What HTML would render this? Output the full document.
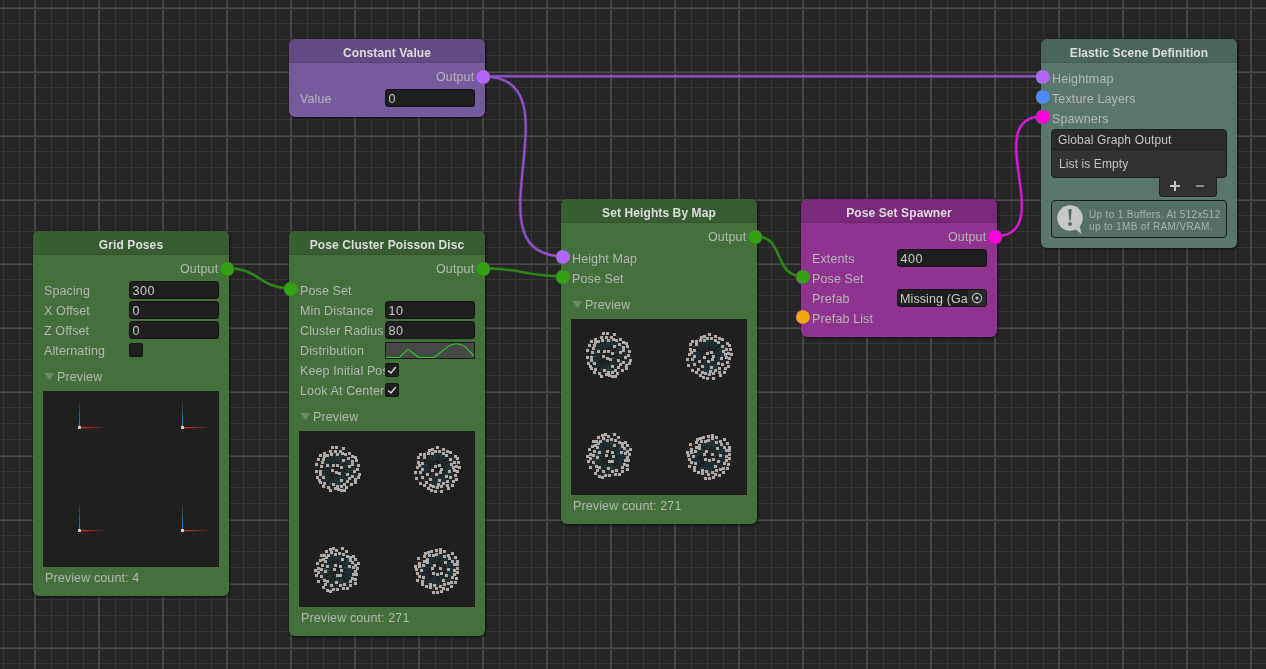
<!DOCTYPE html>
<html><head><meta charset="utf-8"><style>
html,body{margin:0;padding:0;width:1266px;height:669px;overflow:hidden}
body{position:relative;background-color:#262626;
background-image:
linear-gradient(to right,#444 2px,transparent 2px),
linear-gradient(to bottom,#3c3c3c 1px,#4a4a4a 1px,#4a4a4a 2px,transparent 2px),
linear-gradient(to right,#363636 1px,transparent 1px),
linear-gradient(to bottom,#363636 1px,transparent 1px);
background-size:64px 64px,64px 64px,16px 16px,16px 16px;
background-position:34px 0,0 7px,3px 0,0 7px;
font-family:"Liberation Sans",sans-serif}
.abs{position:absolute}
.node{position:absolute;border-radius:6px;box-shadow:1px 1px 3px rgba(0,0,0,.55),0 0 1px rgba(0,0,0,.5);overflow:hidden}
.hdr{height:24px;line-height:28px;text-align:center;color:#dcdcdc;font-weight:bold;font-size:12px;letter-spacing:0.1px;box-shadow:inset 0 -1px 0 rgba(0,0,0,.08)}
.lbl,.fld,.hdr{will-change:transform}
.lbl{position:absolute;height:20px;line-height:20px;font-size:12px;color:#b5b5b5;white-space:nowrap}
.fld{position:absolute;background:#1f1f1f;border-radius:3px;box-sizing:border-box;border:1px solid #151515;color:#cacaca;font-size:12.5px;letter-spacing:0.6px;line-height:18px;padding-left:2.4px;white-space:nowrap;overflow:hidden}
.cb{position:absolute;width:14px;height:14px;background:#1f1f1f;border-radius:2px;box-sizing:border-box;border:1px solid #151515}
.cb svg{position:absolute;left:-1px;top:-1px}
svg.layer{position:absolute;left:0;top:0}
</style></head><body>
<svg class="layer" width="1266" height="669"><path d="M483,76.2 C763.0,76.2 763.0,76.2 1043,76.2" stroke="#8e52ca" stroke-opacity="0.35" stroke-width="3.4" fill="none"/><path d="M483,76.2 C763.0,76.2 763.0,76.2 1043,76.2" stroke="#8e52ca" stroke-width="2.1" fill="none"/><path d="M483,76.2 C581.488578017961,76.2 464.51142198203894,256.2 563,256.2" stroke="#8e52ca" stroke-opacity="0.35" stroke-width="3.4" fill="none"/><path d="M483,76.2 C581.488578017961,76.2 464.51142198203894,256.2 563,256.2" stroke="#8e52ca" stroke-width="2.1" fill="none"/><path d="M227,268.2 C260.52610922848044,268.2 257.47389077151956,288.2 291,288.2" stroke="#2d8a17" stroke-opacity="0.35" stroke-width="3.4" fill="none"/><path d="M227,268.2 C260.52610922848044,268.2 257.47389077151956,288.2 291,288.2" stroke="#2d8a17" stroke-width="2.1" fill="none"/><path d="M483,268.2 C523.1995024844836,268.2 522.8004975155164,276.2 563,276.2" stroke="#2d8a17" stroke-opacity="0.35" stroke-width="3.4" fill="none"/><path d="M483,268.2 C523.1995024844836,268.2 522.8004975155164,276.2 563,276.2" stroke="#2d8a17" stroke-width="2.1" fill="none"/><path d="M755,236.2 C786.2409987036266,236.2 771.7590012963734,276.2 803,276.2" stroke="#2d8a17" stroke-opacity="0.35" stroke-width="3.4" fill="none"/><path d="M755,236.2 C786.2409987036266,236.2 771.7590012963734,276.2 803,276.2" stroke="#2d8a17" stroke-width="2.1" fill="none"/><path d="M995,236.2 C1059.621977685614,236.2 978.3780223143859,116.2 1043,116.2" stroke="#d81ad6" stroke-opacity="0.35" stroke-width="3.4" fill="none"/><path d="M995,236.2 C1059.621977685614,236.2 978.3780223143859,116.2 1043,116.2" stroke="#d81ad6" stroke-width="2.1" fill="none"/></svg>
<div class="node" style="left:289px;top:39px;width:196px;height:78px;background:#765a9e"><div class="hdr" style="background:#624a82">Constant Value</div></div><div class="lbl" style="right:792px;top:67px;font-size:12.5px;letter-spacing:0.12px;text-align:right">Output</div><div class="lbl" style="left:300px;top:89px;font-size:12.5px;letter-spacing:0.12px">Value</div><div class="fld" style="left:385px;top:89.0px;width:90px;height:18px"><span>0</span></div><div class="node" style="left:1041px;top:39px;width:196px;height:209px;background:#59786b"><div class="hdr" style="background:#4a665b">Elastic Scene Definition</div></div><div class="lbl" style="left:1052px;top:69px;font-size:12.5px;letter-spacing:0.12px">Heightmap</div><div class="lbl" style="left:1052px;top:89px;font-size:12.5px;letter-spacing:0.12px">Texture Layers</div><div class="lbl" style="left:1052px;top:109px;font-size:12.5px;letter-spacing:0.12px">Spawners</div><div class="node" style="left:33px;top:231px;width:196px;height:365px;background:#44713b"><div class="hdr" style="background:#395d32">Grid Poses</div></div><div class="lbl" style="right:1048px;top:259px;font-size:12.5px;letter-spacing:0.12px;text-align:right">Output</div><div class="lbl" style="left:44px;top:281px;font-size:12.5px;letter-spacing:0.12px">Spacing</div><div class="fld" style="left:129px;top:281.0px;width:90px;height:18px"><span>300</span></div><div class="lbl" style="left:44px;top:301px;font-size:12.5px;letter-spacing:0.12px">X Offset</div><div class="fld" style="left:129px;top:301.0px;width:90px;height:18px"><span>0</span></div><div class="lbl" style="left:44px;top:321px;font-size:12.5px;letter-spacing:0.12px">Z Offset</div><div class="fld" style="left:129px;top:321.0px;width:90px;height:18px"><span>0</span></div><div class="lbl" style="left:44px;top:341px;font-size:12.5px;letter-spacing:0.12px">Alternating</div><div class="cb" style="left:129px;top:343px"></div><svg class="abs" style="left:45px;top:373px" width="10" height="9"><polygon points="0,0 9,0 4.5,7.6" fill="#6b8c64"/></svg><div class="lbl" style="left:57px;top:367px;font-size:12.5px;letter-spacing:0.12px">Preview</div><div class="lbl" style="left:45px;top:568px;font-size:12.5px;letter-spacing:0.12px">Preview count: 4</div><div class="node" style="left:289px;top:231px;width:196px;height:405px;background:#44713b"><div class="hdr" style="background:#395d32">Pose Cluster Poisson Disc</div></div><div class="lbl" style="right:792px;top:259px;font-size:12.5px;letter-spacing:0.12px;text-align:right">Output</div><div class="lbl" style="left:300px;top:281px;font-size:12.5px;letter-spacing:0.12px">Pose Set</div><div class="lbl" style="left:300px;top:301px;font-size:12.5px;letter-spacing:0.12px">Min Distance</div><div class="fld" style="left:385px;top:301.0px;width:90px;height:18px"><span>10</span></div><div class="lbl" style="left:300px;top:321px;font-size:12.5px;letter-spacing:0.12px">Cluster Radius</div><div class="fld" style="left:385px;top:321.0px;width:90px;height:18px"><span>80</span></div><div class="lbl" style="left:300px;top:341px;font-size:12.5px;letter-spacing:0.12px">Distribution</div><div class="lbl" style="left:300px;top:361px;width:85px;overflow:hidden;font-size:12.5px;letter-spacing:0.12px">Keep Initial Pos</div><div class="cb" style="left:385px;top:363px"><svg width="14" height="14" viewBox="0 0 14 14"><polyline points="3.2,7.6 6,10 10.8,4" fill="none" stroke="#d4d4d4" stroke-width="1.5"/></svg></div><div class="lbl" style="left:300px;top:381px;width:85px;overflow:hidden;font-size:12.5px;letter-spacing:0.12px">Look At Center</div><div class="cb" style="left:385px;top:383px"><svg width="14" height="14" viewBox="0 0 14 14"><polyline points="3.2,7.6 6,10 10.8,4" fill="none" stroke="#d4d4d4" stroke-width="1.5"/></svg></div><svg class="abs" style="left:301px;top:413px" width="10" height="9"><polygon points="0,0 9,0 4.5,7.6" fill="#6b8c64"/></svg><div class="lbl" style="left:313px;top:407px;font-size:12.5px;letter-spacing:0.12px">Preview</div><div class="lbl" style="left:301px;top:608px;font-size:12.5px;letter-spacing:0.12px">Preview count: 271</div><div class="node" style="left:561px;top:199px;width:196px;height:325px;background:#44713b"><div class="hdr" style="background:#395d32">Set Heights By Map</div></div><div class="lbl" style="right:520px;top:227px;font-size:12.5px;letter-spacing:0.12px;text-align:right">Output</div><div class="lbl" style="left:572px;top:249px;font-size:12.5px;letter-spacing:0.12px">Height Map</div><div class="lbl" style="left:572px;top:269px;font-size:12.5px;letter-spacing:0.12px">Pose Set</div><svg class="abs" style="left:573px;top:301px" width="10" height="9"><polygon points="0,0 9,0 4.5,7.6" fill="#6b8c64"/></svg><div class="lbl" style="left:585px;top:295px;font-size:12.5px;letter-spacing:0.12px">Preview</div><div class="lbl" style="left:573px;top:496px;font-size:12.5px;letter-spacing:0.12px">Preview count: 271</div><div class="node" style="left:801px;top:199px;width:196px;height:138px;background:#8f3290"><div class="hdr" style="background:#7b2a7b">Pose Set Spawner</div></div><div class="lbl" style="right:280px;top:227px;font-size:12.5px;letter-spacing:0.12px;text-align:right">Output</div><div class="lbl" style="left:812px;top:249px;font-size:12.5px;letter-spacing:0.12px">Extents</div><div class="fld" style="left:897px;top:249.0px;width:90px;height:18px"><span>400</span></div><div class="lbl" style="left:812px;top:269px;font-size:12.5px;letter-spacing:0.12px">Pose Set</div><div class="lbl" style="left:812px;top:289px;font-size:12.5px;letter-spacing:0.12px">Prefab</div><div class="lbl" style="left:812px;top:309px;font-size:12.5px;letter-spacing:0.12px">Prefab List</div><svg class="abs" style="left:43px;top:391px" width="176" height="176"><defs><linearGradient id="gb" x1="0" y1="1" x2="0" y2="0"><stop offset="0" stop-color="#1e9ae0" stop-opacity="0.9"/><stop offset="1" stop-color="#22a8f0" stop-opacity="0"/></linearGradient><linearGradient id="gr" x1="0" y1="0" x2="1" y2="0"><stop offset="0" stop-color="#e03010"/><stop offset="1" stop-color="#e03010" stop-opacity="0"/></linearGradient></defs><rect width="176" height="176" fill="#1f1f1f"/><rect x="36" y="7" width="1" height="29" fill="url(#gb)"/><rect x="38" y="36" width="27" height="1.2" fill="url(#gr)"/><rect x="35" y="35" width="3" height="3" fill="#c8c8c8"/><rect x="139" y="7" width="1" height="29" fill="url(#gb)"/><rect x="141" y="36" width="27" height="1.2" fill="url(#gr)"/><rect x="138" y="35" width="3" height="3" fill="#c8c8c8"/><rect x="36" y="110" width="1" height="29" fill="url(#gb)"/><rect x="38" y="139" width="27" height="1.2" fill="url(#gr)"/><rect x="35" y="138" width="3" height="3" fill="#c8c8c8"/><rect x="139" y="110" width="1" height="29" fill="url(#gb)"/><rect x="141" y="139" width="27" height="1.2" fill="url(#gr)"/><rect x="138" y="138" width="3" height="3" fill="#c8c8c8"/></svg><svg class="abs" style="left:299px;top:431px" width="176" height="176"><rect width="176" height="176" fill="#1f1f1f"/><line x1="33.4" y1="39.4" x2="35.9" y2="38.6" stroke="#1588a0" stroke-opacity="0.4" stroke-width="0.7"/><line x1="32.7" y1="37.0" x2="34.6" y2="43.2" stroke="#b0401a" stroke-opacity="0.5" stroke-width="0.9"/><line x1="42.0" y1="35.9" x2="39.8" y2="37.1" stroke="#1588a0" stroke-opacity="0.4" stroke-width="0.7"/><line x1="43.1" y1="38.2" x2="40.2" y2="32.4" stroke="#b0401a" stroke-opacity="0.5" stroke-width="0.9"/><line x1="39.8" y1="42.2" x2="38.8" y2="39.9" stroke="#1588a0" stroke-opacity="0.4" stroke-width="0.7"/><line x1="37.6" y1="43.2" x2="43.5" y2="40.7" stroke="#b0401a" stroke-opacity="0.5" stroke-width="0.9"/><line x1="34.3" y1="34.0" x2="36.3" y2="36.2" stroke="#1588a0" stroke-opacity="0.4" stroke-width="0.7"/><line x1="36.1" y1="32.3" x2="31.3" y2="36.8" stroke="#b0401a" stroke-opacity="0.5" stroke-width="0.9"/><line x1="36.6" y1="41.3" x2="37.4" y2="39.5" stroke="#1588a0" stroke-opacity="0.4" stroke-width="0.7"/><line x1="34.3" y1="40.3" x2="40.2" y2="42.9" stroke="#b0401a" stroke-opacity="0.5" stroke-width="0.9"/><line x1="38.4" y1="33.8" x2="38.2" y2="36.1" stroke="#1588a0" stroke-opacity="0.4" stroke-width="0.7"/><line x1="40.9" y1="34.0" x2="34.5" y2="33.4" stroke="#b0401a" stroke-opacity="0.5" stroke-width="0.9"/><line x1="44.1" y1="29.2" x2="40.8" y2="34.0" stroke="#1588a0" stroke-opacity="0.4" stroke-width="0.7"/><line x1="46.2" y1="30.6" x2="40.8" y2="26.9" stroke="#b0401a" stroke-opacity="0.5" stroke-width="0.9"/><line x1="50.0" y1="34.7" x2="43.4" y2="36.5" stroke="#1588a0" stroke-opacity="0.4" stroke-width="0.7"/><line x1="50.7" y1="37.2" x2="49.0" y2="30.9" stroke="#b0401a" stroke-opacity="0.5" stroke-width="0.9"/><line x1="48.5" y1="43.2" x2="42.7" y2="40.3" stroke="#1588a0" stroke-opacity="0.4" stroke-width="0.7"/><line x1="47.4" y1="45.4" x2="50.2" y2="39.6" stroke="#b0401a" stroke-opacity="0.5" stroke-width="0.9"/><line x1="27.8" y1="34.0" x2="33.4" y2="36.2" stroke="#1588a0" stroke-opacity="0.4" stroke-width="0.7"/><line x1="28.7" y1="31.7" x2="26.3" y2="37.7" stroke="#b0401a" stroke-opacity="0.5" stroke-width="0.9"/><line x1="42.4" y1="49.2" x2="40.0" y2="43.1" stroke="#1588a0" stroke-opacity="0.4" stroke-width="0.7"/><line x1="40.1" y1="50.1" x2="46.1" y2="47.8" stroke="#b0401a" stroke-opacity="0.5" stroke-width="0.9"/><line x1="51.7" y1="52.8" x2="45.6" y2="46.2" stroke="#1588a0" stroke-opacity="0.4" stroke-width="0.7"/><line x1="49.9" y1="54.5" x2="54.6" y2="50.1" stroke="#b0401a" stroke-opacity="0.5" stroke-width="0.9"/><line x1="42.0" y1="54.9" x2="39.9" y2="46.1" stroke="#1588a0" stroke-opacity="0.4" stroke-width="0.7"/><line x1="39.6" y1="55.5" x2="45.9" y2="54.0" stroke="#b0401a" stroke-opacity="0.5" stroke-width="0.9"/><line x1="58.9" y1="34.1" x2="50.0" y2="35.8" stroke="#1588a0" stroke-opacity="0.4" stroke-width="0.7"/><line x1="59.3" y1="36.6" x2="58.2" y2="30.2" stroke="#b0401a" stroke-opacity="0.5" stroke-width="0.9"/><line x1="30.7" y1="58.5" x2="33.7" y2="50.0" stroke="#1588a0" stroke-opacity="0.4" stroke-width="0.7"/><line x1="28.4" y1="57.7" x2="34.5" y2="59.9" stroke="#b0401a" stroke-opacity="0.5" stroke-width="0.9"/><line x1="50.3" y1="22.0" x2="44.8" y2="29.2" stroke="#1588a0" stroke-opacity="0.4" stroke-width="0.7"/><line x1="52.3" y1="23.6" x2="47.1" y2="19.6" stroke="#b0401a" stroke-opacity="0.5" stroke-width="0.9"/><line x1="56.1" y1="51.2" x2="48.9" y2="45.9" stroke="#1588a0" stroke-opacity="0.4" stroke-width="0.7"/><line x1="54.6" y1="53.2" x2="58.5" y2="48.0" stroke="#b0401a" stroke-opacity="0.5" stroke-width="0.9"/><line x1="40.5" y1="20.4" x2="39.3" y2="29.3" stroke="#1588a0" stroke-opacity="0.4" stroke-width="0.7"/><line x1="43.0" y1="20.7" x2="36.6" y2="19.8" stroke="#b0401a" stroke-opacity="0.5" stroke-width="0.9"/><line x1="33.5" y1="53.0" x2="36.0" y2="44.8" stroke="#1588a0" stroke-opacity="0.4" stroke-width="0.7"/><line x1="31.1" y1="52.3" x2="37.3" y2="54.2" stroke="#b0401a" stroke-opacity="0.5" stroke-width="0.9"/><line x1="38.9" y1="57.8" x2="38.5" y2="48.8" stroke="#1588a0" stroke-opacity="0.4" stroke-width="0.7"/><line x1="36.4" y1="57.9" x2="42.9" y2="57.7" stroke="#b0401a" stroke-opacity="0.5" stroke-width="0.9"/><line x1="25.0" y1="51.5" x2="31.2" y2="45.1" stroke="#1588a0" stroke-opacity="0.4" stroke-width="0.7"/><line x1="23.2" y1="49.8" x2="27.9" y2="54.3" stroke="#b0401a" stroke-opacity="0.5" stroke-width="0.9"/><line x1="18.7" y1="28.2" x2="26.7" y2="32.3" stroke="#1588a0" stroke-opacity="0.4" stroke-width="0.7"/><line x1="19.8" y1="26.0" x2="16.9" y2="31.8" stroke="#b0401a" stroke-opacity="0.5" stroke-width="0.9"/><line x1="44.7" y1="52.9" x2="41.0" y2="44.7" stroke="#1588a0" stroke-opacity="0.4" stroke-width="0.7"/><line x1="42.4" y1="54.0" x2="48.4" y2="51.3" stroke="#b0401a" stroke-opacity="0.5" stroke-width="0.9"/><line x1="55.9" y1="26.4" x2="48.3" y2="31.3" stroke="#1588a0" stroke-opacity="0.4" stroke-width="0.7"/><line x1="57.3" y1="28.5" x2="53.7" y2="23.0" stroke="#b0401a" stroke-opacity="0.5" stroke-width="0.9"/><line x1="38.1" y1="54.7" x2="38.0" y2="45.7" stroke="#1588a0" stroke-opacity="0.4" stroke-width="0.7"/><line x1="35.6" y1="54.7" x2="42.1" y2="54.7" stroke="#b0401a" stroke-opacity="0.5" stroke-width="0.9"/><line x1="36.5" y1="15.9" x2="37.1" y2="24.9" stroke="#1588a0" stroke-opacity="0.4" stroke-width="0.7"/><line x1="39.0" y1="15.8" x2="32.5" y2="16.2" stroke="#b0401a" stroke-opacity="0.5" stroke-width="0.9"/><line x1="45.3" y1="58.9" x2="42.3" y2="50.5" stroke="#1588a0" stroke-opacity="0.4" stroke-width="0.7"/><line x1="42.9" y1="59.8" x2="49.1" y2="57.6" stroke="#b0401a" stroke-opacity="0.5" stroke-width="0.9"/><line x1="52.7" y1="24.6" x2="46.0" y2="30.7" stroke="#1588a0" stroke-opacity="0.4" stroke-width="0.7"/><line x1="54.4" y1="26.4" x2="50.0" y2="21.6" stroke="#b0401a" stroke-opacity="0.5" stroke-width="0.9"/><line x1="24.0" y1="45.6" x2="31.7" y2="41.4" stroke="#1588a0" stroke-opacity="0.4" stroke-width="0.7"/><line x1="22.8" y1="43.4" x2="25.9" y2="49.1" stroke="#b0401a" stroke-opacity="0.5" stroke-width="0.9"/><line x1="59.6" y1="43.4" x2="50.9" y2="41.2" stroke="#1588a0" stroke-opacity="0.4" stroke-width="0.7"/><line x1="59.0" y1="45.8" x2="60.6" y2="39.5" stroke="#b0401a" stroke-opacity="0.5" stroke-width="0.9"/><line x1="23.6" y1="28.0" x2="31.0" y2="33.1" stroke="#1588a0" stroke-opacity="0.4" stroke-width="0.7"/><line x1="25.0" y1="26.0" x2="21.3" y2="31.3" stroke="#b0401a" stroke-opacity="0.5" stroke-width="0.9"/><line x1="47.3" y1="56.5" x2="43.3" y2="48.4" stroke="#1588a0" stroke-opacity="0.4" stroke-width="0.7"/><line x1="45.1" y1="57.6" x2="50.9" y2="54.6" stroke="#b0401a" stroke-opacity="0.5" stroke-width="0.9"/><line x1="53.4" y1="45.1" x2="45.3" y2="41.4" stroke="#1588a0" stroke-opacity="0.4" stroke-width="0.7"/><line x1="52.4" y1="47.4" x2="55.1" y2="41.5" stroke="#b0401a" stroke-opacity="0.5" stroke-width="0.9"/><line x1="52.6" y1="29.7" x2="44.8" y2="34.1" stroke="#1588a0" stroke-opacity="0.4" stroke-width="0.7"/><line x1="53.8" y1="31.8" x2="50.6" y2="26.2" stroke="#b0401a" stroke-opacity="0.5" stroke-width="0.9"/><line x1="55.2" y1="39.8" x2="46.3" y2="38.9" stroke="#1588a0" stroke-opacity="0.4" stroke-width="0.7"/><line x1="55.0" y1="42.3" x2="55.7" y2="35.8" stroke="#b0401a" stroke-opacity="0.5" stroke-width="0.9"/><line x1="23.9" y1="54.6" x2="29.7" y2="47.8" stroke="#1588a0" stroke-opacity="0.4" stroke-width="0.7"/><line x1="22.0" y1="53.0" x2="26.9" y2="57.2" stroke="#b0401a" stroke-opacity="0.5" stroke-width="0.9"/><line x1="30.9" y1="19.6" x2="34.1" y2="28.0" stroke="#1588a0" stroke-opacity="0.4" stroke-width="0.7"/><line x1="33.2" y1="18.7" x2="27.1" y2="21.0" stroke="#b0401a" stroke-opacity="0.5" stroke-width="0.9"/><line x1="47.7" y1="49.8" x2="42.4" y2="43.3" stroke="#1588a0" stroke-opacity="0.4" stroke-width="0.7"/><line x1="45.8" y1="51.4" x2="50.8" y2="47.3" stroke="#b0401a" stroke-opacity="0.5" stroke-width="0.9"/><line x1="17.4" y1="40.3" x2="26.3" y2="39.3" stroke="#1588a0" stroke-opacity="0.4" stroke-width="0.7"/><line x1="17.1" y1="37.8" x2="17.8" y2="44.3" stroke="#b0401a" stroke-opacity="0.5" stroke-width="0.9"/><line x1="43.9" y1="16.8" x2="41.5" y2="25.5" stroke="#1588a0" stroke-opacity="0.4" stroke-width="0.7"/><line x1="46.3" y1="17.5" x2="40.0" y2="15.8" stroke="#b0401a" stroke-opacity="0.5" stroke-width="0.9"/><line x1="19.7" y1="48.5" x2="27.5" y2="44.0" stroke="#1588a0" stroke-opacity="0.4" stroke-width="0.7"/><line x1="18.4" y1="46.4" x2="21.6" y2="52.0" stroke="#b0401a" stroke-opacity="0.5" stroke-width="0.9"/><line x1="25.1" y1="25.1" x2="31.5" y2="31.5" stroke="#1588a0" stroke-opacity="0.4" stroke-width="0.7"/><line x1="26.9" y1="23.3" x2="22.3" y2="27.9" stroke="#b0401a" stroke-opacity="0.5" stroke-width="0.9"/><line x1="55.6" y1="47.7" x2="47.7" y2="43.4" stroke="#1588a0" stroke-opacity="0.4" stroke-width="0.7"/><line x1="54.4" y1="49.9" x2="57.6" y2="44.2" stroke="#b0401a" stroke-opacity="0.5" stroke-width="0.9"/><line x1="35.5" y1="19.9" x2="36.7" y2="28.8" stroke="#1588a0" stroke-opacity="0.4" stroke-width="0.7"/><line x1="38.0" y1="19.5" x2="31.5" y2="20.4" stroke="#b0401a" stroke-opacity="0.5" stroke-width="0.9"/><line x1="18.0" y1="45.8" x2="26.4" y2="42.6" stroke="#1588a0" stroke-opacity="0.4" stroke-width="0.7"/><line x1="17.1" y1="43.5" x2="19.5" y2="49.6" stroke="#b0401a" stroke-opacity="0.5" stroke-width="0.9"/><line x1="21.1" y1="40.0" x2="30.0" y2="39.0" stroke="#1588a0" stroke-opacity="0.4" stroke-width="0.7"/><line x1="20.8" y1="37.5" x2="21.6" y2="44.0" stroke="#b0401a" stroke-opacity="0.5" stroke-width="0.9"/><line x1="21.5" y1="23.5" x2="28.2" y2="29.4" stroke="#1588a0" stroke-opacity="0.4" stroke-width="0.7"/><line x1="23.1" y1="21.6" x2="18.8" y2="26.5" stroke="#b0401a" stroke-opacity="0.5" stroke-width="0.9"/><line x1="28.6" y1="56.0" x2="32.7" y2="48.0" stroke="#1588a0" stroke-opacity="0.4" stroke-width="0.7"/><line x1="26.3" y1="54.8" x2="32.1" y2="57.8" stroke="#b0401a" stroke-opacity="0.5" stroke-width="0.9"/><line x1="32.6" y1="16.5" x2="34.8" y2="25.2" stroke="#1588a0" stroke-opacity="0.4" stroke-width="0.7"/><line x1="35.1" y1="15.9" x2="28.8" y2="17.4" stroke="#b0401a" stroke-opacity="0.5" stroke-width="0.9"/><line x1="21.4" y1="43.3" x2="30.0" y2="40.6" stroke="#1588a0" stroke-opacity="0.4" stroke-width="0.7"/><line x1="20.7" y1="40.9" x2="22.7" y2="47.1" stroke="#b0401a" stroke-opacity="0.5" stroke-width="0.9"/><line x1="48.7" y1="27.0" x2="42.8" y2="33.0" stroke="#1588a0" stroke-opacity="0.4" stroke-width="0.7"/><line x1="50.5" y1="28.7" x2="45.9" y2="24.2" stroke="#b0401a" stroke-opacity="0.5" stroke-width="0.9"/><line x1="46.2" y1="23.0" x2="41.9" y2="30.9" stroke="#1588a0" stroke-opacity="0.4" stroke-width="0.7"/><line x1="48.4" y1="24.2" x2="42.7" y2="21.1" stroke="#b0401a" stroke-opacity="0.5" stroke-width="0.9"/><line x1="21.4" y1="51.1" x2="28.5" y2="45.5" stroke="#1588a0" stroke-opacity="0.4" stroke-width="0.7"/><line x1="19.9" y1="49.2" x2="23.9" y2="54.3" stroke="#b0401a" stroke-opacity="0.5" stroke-width="0.9"/><line x1="56.9" y1="29.5" x2="48.7" y2="33.2" stroke="#1588a0" stroke-opacity="0.4" stroke-width="0.7"/><line x1="57.9" y1="31.8" x2="55.2" y2="25.9" stroke="#b0401a" stroke-opacity="0.5" stroke-width="0.9"/><line x1="28.2" y1="24.3" x2="33.5" y2="31.6" stroke="#1588a0" stroke-opacity="0.4" stroke-width="0.7"/><line x1="30.3" y1="22.9" x2="25.0" y2="26.6" stroke="#b0401a" stroke-opacity="0.5" stroke-width="0.9"/><line x1="25.0" y1="21.9" x2="30.7" y2="28.9" stroke="#1588a0" stroke-opacity="0.4" stroke-width="0.7"/><line x1="26.9" y1="20.4" x2="21.9" y2="24.5" stroke="#b0401a" stroke-opacity="0.5" stroke-width="0.9"/><line x1="17.4" y1="33.1" x2="26.2" y2="35.2" stroke="#1588a0" stroke-opacity="0.4" stroke-width="0.7"/><line x1="18.0" y1="30.7" x2="16.5" y2="37.0" stroke="#b0401a" stroke-opacity="0.5" stroke-width="0.9"/><line x1="43.1" y1="22.3" x2="40.3" y2="30.8" stroke="#1588a0" stroke-opacity="0.4" stroke-width="0.7"/><line x1="45.5" y1="23.0" x2="39.3" y2="21.0" stroke="#b0401a" stroke-opacity="0.5" stroke-width="0.9"/><line x1="53.0" y1="33.0" x2="44.7" y2="35.8" stroke="#1588a0" stroke-opacity="0.4" stroke-width="0.7"/><line x1="53.8" y1="35.4" x2="51.7" y2="29.2" stroke="#b0401a" stroke-opacity="0.5" stroke-width="0.9"/><line x1="32.3" y1="23.5" x2="35.5" y2="31.5" stroke="#1588a0" stroke-opacity="0.4" stroke-width="0.7"/><line x1="34.7" y1="22.5" x2="28.6" y2="24.9" stroke="#b0401a" stroke-opacity="0.5" stroke-width="0.9"/><line x1="35.7" y1="56.8" x2="36.8" y2="47.9" stroke="#1588a0" stroke-opacity="0.4" stroke-width="0.7"/><line x1="33.2" y1="56.5" x2="39.7" y2="57.3" stroke="#b0401a" stroke-opacity="0.5" stroke-width="0.9"/><line x1="21.8" y1="35.0" x2="30.7" y2="36.6" stroke="#1588a0" stroke-opacity="0.4" stroke-width="0.7"/><line x1="22.3" y1="32.5" x2="21.1" y2="38.9" stroke="#b0401a" stroke-opacity="0.5" stroke-width="0.9"/><line x1="50.1" y1="47.5" x2="43.4" y2="42.3" stroke="#1588a0" stroke-opacity="0.4" stroke-width="0.7"/><line x1="48.5" y1="49.5" x2="52.5" y2="44.4" stroke="#b0401a" stroke-opacity="0.5" stroke-width="0.9"/><line x1="23.2" y1="31.2" x2="31.3" y2="34.9" stroke="#1588a0" stroke-opacity="0.4" stroke-width="0.7"/><line x1="24.2" y1="28.9" x2="21.5" y2="34.8" stroke="#b0401a" stroke-opacity="0.5" stroke-width="0.9"/><line x1="58.5" y1="46.4" x2="50.2" y2="43.0" stroke="#1588a0" stroke-opacity="0.4" stroke-width="0.7"/><line x1="57.6" y1="48.7" x2="60.1" y2="42.7" stroke="#b0401a" stroke-opacity="0.5" stroke-width="0.9"/><line x1="58.1" y1="38.0" x2="49.1" y2="38.0" stroke="#1588a0" stroke-opacity="0.4" stroke-width="0.7"/><line x1="58.1" y1="40.5" x2="58.1" y2="34.0" stroke="#b0401a" stroke-opacity="0.5" stroke-width="0.9"/><line x1="37.8" y1="22.5" x2="37.9" y2="31.0" stroke="#1588a0" stroke-opacity="0.4" stroke-width="0.7"/><line x1="40.3" y1="22.5" x2="33.8" y2="22.6" stroke="#b0401a" stroke-opacity="0.5" stroke-width="0.9"/><line x1="41.9" y1="58.6" x2="40.2" y2="49.8" stroke="#1588a0" stroke-opacity="0.4" stroke-width="0.7"/><line x1="39.4" y1="59.1" x2="45.8" y2="57.9" stroke="#b0401a" stroke-opacity="0.5" stroke-width="0.9"/><line x1="133.0" y1="38.8" x2="135.7" y2="38.4" stroke="#1588a0" stroke-opacity="0.4" stroke-width="0.7"/><line x1="132.6" y1="36.3" x2="133.6" y2="42.8" stroke="#b0401a" stroke-opacity="0.5" stroke-width="0.9"/><line x1="136.4" y1="35.2" x2="137.3" y2="36.7" stroke="#1588a0" stroke-opacity="0.4" stroke-width="0.7"/><line x1="138.5" y1="33.9" x2="132.9" y2="37.2" stroke="#b0401a" stroke-opacity="0.5" stroke-width="0.9"/><line x1="142.2" y1="38.3" x2="139.9" y2="38.1" stroke="#1588a0" stroke-opacity="0.4" stroke-width="0.7"/><line x1="142.0" y1="40.8" x2="142.4" y2="34.3" stroke="#b0401a" stroke-opacity="0.5" stroke-width="0.9"/><line x1="137.2" y1="43.4" x2="137.6" y2="40.5" stroke="#1588a0" stroke-opacity="0.4" stroke-width="0.7"/><line x1="134.7" y1="43.1" x2="141.1" y2="44.0" stroke="#b0401a" stroke-opacity="0.5" stroke-width="0.9"/><line x1="140.7" y1="41.5" x2="139.2" y2="39.6" stroke="#1588a0" stroke-opacity="0.4" stroke-width="0.7"/><line x1="138.7" y1="43.0" x2="143.9" y2="39.0" stroke="#b0401a" stroke-opacity="0.5" stroke-width="0.9"/><line x1="139.7" y1="33.7" x2="138.8" y2="36.1" stroke="#1588a0" stroke-opacity="0.4" stroke-width="0.7"/><line x1="142.0" y1="34.6" x2="136.0" y2="32.3" stroke="#b0401a" stroke-opacity="0.5" stroke-width="0.9"/><line x1="150.2" y1="40.2" x2="143.5" y2="39.0" stroke="#1588a0" stroke-opacity="0.4" stroke-width="0.7"/><line x1="149.8" y1="42.6" x2="150.9" y2="36.2" stroke="#b0401a" stroke-opacity="0.5" stroke-width="0.9"/><line x1="127.8" y1="42.8" x2="133.4" y2="40.2" stroke="#1588a0" stroke-opacity="0.4" stroke-width="0.7"/><line x1="126.7" y1="40.5" x2="129.5" y2="46.4" stroke="#b0401a" stroke-opacity="0.5" stroke-width="0.9"/><line x1="139.9" y1="48.7" x2="138.9" y2="42.8" stroke="#1588a0" stroke-opacity="0.4" stroke-width="0.7"/><line x1="137.4" y1="49.2" x2="143.8" y2="48.0" stroke="#b0401a" stroke-opacity="0.5" stroke-width="0.9"/><line x1="147.1" y1="44.8" x2="142.1" y2="41.1" stroke="#1588a0" stroke-opacity="0.4" stroke-width="0.7"/><line x1="145.6" y1="46.8" x2="149.5" y2="41.6" stroke="#b0401a" stroke-opacity="0.5" stroke-width="0.9"/><line x1="131.5" y1="47.7" x2="135.1" y2="42.4" stroke="#1588a0" stroke-opacity="0.4" stroke-width="0.7"/><line x1="129.4" y1="46.3" x2="134.8" y2="49.9" stroke="#b0401a" stroke-opacity="0.5" stroke-width="0.9"/><line x1="155.8" y1="44.0" x2="147.3" y2="41.2" stroke="#1588a0" stroke-opacity="0.4" stroke-width="0.7"/><line x1="155.0" y1="46.4" x2="157.1" y2="40.3" stroke="#b0401a" stroke-opacity="0.5" stroke-width="0.9"/><line x1="142.5" y1="54.9" x2="140.2" y2="46.2" stroke="#1588a0" stroke-opacity="0.4" stroke-width="0.7"/><line x1="140.0" y1="55.5" x2="146.3" y2="53.8" stroke="#b0401a" stroke-opacity="0.5" stroke-width="0.9"/><line x1="116.0" y1="41.3" x2="124.9" y2="40.0" stroke="#1588a0" stroke-opacity="0.4" stroke-width="0.7"/><line x1="115.6" y1="38.8" x2="116.6" y2="45.3" stroke="#b0401a" stroke-opacity="0.5" stroke-width="0.9"/><line x1="148.9" y1="57.1" x2="144.4" y2="49.3" stroke="#1588a0" stroke-opacity="0.4" stroke-width="0.7"/><line x1="146.7" y1="58.4" x2="152.4" y2="55.2" stroke="#b0401a" stroke-opacity="0.5" stroke-width="0.9"/><line x1="127.0" y1="50.6" x2="133.0" y2="43.8" stroke="#1588a0" stroke-opacity="0.4" stroke-width="0.7"/><line x1="125.1" y1="48.9" x2="130.0" y2="53.2" stroke="#b0401a" stroke-opacity="0.5" stroke-width="0.9"/><line x1="137.8" y1="16.1" x2="137.9" y2="25.1" stroke="#1588a0" stroke-opacity="0.4" stroke-width="0.7"/><line x1="140.3" y1="16.0" x2="133.8" y2="16.1" stroke="#b0401a" stroke-opacity="0.5" stroke-width="0.9"/><line x1="155.3" y1="38.7" x2="146.3" y2="38.3" stroke="#1588a0" stroke-opacity="0.4" stroke-width="0.7"/><line x1="155.2" y1="41.2" x2="155.5" y2="34.7" stroke="#b0401a" stroke-opacity="0.5" stroke-width="0.9"/><line x1="140.3" y1="20.2" x2="139.2" y2="29.2" stroke="#1588a0" stroke-opacity="0.4" stroke-width="0.7"/><line x1="142.8" y1="20.6" x2="136.4" y2="19.7" stroke="#b0401a" stroke-opacity="0.5" stroke-width="0.9"/><line x1="138.8" y1="53.1" x2="138.4" y2="44.8" stroke="#1588a0" stroke-opacity="0.4" stroke-width="0.7"/><line x1="136.3" y1="53.2" x2="142.8" y2="52.8" stroke="#b0401a" stroke-opacity="0.5" stroke-width="0.9"/><line x1="160.4" y1="35.7" x2="151.4" y2="36.6" stroke="#1588a0" stroke-opacity="0.4" stroke-width="0.7"/><line x1="160.6" y1="38.2" x2="160.0" y2="31.7" stroke="#b0401a" stroke-opacity="0.5" stroke-width="0.9"/><line x1="122.8" y1="37.7" x2="131.2" y2="37.8" stroke="#1588a0" stroke-opacity="0.4" stroke-width="0.7"/><line x1="122.8" y1="35.2" x2="122.7" y2="41.7" stroke="#b0401a" stroke-opacity="0.5" stroke-width="0.9"/><line x1="128.7" y1="57.0" x2="132.7" y2="48.9" stroke="#1588a0" stroke-opacity="0.4" stroke-width="0.7"/><line x1="126.5" y1="55.9" x2="132.3" y2="58.7" stroke="#b0401a" stroke-opacity="0.5" stroke-width="0.9"/><line x1="147.9" y1="20.5" x2="143.5" y2="28.3" stroke="#1588a0" stroke-opacity="0.4" stroke-width="0.7"/><line x1="150.1" y1="21.7" x2="144.4" y2="18.5" stroke="#b0401a" stroke-opacity="0.5" stroke-width="0.9"/><line x1="136.2" y1="60.1" x2="137.0" y2="51.1" stroke="#1588a0" stroke-opacity="0.4" stroke-width="0.7"/><line x1="133.7" y1="59.9" x2="140.2" y2="60.4" stroke="#b0401a" stroke-opacity="0.5" stroke-width="0.9"/><line x1="151.0" y1="27.9" x2="143.9" y2="33.4" stroke="#1588a0" stroke-opacity="0.4" stroke-width="0.7"/><line x1="152.5" y1="29.8" x2="148.5" y2="24.7" stroke="#b0401a" stroke-opacity="0.5" stroke-width="0.9"/><line x1="132.4" y1="59.0" x2="134.7" y2="50.3" stroke="#1588a0" stroke-opacity="0.4" stroke-width="0.7"/><line x1="130.0" y1="58.3" x2="136.3" y2="60.0" stroke="#b0401a" stroke-opacity="0.5" stroke-width="0.9"/><line x1="117.6" y1="36.0" x2="126.5" y2="36.9" stroke="#1588a0" stroke-opacity="0.4" stroke-width="0.7"/><line x1="117.8" y1="33.6" x2="117.2" y2="40.0" stroke="#b0401a" stroke-opacity="0.5" stroke-width="0.9"/><line x1="133.3" y1="21.8" x2="135.8" y2="30.4" stroke="#1588a0" stroke-opacity="0.4" stroke-width="0.7"/><line x1="135.7" y1="21.1" x2="129.4" y2="22.9" stroke="#b0401a" stroke-opacity="0.5" stroke-width="0.9"/><line x1="134.2" y1="54.8" x2="136.2" y2="46.0" stroke="#1588a0" stroke-opacity="0.4" stroke-width="0.7"/><line x1="131.8" y1="54.3" x2="138.1" y2="55.7" stroke="#b0401a" stroke-opacity="0.5" stroke-width="0.9"/><line x1="129.7" y1="19.3" x2="133.3" y2="27.5" stroke="#1588a0" stroke-opacity="0.4" stroke-width="0.7"/><line x1="131.9" y1="18.3" x2="126.0" y2="20.9" stroke="#b0401a" stroke-opacity="0.5" stroke-width="0.9"/><line x1="152.7" y1="54.0" x2="146.6" y2="47.4" stroke="#1588a0" stroke-opacity="0.4" stroke-width="0.7"/><line x1="150.9" y1="55.7" x2="155.7" y2="51.3" stroke="#b0401a" stroke-opacity="0.5" stroke-width="0.9"/><line x1="123.0" y1="46.2" x2="130.9" y2="41.9" stroke="#1588a0" stroke-opacity="0.4" stroke-width="0.7"/><line x1="121.8" y1="44.0" x2="124.9" y2="49.7" stroke="#b0401a" stroke-opacity="0.5" stroke-width="0.9"/><line x1="117.5" y1="46.8" x2="125.7" y2="43.3" stroke="#1588a0" stroke-opacity="0.4" stroke-width="0.7"/><line x1="116.5" y1="44.6" x2="119.0" y2="50.5" stroke="#b0401a" stroke-opacity="0.5" stroke-width="0.9"/><line x1="119.4" y1="30.6" x2="127.8" y2="33.9" stroke="#1588a0" stroke-opacity="0.4" stroke-width="0.7"/><line x1="120.3" y1="28.3" x2="117.9" y2="34.4" stroke="#b0401a" stroke-opacity="0.5" stroke-width="0.9"/><line x1="157.5" y1="27.3" x2="149.6" y2="31.6" stroke="#1588a0" stroke-opacity="0.4" stroke-width="0.7"/><line x1="158.7" y1="29.5" x2="155.6" y2="23.8" stroke="#b0401a" stroke-opacity="0.5" stroke-width="0.9"/><line x1="119.4" y1="26.5" x2="127.1" y2="31.2" stroke="#1588a0" stroke-opacity="0.4" stroke-width="0.7"/><line x1="120.7" y1="24.3" x2="117.3" y2="29.9" stroke="#b0401a" stroke-opacity="0.5" stroke-width="0.9"/><line x1="158.5" y1="40.2" x2="149.5" y2="39.2" stroke="#1588a0" stroke-opacity="0.4" stroke-width="0.7"/><line x1="158.2" y1="42.7" x2="158.9" y2="36.2" stroke="#b0401a" stroke-opacity="0.5" stroke-width="0.9"/><line x1="155.5" y1="24.8" x2="148.3" y2="30.2" stroke="#1588a0" stroke-opacity="0.4" stroke-width="0.7"/><line x1="157.0" y1="26.8" x2="153.1" y2="21.6" stroke="#b0401a" stroke-opacity="0.5" stroke-width="0.9"/><line x1="138.5" y1="56.4" x2="138.3" y2="47.4" stroke="#1588a0" stroke-opacity="0.4" stroke-width="0.7"/><line x1="136.0" y1="56.5" x2="142.5" y2="56.3" stroke="#b0401a" stroke-opacity="0.5" stroke-width="0.9"/><line x1="147.9" y1="50.3" x2="142.5" y2="43.5" stroke="#1588a0" stroke-opacity="0.4" stroke-width="0.7"/><line x1="146.0" y1="51.9" x2="151.1" y2="47.8" stroke="#b0401a" stroke-opacity="0.5" stroke-width="0.9"/><line x1="154.6" y1="30.8" x2="146.4" y2="34.4" stroke="#1588a0" stroke-opacity="0.4" stroke-width="0.7"/><line x1="155.6" y1="33.1" x2="153.0" y2="27.1" stroke="#b0401a" stroke-opacity="0.5" stroke-width="0.9"/><line x1="129.1" y1="22.4" x2="133.6" y2="30.3" stroke="#1588a0" stroke-opacity="0.4" stroke-width="0.7"/><line x1="131.3" y1="21.2" x2="125.6" y2="24.4" stroke="#b0401a" stroke-opacity="0.5" stroke-width="0.9"/><line x1="152.1" y1="32.8" x2="144.4" y2="35.7" stroke="#1588a0" stroke-opacity="0.4" stroke-width="0.7"/><line x1="153.0" y1="35.1" x2="150.8" y2="29.0" stroke="#b0401a" stroke-opacity="0.5" stroke-width="0.9"/><line x1="142.1" y1="59.6" x2="140.4" y2="50.8" stroke="#1588a0" stroke-opacity="0.4" stroke-width="0.7"/><line x1="139.6" y1="60.1" x2="146.0" y2="58.9" stroke="#b0401a" stroke-opacity="0.5" stroke-width="0.9"/><line x1="147.9" y1="54.1" x2="143.2" y2="46.4" stroke="#1588a0" stroke-opacity="0.4" stroke-width="0.7"/><line x1="145.7" y1="55.4" x2="151.3" y2="52.0" stroke="#b0401a" stroke-opacity="0.5" stroke-width="0.9"/><line x1="151.1" y1="21.1" x2="145.6" y2="28.2" stroke="#1588a0" stroke-opacity="0.4" stroke-width="0.7"/><line x1="153.1" y1="22.6" x2="147.9" y2="18.6" stroke="#b0401a" stroke-opacity="0.5" stroke-width="0.9"/><line x1="157.2" y1="34.6" x2="148.4" y2="36.2" stroke="#1588a0" stroke-opacity="0.4" stroke-width="0.7"/><line x1="157.7" y1="37.1" x2="156.5" y2="30.7" stroke="#b0401a" stroke-opacity="0.5" stroke-width="0.9"/><line x1="136.0" y1="20.3" x2="137.0" y2="29.3" stroke="#1588a0" stroke-opacity="0.4" stroke-width="0.7"/><line x1="138.5" y1="20.1" x2="132.0" y2="20.8" stroke="#b0401a" stroke-opacity="0.5" stroke-width="0.9"/><line x1="143.8" y1="21.5" x2="140.8" y2="30.0" stroke="#1588a0" stroke-opacity="0.4" stroke-width="0.7"/><line x1="146.1" y1="22.3" x2="140.0" y2="20.2" stroke="#b0401a" stroke-opacity="0.5" stroke-width="0.9"/><line x1="121.4" y1="51.9" x2="128.3" y2="46.1" stroke="#1588a0" stroke-opacity="0.4" stroke-width="0.7"/><line x1="119.8" y1="50.0" x2="123.9" y2="55.0" stroke="#b0401a" stroke-opacity="0.5" stroke-width="0.9"/><line x1="125.2" y1="26.3" x2="131.9" y2="32.4" stroke="#1588a0" stroke-opacity="0.4" stroke-width="0.7"/><line x1="126.9" y1="24.5" x2="122.5" y2="29.3" stroke="#b0401a" stroke-opacity="0.5" stroke-width="0.9"/><line x1="124.9" y1="54.1" x2="130.6" y2="47.1" stroke="#1588a0" stroke-opacity="0.4" stroke-width="0.7"/><line x1="122.9" y1="52.5" x2="128.0" y2="56.6" stroke="#b0401a" stroke-opacity="0.5" stroke-width="0.9"/><line x1="154.4" y1="50.3" x2="147.2" y2="44.9" stroke="#1588a0" stroke-opacity="0.4" stroke-width="0.7"/><line x1="152.9" y1="52.3" x2="156.8" y2="47.1" stroke="#b0401a" stroke-opacity="0.5" stroke-width="0.9"/><line x1="119.7" y1="33.8" x2="128.5" y2="35.8" stroke="#1588a0" stroke-opacity="0.4" stroke-width="0.7"/><line x1="120.3" y1="31.3" x2="118.8" y2="37.7" stroke="#b0401a" stroke-opacity="0.5" stroke-width="0.9"/><line x1="146.6" y1="24.3" x2="141.9" y2="31.8" stroke="#1588a0" stroke-opacity="0.4" stroke-width="0.7"/><line x1="148.7" y1="25.6" x2="143.2" y2="22.2" stroke="#b0401a" stroke-opacity="0.5" stroke-width="0.9"/><line x1="151.4" y1="45.8" x2="144.0" y2="41.5" stroke="#1588a0" stroke-opacity="0.4" stroke-width="0.7"/><line x1="150.1" y1="48.0" x2="153.4" y2="42.4" stroke="#b0401a" stroke-opacity="0.5" stroke-width="0.9"/><line x1="121.4" y1="23.2" x2="128.1" y2="29.2" stroke="#1588a0" stroke-opacity="0.4" stroke-width="0.7"/><line x1="123.0" y1="21.3" x2="118.7" y2="26.2" stroke="#b0401a" stroke-opacity="0.5" stroke-width="0.9"/><line x1="121.4" y1="40.6" x2="130.3" y2="39.2" stroke="#1588a0" stroke-opacity="0.4" stroke-width="0.7"/><line x1="121.0" y1="38.1" x2="122.0" y2="44.5" stroke="#b0401a" stroke-opacity="0.5" stroke-width="0.9"/><line x1="125.0" y1="22.7" x2="130.8" y2="29.5" stroke="#1588a0" stroke-opacity="0.4" stroke-width="0.7"/><line x1="126.9" y1="21.0" x2="121.9" y2="25.3" stroke="#b0401a" stroke-opacity="0.5" stroke-width="0.9"/><line x1="133.5" y1="17.6" x2="135.4" y2="26.4" stroke="#1588a0" stroke-opacity="0.4" stroke-width="0.7"/><line x1="135.9" y1="17.1" x2="129.6" y2="18.5" stroke="#b0401a" stroke-opacity="0.5" stroke-width="0.9"/><line x1="131.2" y1="53.9" x2="134.8" y2="45.6" stroke="#1588a0" stroke-opacity="0.4" stroke-width="0.7"/><line x1="128.9" y1="52.9" x2="134.9" y2="55.4" stroke="#b0401a" stroke-opacity="0.5" stroke-width="0.9"/><line x1="157.4" y1="48.3" x2="149.5" y2="44.1" stroke="#1588a0" stroke-opacity="0.4" stroke-width="0.7"/><line x1="156.3" y1="50.5" x2="159.3" y2="44.8" stroke="#b0401a" stroke-opacity="0.5" stroke-width="0.9"/><line x1="144.4" y1="18.1" x2="141.6" y2="26.7" stroke="#1588a0" stroke-opacity="0.4" stroke-width="0.7"/><line x1="146.8" y1="18.9" x2="140.6" y2="16.9" stroke="#b0401a" stroke-opacity="0.5" stroke-width="0.9"/><line x1="154.1" y1="35.5" x2="145.2" y2="36.9" stroke="#1588a0" stroke-opacity="0.4" stroke-width="0.7"/><line x1="154.5" y1="38.0" x2="153.5" y2="31.6" stroke="#b0401a" stroke-opacity="0.5" stroke-width="0.9"/><line x1="122.7" y1="32.3" x2="131.1" y2="35.5" stroke="#1588a0" stroke-opacity="0.4" stroke-width="0.7"/><line x1="123.5" y1="30.0" x2="121.3" y2="36.1" stroke="#b0401a" stroke-opacity="0.5" stroke-width="0.9"/><line x1="158.6" y1="31.0" x2="150.0" y2="33.9" stroke="#1588a0" stroke-opacity="0.4" stroke-width="0.7"/><line x1="159.4" y1="33.4" x2="157.3" y2="27.2" stroke="#b0401a" stroke-opacity="0.5" stroke-width="0.9"/><line x1="144.4" y1="52.2" x2="140.9" y2="44.4" stroke="#1588a0" stroke-opacity="0.4" stroke-width="0.7"/><line x1="142.1" y1="53.2" x2="148.0" y2="50.6" stroke="#b0401a" stroke-opacity="0.5" stroke-width="0.9"/><line x1="37.7" y1="144.2" x2="37.9" y2="141.3" stroke="#1588a0" stroke-opacity="0.4" stroke-width="0.7"/><line x1="35.2" y1="144.0" x2="41.7" y2="144.4" stroke="#b0401a" stroke-opacity="0.5" stroke-width="0.9"/><line x1="35.7" y1="133.9" x2="37.0" y2="136.7" stroke="#1588a0" stroke-opacity="0.4" stroke-width="0.7"/><line x1="38.0" y1="132.9" x2="32.1" y2="135.5" stroke="#b0401a" stroke-opacity="0.5" stroke-width="0.9"/><line x1="34.5" y1="138.3" x2="36.4" y2="138.7" stroke="#1588a0" stroke-opacity="0.4" stroke-width="0.7"/><line x1="35.0" y1="135.9" x2="33.7" y2="142.2" stroke="#b0401a" stroke-opacity="0.5" stroke-width="0.9"/><line x1="40.6" y1="134.8" x2="39.2" y2="137.1" stroke="#1588a0" stroke-opacity="0.4" stroke-width="0.7"/><line x1="42.7" y1="136.1" x2="37.2" y2="132.7" stroke="#b0401a" stroke-opacity="0.5" stroke-width="0.9"/><line x1="41.8" y1="139.3" x2="39.7" y2="139.2" stroke="#1588a0" stroke-opacity="0.4" stroke-width="0.7"/><line x1="41.6" y1="141.8" x2="42.1" y2="135.4" stroke="#b0401a" stroke-opacity="0.5" stroke-width="0.9"/><line x1="41.4" y1="143.5" x2="39.5" y2="141.0" stroke="#1588a0" stroke-opacity="0.4" stroke-width="0.7"/><line x1="39.4" y1="145.0" x2="44.6" y2="141.1" stroke="#b0401a" stroke-opacity="0.5" stroke-width="0.9"/><line x1="42.5" y1="127.5" x2="40.0" y2="133.8" stroke="#1588a0" stroke-opacity="0.4" stroke-width="0.7"/><line x1="44.8" y1="128.4" x2="38.8" y2="126.1" stroke="#b0401a" stroke-opacity="0.5" stroke-width="0.9"/><line x1="49.7" y1="135.2" x2="43.2" y2="137.3" stroke="#1588a0" stroke-opacity="0.4" stroke-width="0.7"/><line x1="50.4" y1="137.5" x2="48.4" y2="131.4" stroke="#b0401a" stroke-opacity="0.5" stroke-width="0.9"/><line x1="37.5" y1="151.5" x2="37.8" y2="144.6" stroke="#1588a0" stroke-opacity="0.4" stroke-width="0.7"/><line x1="35.0" y1="151.4" x2="41.5" y2="151.6" stroke="#b0401a" stroke-opacity="0.5" stroke-width="0.9"/><line x1="25.9" y1="140.0" x2="32.6" y2="139.5" stroke="#1588a0" stroke-opacity="0.4" stroke-width="0.7"/><line x1="25.7" y1="137.5" x2="26.2" y2="144.0" stroke="#b0401a" stroke-opacity="0.5" stroke-width="0.9"/><line x1="28.0" y1="134.7" x2="33.5" y2="137.1" stroke="#1588a0" stroke-opacity="0.4" stroke-width="0.7"/><line x1="29.0" y1="132.4" x2="26.4" y2="138.4" stroke="#b0401a" stroke-opacity="0.5" stroke-width="0.9"/><line x1="25.8" y1="153.0" x2="31.7" y2="146.2" stroke="#1588a0" stroke-opacity="0.4" stroke-width="0.7"/><line x1="23.9" y1="151.4" x2="28.8" y2="155.6" stroke="#b0401a" stroke-opacity="0.5" stroke-width="0.9"/><line x1="31.7" y1="153.8" x2="35.2" y2="145.7" stroke="#1588a0" stroke-opacity="0.4" stroke-width="0.7"/><line x1="29.4" y1="152.8" x2="35.4" y2="155.4" stroke="#b0401a" stroke-opacity="0.5" stroke-width="0.9"/><line x1="47.0" y1="119.8" x2="43.2" y2="127.9" stroke="#1588a0" stroke-opacity="0.4" stroke-width="0.7"/><line x1="49.2" y1="120.9" x2="43.4" y2="118.1" stroke="#b0401a" stroke-opacity="0.5" stroke-width="0.9"/><line x1="58.4" y1="137.2" x2="49.4" y2="138.0" stroke="#1588a0" stroke-opacity="0.4" stroke-width="0.7"/><line x1="58.6" y1="139.7" x2="58.0" y2="133.2" stroke="#b0401a" stroke-opacity="0.5" stroke-width="0.9"/><line x1="18.3" y1="132.0" x2="26.8" y2="135.0" stroke="#1588a0" stroke-opacity="0.4" stroke-width="0.7"/><line x1="19.2" y1="129.7" x2="17.0" y2="135.8" stroke="#b0401a" stroke-opacity="0.5" stroke-width="0.9"/><line x1="51.5" y1="154.3" x2="45.5" y2="147.5" stroke="#1588a0" stroke-opacity="0.4" stroke-width="0.7"/><line x1="49.6" y1="155.9" x2="54.5" y2="151.6" stroke="#b0401a" stroke-opacity="0.5" stroke-width="0.9"/><line x1="22.5" y1="144.8" x2="30.9" y2="141.6" stroke="#1588a0" stroke-opacity="0.4" stroke-width="0.7"/><line x1="21.6" y1="142.4" x2="23.9" y2="148.5" stroke="#b0401a" stroke-opacity="0.5" stroke-width="0.9"/><line x1="43.7" y1="157.4" x2="41.0" y2="148.8" stroke="#1588a0" stroke-opacity="0.4" stroke-width="0.7"/><line x1="41.3" y1="158.2" x2="47.5" y2="156.3" stroke="#b0401a" stroke-opacity="0.5" stroke-width="0.9"/><line x1="37.6" y1="157.8" x2="37.8" y2="148.8" stroke="#1588a0" stroke-opacity="0.4" stroke-width="0.7"/><line x1="35.1" y1="157.8" x2="41.6" y2="157.9" stroke="#b0401a" stroke-opacity="0.5" stroke-width="0.9"/><line x1="23.5" y1="127.7" x2="30.6" y2="133.3" stroke="#1588a0" stroke-opacity="0.4" stroke-width="0.7"/><line x1="25.1" y1="125.7" x2="21.1" y2="130.9" stroke="#b0401a" stroke-opacity="0.5" stroke-width="0.9"/><line x1="56.1" y1="148.0" x2="48.0" y2="144.0" stroke="#1588a0" stroke-opacity="0.4" stroke-width="0.7"/><line x1="55.0" y1="150.2" x2="57.9" y2="144.4" stroke="#b0401a" stroke-opacity="0.5" stroke-width="0.9"/><line x1="55.5" y1="133.7" x2="46.9" y2="136.3" stroke="#1588a0" stroke-opacity="0.4" stroke-width="0.7"/><line x1="56.2" y1="136.1" x2="54.4" y2="129.9" stroke="#b0401a" stroke-opacity="0.5" stroke-width="0.9"/><line x1="33.7" y1="117.3" x2="35.5" y2="126.2" stroke="#1588a0" stroke-opacity="0.4" stroke-width="0.7"/><line x1="36.2" y1="116.9" x2="29.8" y2="118.1" stroke="#b0401a" stroke-opacity="0.5" stroke-width="0.9"/><line x1="53.7" y1="143.4" x2="45.1" y2="141.0" stroke="#1588a0" stroke-opacity="0.4" stroke-width="0.7"/><line x1="53.0" y1="145.8" x2="54.8" y2="139.5" stroke="#b0401a" stroke-opacity="0.5" stroke-width="0.9"/><line x1="27.5" y1="126.4" x2="33.2" y2="133.3" stroke="#1588a0" stroke-opacity="0.4" stroke-width="0.7"/><line x1="29.4" y1="124.8" x2="24.4" y2="129.0" stroke="#b0401a" stroke-opacity="0.5" stroke-width="0.9"/><line x1="19.5" y1="150.2" x2="27.2" y2="145.5" stroke="#1588a0" stroke-opacity="0.4" stroke-width="0.7"/><line x1="18.2" y1="148.1" x2="21.5" y2="153.6" stroke="#b0401a" stroke-opacity="0.5" stroke-width="0.9"/><line x1="54.0" y1="125.1" x2="47.2" y2="131.0" stroke="#1588a0" stroke-opacity="0.4" stroke-width="0.7"/><line x1="55.7" y1="127.0" x2="51.4" y2="122.1" stroke="#b0401a" stroke-opacity="0.5" stroke-width="0.9"/><line x1="20.7" y1="129.4" x2="28.6" y2="133.8" stroke="#1588a0" stroke-opacity="0.4" stroke-width="0.7"/><line x1="21.9" y1="127.2" x2="18.8" y2="132.9" stroke="#b0401a" stroke-opacity="0.5" stroke-width="0.9"/><line x1="48.5" y1="156.6" x2="43.9" y2="148.8" stroke="#1588a0" stroke-opacity="0.4" stroke-width="0.7"/><line x1="46.3" y1="157.8" x2="51.9" y2="154.5" stroke="#b0401a" stroke-opacity="0.5" stroke-width="0.9"/><line x1="50.9" y1="150.0" x2="44.1" y2="144.2" stroke="#1588a0" stroke-opacity="0.4" stroke-width="0.7"/><line x1="49.3" y1="151.9" x2="53.5" y2="147.0" stroke="#b0401a" stroke-opacity="0.5" stroke-width="0.9"/><line x1="55.9" y1="139.6" x2="46.9" y2="139.3" stroke="#1588a0" stroke-opacity="0.4" stroke-width="0.7"/><line x1="55.8" y1="142.1" x2="56.0" y2="135.6" stroke="#b0401a" stroke-opacity="0.5" stroke-width="0.9"/><line x1="15.7" y1="139.5" x2="24.7" y2="139.3" stroke="#1588a0" stroke-opacity="0.4" stroke-width="0.7"/><line x1="15.6" y1="137.0" x2="15.8" y2="143.5" stroke="#b0401a" stroke-opacity="0.5" stroke-width="0.9"/><line x1="19.2" y1="137.0" x2="28.1" y2="138.0" stroke="#1588a0" stroke-opacity="0.4" stroke-width="0.7"/><line x1="19.4" y1="134.5" x2="18.8" y2="141.0" stroke="#b0401a" stroke-opacity="0.5" stroke-width="0.9"/><line x1="29.5" y1="123.6" x2="33.9" y2="131.5" stroke="#1588a0" stroke-opacity="0.4" stroke-width="0.7"/><line x1="31.7" y1="122.4" x2="26.0" y2="125.6" stroke="#b0401a" stroke-opacity="0.5" stroke-width="0.9"/><line x1="56.8" y1="142.8" x2="47.9" y2="141.0" stroke="#1588a0" stroke-opacity="0.4" stroke-width="0.7"/><line x1="56.3" y1="145.2" x2="57.5" y2="138.9" stroke="#b0401a" stroke-opacity="0.5" stroke-width="0.9"/><line x1="55.6" y1="127.9" x2="48.0" y2="132.7" stroke="#1588a0" stroke-opacity="0.4" stroke-width="0.7"/><line x1="56.9" y1="130.0" x2="53.5" y2="124.5" stroke="#b0401a" stroke-opacity="0.5" stroke-width="0.9"/><line x1="48.1" y1="125.0" x2="42.8" y2="132.3" stroke="#1588a0" stroke-opacity="0.4" stroke-width="0.7"/><line x1="50.1" y1="126.4" x2="44.8" y2="122.7" stroke="#b0401a" stroke-opacity="0.5" stroke-width="0.9"/><line x1="25.8" y1="130.2" x2="32.5" y2="135.0" stroke="#1588a0" stroke-opacity="0.4" stroke-width="0.7"/><line x1="27.3" y1="128.2" x2="23.5" y2="133.4" stroke="#b0401a" stroke-opacity="0.5" stroke-width="0.9"/><line x1="40.5" y1="122.5" x2="39.1" y2="131.4" stroke="#1588a0" stroke-opacity="0.4" stroke-width="0.7"/><line x1="43.0" y1="122.9" x2="36.5" y2="121.9" stroke="#b0401a" stroke-opacity="0.5" stroke-width="0.9"/><line x1="18.6" y1="141.4" x2="27.6" y2="140.3" stroke="#1588a0" stroke-opacity="0.4" stroke-width="0.7"/><line x1="18.3" y1="138.9" x2="19.1" y2="145.3" stroke="#b0401a" stroke-opacity="0.5" stroke-width="0.9"/><line x1="28.4" y1="158.6" x2="32.3" y2="150.5" stroke="#1588a0" stroke-opacity="0.4" stroke-width="0.7"/><line x1="26.1" y1="157.5" x2="32.0" y2="160.3" stroke="#b0401a" stroke-opacity="0.5" stroke-width="0.9"/><line x1="22.5" y1="134.5" x2="31.0" y2="137.0" stroke="#1588a0" stroke-opacity="0.4" stroke-width="0.7"/><line x1="23.2" y1="132.1" x2="21.4" y2="138.3" stroke="#b0401a" stroke-opacity="0.5" stroke-width="0.9"/><line x1="26.9" y1="119.9" x2="31.4" y2="127.7" stroke="#1588a0" stroke-opacity="0.4" stroke-width="0.7"/><line x1="29.1" y1="118.6" x2="23.5" y2="121.9" stroke="#b0401a" stroke-opacity="0.5" stroke-width="0.9"/><line x1="22.4" y1="124.2" x2="28.9" y2="130.4" stroke="#1588a0" stroke-opacity="0.4" stroke-width="0.7"/><line x1="24.1" y1="122.4" x2="19.7" y2="127.1" stroke="#b0401a" stroke-opacity="0.5" stroke-width="0.9"/><line x1="50.8" y1="129.4" x2="43.8" y2="134.7" stroke="#1588a0" stroke-opacity="0.4" stroke-width="0.7"/><line x1="52.3" y1="131.4" x2="48.4" y2="126.2" stroke="#b0401a" stroke-opacity="0.5" stroke-width="0.9"/><line x1="31.2" y1="160.2" x2="33.9" y2="151.6" stroke="#1588a0" stroke-opacity="0.4" stroke-width="0.7"/><line x1="28.8" y1="159.4" x2="35.0" y2="161.4" stroke="#b0401a" stroke-opacity="0.5" stroke-width="0.9"/><line x1="35.7" y1="123.2" x2="37.0" y2="131.9" stroke="#1588a0" stroke-opacity="0.4" stroke-width="0.7"/><line x1="38.2" y1="122.8" x2="31.7" y2="123.8" stroke="#b0401a" stroke-opacity="0.5" stroke-width="0.9"/><line x1="16.8" y1="144.3" x2="25.5" y2="142.1" stroke="#1588a0" stroke-opacity="0.4" stroke-width="0.7"/><line x1="16.2" y1="141.9" x2="17.7" y2="148.2" stroke="#b0401a" stroke-opacity="0.5" stroke-width="0.9"/><line x1="44.9" y1="153.4" x2="41.1" y2="145.5" stroke="#1588a0" stroke-opacity="0.4" stroke-width="0.7"/><line x1="42.6" y1="154.4" x2="48.5" y2="151.6" stroke="#b0401a" stroke-opacity="0.5" stroke-width="0.9"/><line x1="53.4" y1="131.3" x2="45.4" y2="135.3" stroke="#1588a0" stroke-opacity="0.4" stroke-width="0.7"/><line x1="54.5" y1="133.5" x2="51.6" y2="127.7" stroke="#b0401a" stroke-opacity="0.5" stroke-width="0.9"/><line x1="40.9" y1="154.2" x2="39.3" y2="145.8" stroke="#1588a0" stroke-opacity="0.4" stroke-width="0.7"/><line x1="38.4" y1="154.7" x2="44.8" y2="153.5" stroke="#b0401a" stroke-opacity="0.5" stroke-width="0.9"/><line x1="32.3" y1="121.3" x2="35.1" y2="129.9" stroke="#1588a0" stroke-opacity="0.4" stroke-width="0.7"/><line x1="34.7" y1="120.5" x2="28.5" y2="122.5" stroke="#b0401a" stroke-opacity="0.5" stroke-width="0.9"/><line x1="55.7" y1="151.9" x2="48.5" y2="146.6" stroke="#1588a0" stroke-opacity="0.4" stroke-width="0.7"/><line x1="54.3" y1="154.0" x2="58.1" y2="148.7" stroke="#b0401a" stroke-opacity="0.5" stroke-width="0.9"/><line x1="25.5" y1="123.5" x2="31.1" y2="130.5" stroke="#1588a0" stroke-opacity="0.4" stroke-width="0.7"/><line x1="27.4" y1="121.9" x2="22.4" y2="126.0" stroke="#b0401a" stroke-opacity="0.5" stroke-width="0.9"/><line x1="51.0" y1="126.2" x2="44.6" y2="132.5" stroke="#1588a0" stroke-opacity="0.4" stroke-width="0.7"/><line x1="52.7" y1="128.0" x2="48.2" y2="123.4" stroke="#b0401a" stroke-opacity="0.5" stroke-width="0.9"/><line x1="42.8" y1="117.1" x2="40.9" y2="125.9" stroke="#1588a0" stroke-opacity="0.4" stroke-width="0.7"/><line x1="45.2" y1="117.6" x2="38.9" y2="116.3" stroke="#b0401a" stroke-opacity="0.5" stroke-width="0.9"/><line x1="52.8" y1="147.1" x2="44.9" y2="142.8" stroke="#1588a0" stroke-opacity="0.4" stroke-width="0.7"/><line x1="51.6" y1="149.3" x2="54.7" y2="143.6" stroke="#b0401a" stroke-opacity="0.5" stroke-width="0.9"/><line x1="53.6" y1="136.5" x2="45.0" y2="137.9" stroke="#1588a0" stroke-opacity="0.4" stroke-width="0.7"/><line x1="54.0" y1="138.9" x2="53.0" y2="132.5" stroke="#b0401a" stroke-opacity="0.5" stroke-width="0.9"/><line x1="34.1" y1="158.3" x2="35.9" y2="149.5" stroke="#1588a0" stroke-opacity="0.4" stroke-width="0.7"/><line x1="31.7" y1="157.8" x2="38.0" y2="159.1" stroke="#b0401a" stroke-opacity="0.5" stroke-width="0.9"/><line x1="44.1" y1="123.2" x2="40.8" y2="131.6" stroke="#1588a0" stroke-opacity="0.4" stroke-width="0.7"/><line x1="46.4" y1="124.1" x2="40.3" y2="121.8" stroke="#b0401a" stroke-opacity="0.5" stroke-width="0.9"/><line x1="28.2" y1="150.4" x2="33.6" y2="144.1" stroke="#1588a0" stroke-opacity="0.4" stroke-width="0.7"/><line x1="26.3" y1="148.7" x2="31.2" y2="153.0" stroke="#b0401a" stroke-opacity="0.5" stroke-width="0.9"/><line x1="37.0" y1="119.4" x2="37.5" y2="128.4" stroke="#1588a0" stroke-opacity="0.4" stroke-width="0.7"/><line x1="39.5" y1="119.3" x2="33.0" y2="119.6" stroke="#b0401a" stroke-opacity="0.5" stroke-width="0.9"/><line x1="22.5" y1="138.2" x2="31.0" y2="138.6" stroke="#1588a0" stroke-opacity="0.4" stroke-width="0.7"/><line x1="22.6" y1="135.7" x2="22.3" y2="142.2" stroke="#b0401a" stroke-opacity="0.5" stroke-width="0.9"/><line x1="30.5" y1="118.0" x2="33.5" y2="126.5" stroke="#1588a0" stroke-opacity="0.4" stroke-width="0.7"/><line x1="32.9" y1="117.2" x2="26.7" y2="119.4" stroke="#b0401a" stroke-opacity="0.5" stroke-width="0.9"/><line x1="24.5" y1="156.1" x2="30.1" y2="149.1" stroke="#1588a0" stroke-opacity="0.4" stroke-width="0.7"/><line x1="22.5" y1="154.6" x2="27.6" y2="158.6" stroke="#b0401a" stroke-opacity="0.5" stroke-width="0.9"/><line x1="59.1" y1="131.7" x2="50.6" y2="134.7" stroke="#1588a0" stroke-opacity="0.4" stroke-width="0.7"/><line x1="59.9" y1="134.1" x2="57.8" y2="128.0" stroke="#b0401a" stroke-opacity="0.5" stroke-width="0.9"/><line x1="24.6" y1="148.9" x2="31.8" y2="143.6" stroke="#1588a0" stroke-opacity="0.4" stroke-width="0.7"/><line x1="23.1" y1="146.9" x2="27.0" y2="152.1" stroke="#b0401a" stroke-opacity="0.5" stroke-width="0.9"/><line x1="142.1" y1="142.2" x2="139.8" y2="140.5" stroke="#1588a0" stroke-opacity="0.4" stroke-width="0.7"/><line x1="140.5" y1="144.2" x2="144.6" y2="139.1" stroke="#b0401a" stroke-opacity="0.5" stroke-width="0.9"/><line x1="134.6" y1="134.2" x2="136.5" y2="136.9" stroke="#1588a0" stroke-opacity="0.4" stroke-width="0.7"/><line x1="136.7" y1="132.8" x2="131.4" y2="136.5" stroke="#b0401a" stroke-opacity="0.5" stroke-width="0.9"/><line x1="137.5" y1="142.7" x2="137.8" y2="140.7" stroke="#1588a0" stroke-opacity="0.4" stroke-width="0.7"/><line x1="135.0" y1="142.4" x2="141.5" y2="143.2" stroke="#b0401a" stroke-opacity="0.5" stroke-width="0.9"/><line x1="133.7" y1="142.3" x2="136.1" y2="140.5" stroke="#1588a0" stroke-opacity="0.4" stroke-width="0.7"/><line x1="132.2" y1="140.3" x2="136.1" y2="145.5" stroke="#b0401a" stroke-opacity="0.5" stroke-width="0.9"/><line x1="141.3" y1="136.6" x2="139.5" y2="137.9" stroke="#1588a0" stroke-opacity="0.4" stroke-width="0.7"/><line x1="142.8" y1="138.7" x2="139.0" y2="133.4" stroke="#b0401a" stroke-opacity="0.5" stroke-width="0.9"/><line x1="133.2" y1="137.4" x2="135.8" y2="138.3" stroke="#1588a0" stroke-opacity="0.4" stroke-width="0.7"/><line x1="134.0" y1="135.0" x2="131.9" y2="141.2" stroke="#b0401a" stroke-opacity="0.5" stroke-width="0.9"/><line x1="144.0" y1="149.1" x2="140.7" y2="143.6" stroke="#1588a0" stroke-opacity="0.4" stroke-width="0.7"/><line x1="141.8" y1="150.4" x2="147.4" y2="147.1" stroke="#b0401a" stroke-opacity="0.5" stroke-width="0.9"/><line x1="146.6" y1="144.0" x2="141.9" y2="141.2" stroke="#1588a0" stroke-opacity="0.4" stroke-width="0.7"/><line x1="145.4" y1="146.1" x2="148.6" y2="140.5" stroke="#b0401a" stroke-opacity="0.5" stroke-width="0.9"/><line x1="148.7" y1="137.5" x2="142.8" y2="138.3" stroke="#1588a0" stroke-opacity="0.4" stroke-width="0.7"/><line x1="149.0" y1="140.0" x2="148.1" y2="133.6" stroke="#b0401a" stroke-opacity="0.5" stroke-width="0.9"/><line x1="128.2" y1="131.1" x2="133.6" y2="135.5" stroke="#1588a0" stroke-opacity="0.4" stroke-width="0.7"/><line x1="129.8" y1="129.2" x2="125.7" y2="134.3" stroke="#b0401a" stroke-opacity="0.5" stroke-width="0.9"/><line x1="145.9" y1="131.0" x2="141.6" y2="135.4" stroke="#1588a0" stroke-opacity="0.4" stroke-width="0.7"/><line x1="147.7" y1="132.8" x2="143.1" y2="128.2" stroke="#b0401a" stroke-opacity="0.5" stroke-width="0.9"/><line x1="144.5" y1="156.6" x2="141.4" y2="148.2" stroke="#1588a0" stroke-opacity="0.4" stroke-width="0.7"/><line x1="142.1" y1="157.5" x2="148.2" y2="155.2" stroke="#b0401a" stroke-opacity="0.5" stroke-width="0.9"/><line x1="142.2" y1="159.8" x2="140.4" y2="151.0" stroke="#1588a0" stroke-opacity="0.4" stroke-width="0.7"/><line x1="139.8" y1="160.3" x2="146.1" y2="159.0" stroke="#b0401a" stroke-opacity="0.5" stroke-width="0.9"/><line x1="122.1" y1="139.0" x2="130.8" y2="139.0" stroke="#1588a0" stroke-opacity="0.4" stroke-width="0.7"/><line x1="122.1" y1="136.5" x2="122.1" y2="143.0" stroke="#b0401a" stroke-opacity="0.5" stroke-width="0.9"/><line x1="144.6" y1="124.6" x2="141.0" y2="132.5" stroke="#1588a0" stroke-opacity="0.4" stroke-width="0.7"/><line x1="146.8" y1="125.6" x2="140.9" y2="122.9" stroke="#b0401a" stroke-opacity="0.5" stroke-width="0.9"/><line x1="135.1" y1="154.0" x2="136.7" y2="145.7" stroke="#1588a0" stroke-opacity="0.4" stroke-width="0.7"/><line x1="132.6" y1="153.5" x2="139.0" y2="154.7" stroke="#b0401a" stroke-opacity="0.5" stroke-width="0.9"/><line x1="137.0" y1="123.0" x2="137.6" y2="131.8" stroke="#1588a0" stroke-opacity="0.4" stroke-width="0.7"/><line x1="139.5" y1="122.8" x2="133.0" y2="123.2" stroke="#b0401a" stroke-opacity="0.5" stroke-width="0.9"/><line x1="117.7" y1="141.5" x2="126.6" y2="140.4" stroke="#1588a0" stroke-opacity="0.4" stroke-width="0.7"/><line x1="117.4" y1="139.0" x2="118.2" y2="145.5" stroke="#b0401a" stroke-opacity="0.5" stroke-width="0.9"/><line x1="119.7" y1="134.9" x2="128.4" y2="136.9" stroke="#1588a0" stroke-opacity="0.4" stroke-width="0.7"/><line x1="120.2" y1="132.5" x2="118.8" y2="138.8" stroke="#b0401a" stroke-opacity="0.5" stroke-width="0.9"/><line x1="124.9" y1="130.0" x2="132.1" y2="135.0" stroke="#1588a0" stroke-opacity="0.4" stroke-width="0.7"/><line x1="126.3" y1="128.0" x2="122.6" y2="133.3" stroke="#b0401a" stroke-opacity="0.5" stroke-width="0.9"/><line x1="152.7" y1="122.5" x2="146.7" y2="129.2" stroke="#1588a0" stroke-opacity="0.4" stroke-width="0.7"/><line x1="154.5" y1="124.1" x2="149.7" y2="119.8" stroke="#b0401a" stroke-opacity="0.5" stroke-width="0.9"/><line x1="152.9" y1="145.6" x2="144.7" y2="142.0" stroke="#1588a0" stroke-opacity="0.4" stroke-width="0.7"/><line x1="151.9" y1="147.9" x2="154.5" y2="141.9" stroke="#b0401a" stroke-opacity="0.5" stroke-width="0.9"/><line x1="132.3" y1="120.2" x2="134.9" y2="128.8" stroke="#1588a0" stroke-opacity="0.4" stroke-width="0.7"/><line x1="134.7" y1="119.5" x2="128.5" y2="121.3" stroke="#b0401a" stroke-opacity="0.5" stroke-width="0.9"/><line x1="158.4" y1="141.5" x2="149.5" y2="140.4" stroke="#1588a0" stroke-opacity="0.4" stroke-width="0.7"/><line x1="158.1" y1="143.9" x2="158.9" y2="137.5" stroke="#b0401a" stroke-opacity="0.5" stroke-width="0.9"/><line x1="155.4" y1="132.6" x2="147.0" y2="135.7" stroke="#1588a0" stroke-opacity="0.4" stroke-width="0.7"/><line x1="156.3" y1="134.9" x2="154.0" y2="128.8" stroke="#b0401a" stroke-opacity="0.5" stroke-width="0.9"/><line x1="126.7" y1="155.1" x2="131.9" y2="147.7" stroke="#1588a0" stroke-opacity="0.4" stroke-width="0.7"/><line x1="124.7" y1="153.6" x2="130.0" y2="157.4" stroke="#b0401a" stroke-opacity="0.5" stroke-width="0.9"/><line x1="124.9" y1="125.4" x2="131.2" y2="131.9" stroke="#1588a0" stroke-opacity="0.4" stroke-width="0.7"/><line x1="126.7" y1="123.6" x2="122.0" y2="128.1" stroke="#b0401a" stroke-opacity="0.5" stroke-width="0.9"/><line x1="137.3" y1="157.3" x2="137.6" y2="148.3" stroke="#1588a0" stroke-opacity="0.4" stroke-width="0.7"/><line x1="134.8" y1="157.2" x2="141.3" y2="157.4" stroke="#b0401a" stroke-opacity="0.5" stroke-width="0.9"/><line x1="155.3" y1="142.8" x2="146.5" y2="140.9" stroke="#1588a0" stroke-opacity="0.4" stroke-width="0.7"/><line x1="154.7" y1="145.3" x2="156.1" y2="138.9" stroke="#b0401a" stroke-opacity="0.5" stroke-width="0.9"/><line x1="157.6" y1="136.9" x2="148.7" y2="137.8" stroke="#1588a0" stroke-opacity="0.4" stroke-width="0.7"/><line x1="157.9" y1="139.4" x2="157.2" y2="132.9" stroke="#b0401a" stroke-opacity="0.5" stroke-width="0.9"/><line x1="133.5" y1="160.6" x2="135.3" y2="151.8" stroke="#1588a0" stroke-opacity="0.4" stroke-width="0.7"/><line x1="131.1" y1="160.1" x2="137.4" y2="161.4" stroke="#b0401a" stroke-opacity="0.5" stroke-width="0.9"/><line x1="150.1" y1="126.6" x2="143.8" y2="133.1" stroke="#1588a0" stroke-opacity="0.4" stroke-width="0.7"/><line x1="151.9" y1="128.4" x2="147.2" y2="123.8" stroke="#b0401a" stroke-opacity="0.5" stroke-width="0.9"/><line x1="153.2" y1="130.3" x2="145.4" y2="134.8" stroke="#1588a0" stroke-opacity="0.4" stroke-width="0.7"/><line x1="154.4" y1="132.5" x2="151.2" y2="126.8" stroke="#b0401a" stroke-opacity="0.5" stroke-width="0.9"/><line x1="119.6" y1="131.6" x2="128.0" y2="134.9" stroke="#1588a0" stroke-opacity="0.4" stroke-width="0.7"/><line x1="120.6" y1="129.3" x2="118.1" y2="135.3" stroke="#b0401a" stroke-opacity="0.5" stroke-width="0.9"/><line x1="116.5" y1="137.9" x2="125.5" y2="138.4" stroke="#1588a0" stroke-opacity="0.4" stroke-width="0.7"/><line x1="116.7" y1="135.4" x2="116.3" y2="141.9" stroke="#b0401a" stroke-opacity="0.5" stroke-width="0.9"/><line x1="140.6" y1="121.5" x2="139.3" y2="130.4" stroke="#1588a0" stroke-opacity="0.4" stroke-width="0.7"/><line x1="143.1" y1="121.9" x2="136.6" y2="120.9" stroke="#b0401a" stroke-opacity="0.5" stroke-width="0.9"/><line x1="138.4" y1="161.1" x2="138.2" y2="152.1" stroke="#1588a0" stroke-opacity="0.4" stroke-width="0.7"/><line x1="135.9" y1="161.1" x2="142.4" y2="161.0" stroke="#b0401a" stroke-opacity="0.5" stroke-width="0.9"/><line x1="148.9" y1="152.3" x2="143.2" y2="145.4" stroke="#1588a0" stroke-opacity="0.4" stroke-width="0.7"/><line x1="147.0" y1="153.9" x2="152.0" y2="149.8" stroke="#b0401a" stroke-opacity="0.5" stroke-width="0.9"/><line x1="119.6" y1="145.3" x2="128.1" y2="142.4" stroke="#1588a0" stroke-opacity="0.4" stroke-width="0.7"/><line x1="118.8" y1="142.9" x2="120.9" y2="149.1" stroke="#b0401a" stroke-opacity="0.5" stroke-width="0.9"/><line x1="122.6" y1="153.4" x2="129.1" y2="147.3" stroke="#1588a0" stroke-opacity="0.4" stroke-width="0.7"/><line x1="120.9" y1="151.6" x2="125.3" y2="156.3" stroke="#b0401a" stroke-opacity="0.5" stroke-width="0.9"/><line x1="123.6" y1="146.3" x2="131.5" y2="142.3" stroke="#1588a0" stroke-opacity="0.4" stroke-width="0.7"/><line x1="122.5" y1="144.1" x2="125.4" y2="149.9" stroke="#b0401a" stroke-opacity="0.5" stroke-width="0.9"/><line x1="140.8" y1="155.1" x2="139.3" y2="146.2" stroke="#1588a0" stroke-opacity="0.4" stroke-width="0.7"/><line x1="138.4" y1="155.5" x2="144.8" y2="154.4" stroke="#b0401a" stroke-opacity="0.5" stroke-width="0.9"/><line x1="129.7" y1="124.2" x2="134.1" y2="132.1" stroke="#1588a0" stroke-opacity="0.4" stroke-width="0.7"/><line x1="131.8" y1="123.0" x2="126.2" y2="126.2" stroke="#b0401a" stroke-opacity="0.5" stroke-width="0.9"/><line x1="157.8" y1="130.2" x2="149.5" y2="133.9" stroke="#1588a0" stroke-opacity="0.4" stroke-width="0.7"/><line x1="158.8" y1="132.5" x2="156.1" y2="126.5" stroke="#b0401a" stroke-opacity="0.5" stroke-width="0.9"/><line x1="156.9" y1="146.7" x2="148.6" y2="143.3" stroke="#1588a0" stroke-opacity="0.4" stroke-width="0.7"/><line x1="155.9" y1="149.1" x2="158.4" y2="143.0" stroke="#b0401a" stroke-opacity="0.5" stroke-width="0.9"/><line x1="155.8" y1="151.4" x2="148.4" y2="146.2" stroke="#1588a0" stroke-opacity="0.4" stroke-width="0.7"/><line x1="154.3" y1="153.4" x2="158.1" y2="148.1" stroke="#b0401a" stroke-opacity="0.5" stroke-width="0.9"/><line x1="118.0" y1="149.0" x2="126.0" y2="145.0" stroke="#1588a0" stroke-opacity="0.4" stroke-width="0.7"/><line x1="116.9" y1="146.8" x2="119.8" y2="152.6" stroke="#b0401a" stroke-opacity="0.5" stroke-width="0.9"/><line x1="155.1" y1="138.6" x2="146.1" y2="138.8" stroke="#1588a0" stroke-opacity="0.4" stroke-width="0.7"/><line x1="155.1" y1="141.1" x2="155.0" y2="134.6" stroke="#b0401a" stroke-opacity="0.5" stroke-width="0.9"/><line x1="155.5" y1="126.4" x2="148.2" y2="131.7" stroke="#1588a0" stroke-opacity="0.4" stroke-width="0.7"/><line x1="157.0" y1="128.5" x2="153.2" y2="123.2" stroke="#b0401a" stroke-opacity="0.5" stroke-width="0.9"/><line x1="123.0" y1="150.2" x2="130.2" y2="144.8" stroke="#1588a0" stroke-opacity="0.4" stroke-width="0.7"/><line x1="121.5" y1="148.2" x2="125.4" y2="153.4" stroke="#b0401a" stroke-opacity="0.5" stroke-width="0.9"/><line x1="158.5" y1="133.3" x2="149.8" y2="135.7" stroke="#1588a0" stroke-opacity="0.4" stroke-width="0.7"/><line x1="159.1" y1="135.7" x2="157.4" y2="129.4" stroke="#b0401a" stroke-opacity="0.5" stroke-width="0.9"/><line x1="123.8" y1="133.5" x2="131.6" y2="136.5" stroke="#1588a0" stroke-opacity="0.4" stroke-width="0.7"/><line x1="124.6" y1="131.2" x2="122.3" y2="137.3" stroke="#b0401a" stroke-opacity="0.5" stroke-width="0.9"/><line x1="128.7" y1="120.8" x2="132.8" y2="128.8" stroke="#1588a0" stroke-opacity="0.4" stroke-width="0.7"/><line x1="131.0" y1="119.6" x2="125.2" y2="122.6" stroke="#b0401a" stroke-opacity="0.5" stroke-width="0.9"/><line x1="125.6" y1="122.0" x2="130.9" y2="129.3" stroke="#1588a0" stroke-opacity="0.4" stroke-width="0.7"/><line x1="127.6" y1="120.5" x2="122.4" y2="124.4" stroke="#b0401a" stroke-opacity="0.5" stroke-width="0.9"/><line x1="137.3" y1="119.0" x2="137.6" y2="128.0" stroke="#1588a0" stroke-opacity="0.4" stroke-width="0.7"/><line x1="139.8" y1="118.9" x2="133.3" y2="119.1" stroke="#b0401a" stroke-opacity="0.5" stroke-width="0.9"/><line x1="152.5" y1="155.0" x2="146.4" y2="148.3" stroke="#1588a0" stroke-opacity="0.4" stroke-width="0.7"/><line x1="150.6" y1="156.7" x2="155.4" y2="152.3" stroke="#b0401a" stroke-opacity="0.5" stroke-width="0.9"/><line x1="147.7" y1="157.9" x2="143.6" y2="149.8" stroke="#1588a0" stroke-opacity="0.4" stroke-width="0.7"/><line x1="145.5" y1="159.0" x2="151.2" y2="156.0" stroke="#b0401a" stroke-opacity="0.5" stroke-width="0.9"/><line x1="119.4" y1="127.4" x2="127.0" y2="132.2" stroke="#1588a0" stroke-opacity="0.4" stroke-width="0.7"/><line x1="120.7" y1="125.3" x2="117.3" y2="130.8" stroke="#b0401a" stroke-opacity="0.5" stroke-width="0.9"/><line x1="131.3" y1="156.1" x2="134.6" y2="147.7" stroke="#1588a0" stroke-opacity="0.4" stroke-width="0.7"/><line x1="129.0" y1="155.2" x2="135.0" y2="157.6" stroke="#b0401a" stroke-opacity="0.5" stroke-width="0.9"/><line x1="140.7" y1="118.2" x2="139.5" y2="127.1" stroke="#1588a0" stroke-opacity="0.4" stroke-width="0.7"/><line x1="143.1" y1="118.5" x2="136.7" y2="117.7" stroke="#b0401a" stroke-opacity="0.5" stroke-width="0.9"/><line x1="127.7" y1="127.6" x2="133.3" y2="133.9" stroke="#1588a0" stroke-opacity="0.4" stroke-width="0.7"/><line x1="129.5" y1="125.9" x2="124.7" y2="130.3" stroke="#b0401a" stroke-opacity="0.5" stroke-width="0.9"/><line x1="148.6" y1="123.8" x2="143.5" y2="131.2" stroke="#1588a0" stroke-opacity="0.4" stroke-width="0.7"/><line x1="150.7" y1="125.2" x2="145.3" y2="121.5" stroke="#b0401a" stroke-opacity="0.5" stroke-width="0.9"/><line x1="144.8" y1="152.8" x2="141.1" y2="145.2" stroke="#1588a0" stroke-opacity="0.4" stroke-width="0.7"/><line x1="142.6" y1="153.9" x2="148.4" y2="151.0" stroke="#b0401a" stroke-opacity="0.5" stroke-width="0.9"/><line x1="144.7" y1="120.2" x2="141.7" y2="128.7" stroke="#1588a0" stroke-opacity="0.4" stroke-width="0.7"/><line x1="147.1" y1="121.0" x2="140.9" y2="118.8" stroke="#b0401a" stroke-opacity="0.5" stroke-width="0.9"/><line x1="131.1" y1="152.8" x2="134.9" y2="145.2" stroke="#1588a0" stroke-opacity="0.4" stroke-width="0.7"/><line x1="128.9" y1="151.7" x2="134.7" y2="154.6" stroke="#b0401a" stroke-opacity="0.5" stroke-width="0.9"/><line x1="152.2" y1="150.8" x2="145.3" y2="145.1" stroke="#1588a0" stroke-opacity="0.4" stroke-width="0.7"/><line x1="150.6" y1="152.7" x2="154.8" y2="147.7" stroke="#b0401a" stroke-opacity="0.5" stroke-width="0.9"/><line x1="116.1" y1="134.7" x2="124.9" y2="136.4" stroke="#1588a0" stroke-opacity="0.4" stroke-width="0.7"/><line x1="116.6" y1="132.2" x2="115.3" y2="138.6" stroke="#b0401a" stroke-opacity="0.5" stroke-width="0.9"/><line x1="133.8" y1="123.6" x2="136.1" y2="132.1" stroke="#1588a0" stroke-opacity="0.4" stroke-width="0.7"/><line x1="136.2" y1="123.0" x2="129.9" y2="124.7" stroke="#b0401a" stroke-opacity="0.5" stroke-width="0.9"/><rect x="32" y="38" width="3" height="3" fill="#acacac"/><rect x="41" y="35" width="3" height="3" fill="#acacac"/><rect x="39" y="41" width="3" height="3" fill="#acacac"/><rect x="33" y="33" width="3" height="3" fill="#acacac"/><rect x="36" y="40" width="3" height="3" fill="#acacac"/><rect x="37" y="33" width="3" height="3" fill="#acacac"/><rect x="43" y="28" width="3" height="3" fill="#acacac"/><rect x="49" y="34" width="3" height="3" fill="#acacac"/><rect x="47" y="42" width="3" height="3" fill="#acacac"/><rect x="27" y="33" width="3" height="3" fill="#acacac"/><rect x="41" y="48" width="3" height="3" fill="#acacac"/><rect x="51" y="52" width="3" height="3" fill="#acacac"/><rect x="41" y="54" width="3" height="3" fill="#acacac"/><rect x="58" y="33" width="3" height="3" fill="#acacac"/><rect x="30" y="58" width="3" height="3" fill="#acacac"/><rect x="49" y="21" width="3" height="3" fill="#acacac"/><rect x="55" y="50" width="3" height="3" fill="#acacac"/><rect x="40" y="19" width="3" height="3" fill="#acacac"/><rect x="33" y="52" width="3" height="3" fill="#acacac"/><rect x="38" y="57" width="3" height="3" fill="#acacac"/><rect x="24" y="51" width="3" height="3" fill="#acacac"/><rect x="18" y="27" width="3" height="3" fill="#acacac"/><rect x="44" y="52" width="3" height="3" fill="#acacac"/><rect x="55" y="25" width="3" height="3" fill="#acacac"/><rect x="37" y="54" width="3" height="3" fill="#acacac"/><rect x="36" y="15" width="3" height="3" fill="#acacac"/><rect x="44" y="58" width="3" height="3" fill="#acacac"/><rect x="52" y="24" width="3" height="3" fill="#acacac"/><rect x="23" y="45" width="3" height="3" fill="#acacac"/><rect x="59" y="42" width="3" height="3" fill="#acacac"/><rect x="23" y="27" width="3" height="3" fill="#acacac"/><rect x="46" y="55" width="3" height="3" fill="#acacac"/><rect x="52" y="44" width="3" height="3" fill="#acacac"/><rect x="52" y="29" width="3" height="3" fill="#acacac"/><rect x="54" y="39" width="3" height="3" fill="#acacac"/><rect x="23" y="54" width="3" height="3" fill="#acacac"/><rect x="30" y="19" width="3" height="3" fill="#acacac"/><rect x="47" y="49" width="3" height="3" fill="#acacac"/><rect x="16" y="39" width="3" height="3" fill="#acacac"/><rect x="43" y="16" width="3" height="3" fill="#acacac"/><rect x="19" y="48" width="3" height="3" fill="#acacac"/><rect x="24" y="24" width="3" height="3" fill="#acacac"/><rect x="55" y="47" width="3" height="3" fill="#acacac"/><rect x="35" y="19" width="3" height="3" fill="#acacac"/><rect x="17" y="45" width="3" height="3" fill="#acacac"/><rect x="20" y="39" width="3" height="3" fill="#acacac"/><rect x="20" y="23" width="3" height="3" fill="#acacac"/><rect x="28" y="55" width="3" height="3" fill="#acacac"/><rect x="32" y="15" width="3" height="3" fill="#acacac"/><rect x="20" y="42" width="3" height="3" fill="#acacac"/><rect x="48" y="26" width="3" height="3" fill="#acacac"/><rect x="45" y="22" width="3" height="3" fill="#acacac"/><rect x="20" y="50" width="3" height="3" fill="#acacac"/><rect x="56" y="28" width="3" height="3" fill="#acacac"/><rect x="27" y="23" width="3" height="3" fill="#acacac"/><rect x="24" y="21" width="3" height="3" fill="#acacac"/><rect x="16" y="32" width="3" height="3" fill="#acacac"/><rect x="42" y="21" width="3" height="3" fill="#acacac"/><rect x="52" y="32" width="3" height="3" fill="#acacac"/><rect x="31" y="22" width="3" height="3" fill="#acacac"/><rect x="35" y="56" width="3" height="3" fill="#acacac"/><rect x="21" y="34" width="3" height="3" fill="#acacac"/><rect x="49" y="46" width="3" height="3" fill="#acacac"/><rect x="22" y="30" width="3" height="3" fill="#acacac"/><rect x="58" y="45" width="3" height="3" fill="#acacac"/><rect x="57" y="37" width="3" height="3" fill="#acacac"/><rect x="37" y="22" width="3" height="3" fill="#acacac"/><rect x="41" y="58" width="3" height="3" fill="#acacac"/><rect x="132" y="38" width="3" height="3" fill="#acacac"/><rect x="135" y="34" width="3" height="3" fill="#acacac"/><rect x="141" y="37" width="3" height="3" fill="#acacac"/><rect x="136" y="42" width="3" height="3" fill="#acacac"/><rect x="140" y="40" width="3" height="3" fill="#acacac"/><rect x="139" y="33" width="3" height="3" fill="#acacac"/><rect x="149" y="39" width="3" height="3" fill="#acacac"/><rect x="127" y="42" width="3" height="3" fill="#acacac"/><rect x="139" y="48" width="3" height="3" fill="#acacac"/><rect x="146" y="44" width="3" height="3" fill="#acacac"/><rect x="130" y="47" width="3" height="3" fill="#acacac"/><rect x="155" y="43" width="3" height="3" fill="#acacac"/><rect x="141" y="54" width="3" height="3" fill="#acacac"/><rect x="115" y="40" width="3" height="3" fill="#acacac"/><rect x="148" y="56" width="3" height="3" fill="#acacac"/><rect x="126" y="50" width="3" height="3" fill="#acacac"/><rect x="137" y="15" width="3" height="3" fill="#acacac"/><rect x="154" y="38" width="3" height="3" fill="#acacac"/><rect x="139" y="19" width="3" height="3" fill="#acacac"/><rect x="138" y="52" width="3" height="3" fill="#acacac"/><rect x="159" y="35" width="3" height="3" fill="#acacac"/><rect x="122" y="37" width="3" height="3" fill="#acacac"/><rect x="128" y="56" width="3" height="3" fill="#acacac"/><rect x="147" y="19" width="3" height="3" fill="#acacac"/><rect x="135" y="59" width="3" height="3" fill="#acacac"/><rect x="150" y="27" width="3" height="3" fill="#acacac"/><rect x="131" y="58" width="3" height="3" fill="#acacac"/><rect x="117" y="35" width="3" height="3" fill="#acacac"/><rect x="132" y="21" width="3" height="3" fill="#acacac"/><rect x="133" y="54" width="3" height="3" fill="#acacac"/><rect x="129" y="18" width="3" height="3" fill="#acacac"/><rect x="152" y="53" width="3" height="3" fill="#acacac"/><rect x="122" y="45" width="3" height="3" fill="#acacac"/><rect x="116" y="46" width="3" height="3" fill="#acacac"/><rect x="118" y="30" width="3" height="3" fill="#acacac"/><rect x="157" y="26" width="3" height="3" fill="#acacac"/><rect x="118" y="25" width="3" height="3" fill="#acacac"/><rect x="157" y="39" width="3" height="3" fill="#acacac"/><rect x="155" y="24" width="3" height="3" fill="#acacac"/><rect x="137" y="55" width="3" height="3" fill="#acacac"/><rect x="147" y="49" width="3" height="3" fill="#acacac"/><rect x="154" y="30" width="3" height="3" fill="#acacac"/><rect x="128" y="21" width="3" height="3" fill="#acacac"/><rect x="151" y="32" width="3" height="3" fill="#acacac"/><rect x="141" y="59" width="3" height="3" fill="#acacac"/><rect x="147" y="53" width="3" height="3" fill="#acacac"/><rect x="150" y="20" width="3" height="3" fill="#acacac"/><rect x="156" y="34" width="3" height="3" fill="#acacac"/><rect x="135" y="19" width="3" height="3" fill="#acacac"/><rect x="143" y="21" width="3" height="3" fill="#acacac"/><rect x="120" y="51" width="3" height="3" fill="#acacac"/><rect x="124" y="25" width="3" height="3" fill="#acacac"/><rect x="124" y="53" width="3" height="3" fill="#acacac"/><rect x="153" y="49" width="3" height="3" fill="#acacac"/><rect x="119" y="33" width="3" height="3" fill="#acacac"/><rect x="146" y="23" width="3" height="3" fill="#acacac"/><rect x="150" y="45" width="3" height="3" fill="#acacac"/><rect x="120" y="22" width="3" height="3" fill="#acacac"/><rect x="120" y="40" width="3" height="3" fill="#acacac"/><rect x="124" y="22" width="3" height="3" fill="#acacac"/><rect x="132" y="17" width="3" height="3" fill="#acacac"/><rect x="130" y="53" width="3" height="3" fill="#acacac"/><rect x="156" y="47" width="3" height="3" fill="#acacac"/><rect x="143" y="17" width="3" height="3" fill="#acacac"/><rect x="153" y="35" width="3" height="3" fill="#acacac"/><rect x="122" y="31" width="3" height="3" fill="#acacac"/><rect x="158" y="30" width="3" height="3" fill="#acacac"/><rect x="143" y="51" width="3" height="3" fill="#acacac"/><rect x="37" y="143" width="3" height="3" fill="#acacac"/><rect x="35" y="133" width="3" height="3" fill="#acacac"/><rect x="34" y="137" width="3" height="3" fill="#acacac"/><rect x="40" y="134" width="3" height="3" fill="#acacac"/><rect x="41" y="138" width="3" height="3" fill="#acacac"/><rect x="40" y="143" width="3" height="3" fill="#acacac"/><rect x="42" y="127" width="3" height="3" fill="#acacac"/><rect x="49" y="134" width="3" height="3" fill="#acacac"/><rect x="36" y="150" width="3" height="3" fill="#acacac"/><rect x="25" y="139" width="3" height="3" fill="#acacac"/><rect x="27" y="134" width="3" height="3" fill="#acacac"/><rect x="25" y="152" width="3" height="3" fill="#acacac"/><rect x="31" y="153" width="3" height="3" fill="#acacac"/><rect x="46" y="119" width="3" height="3" fill="#acacac"/><rect x="57" y="136" width="3" height="3" fill="#acacac"/><rect x="17" y="131" width="3" height="3" fill="#acacac"/><rect x="50" y="153" width="3" height="3" fill="#acacac"/><rect x="21" y="144" width="3" height="3" fill="#acacac"/><rect x="43" y="156" width="3" height="3" fill="#acacac"/><rect x="37" y="157" width="3" height="3" fill="#acacac"/><rect x="23" y="127" width="3" height="3" fill="#acacac"/><rect x="55" y="147" width="3" height="3" fill="#acacac"/><rect x="55" y="133" width="3" height="3" fill="#acacac"/><rect x="33" y="116" width="3" height="3" fill="#acacac"/><rect x="53" y="142" width="3" height="3" fill="#acacac"/><rect x="26" y="125" width="3" height="3" fill="#acacac"/><rect x="18" y="149" width="3" height="3" fill="#acacac"/><rect x="53" y="124" width="3" height="3" fill="#acacac"/><rect x="20" y="128" width="3" height="3" fill="#acacac"/><rect x="47" y="156" width="3" height="3" fill="#acacac"/><rect x="50" y="149" width="3" height="3" fill="#acacac"/><rect x="55" y="139" width="3" height="3" fill="#acacac"/><rect x="15" y="138" width="3" height="3" fill="#acacac"/><rect x="18" y="136" width="3" height="3" fill="#acacac"/><rect x="28" y="123" width="3" height="3" fill="#acacac"/><rect x="56" y="142" width="3" height="3" fill="#acacac"/><rect x="55" y="127" width="3" height="3" fill="#acacac"/><rect x="47" y="124" width="3" height="3" fill="#acacac"/><rect x="25" y="129" width="3" height="3" fill="#acacac"/><rect x="39" y="121" width="3" height="3" fill="#acacac"/><rect x="18" y="140" width="3" height="3" fill="#acacac"/><rect x="27" y="158" width="3" height="3" fill="#acacac"/><rect x="22" y="133" width="3" height="3" fill="#acacac"/><rect x="26" y="119" width="3" height="3" fill="#acacac"/><rect x="21" y="123" width="3" height="3" fill="#acacac"/><rect x="50" y="128" width="3" height="3" fill="#acacac"/><rect x="30" y="159" width="3" height="3" fill="#acacac"/><rect x="35" y="122" width="3" height="3" fill="#acacac"/><rect x="16" y="143" width="3" height="3" fill="#acacac"/><rect x="44" y="152" width="3" height="3" fill="#acacac"/><rect x="52" y="130" width="3" height="3" fill="#acacac"/><rect x="40" y="153" width="3" height="3" fill="#acacac"/><rect x="31" y="120" width="3" height="3" fill="#acacac"/><rect x="55" y="151" width="3" height="3" fill="#acacac"/><rect x="24" y="123" width="3" height="3" fill="#acacac"/><rect x="50" y="125" width="3" height="3" fill="#acacac"/><rect x="42" y="116" width="3" height="3" fill="#acacac"/><rect x="52" y="146" width="3" height="3" fill="#acacac"/><rect x="53" y="135" width="3" height="3" fill="#acacac"/><rect x="33" y="157" width="3" height="3" fill="#acacac"/><rect x="43" y="122" width="3" height="3" fill="#acacac"/><rect x="27" y="149" width="3" height="3" fill="#acacac"/><rect x="36" y="118" width="3" height="3" fill="#acacac"/><rect x="21" y="137" width="3" height="3" fill="#acacac"/><rect x="30" y="117" width="3" height="3" fill="#acacac"/><rect x="23" y="155" width="3" height="3" fill="#acacac"/><rect x="58" y="131" width="3" height="3" fill="#acacac"/><rect x="24" y="148" width="3" height="3" fill="#acacac"/><rect x="141" y="141" width="3" height="3" fill="#acacac"/><rect x="134" y="133" width="3" height="3" fill="#acacac"/><rect x="137" y="142" width="3" height="3" fill="#acacac"/><rect x="133" y="141" width="3" height="3" fill="#acacac"/><rect x="140" y="136" width="3" height="3" fill="#acacac"/><rect x="132" y="136" width="3" height="3" fill="#acacac"/><rect x="143" y="148" width="3" height="3" fill="#acacac"/><rect x="146" y="143" width="3" height="3" fill="#acacac"/><rect x="148" y="137" width="3" height="3" fill="#acacac"/><rect x="127" y="130" width="3" height="3" fill="#acacac"/><rect x="145" y="130" width="3" height="3" fill="#acacac"/><rect x="143" y="156" width="3" height="3" fill="#acacac"/><rect x="141" y="159" width="3" height="3" fill="#acacac"/><rect x="121" y="138" width="3" height="3" fill="#acacac"/><rect x="144" y="124" width="3" height="3" fill="#acacac"/><rect x="134" y="153" width="3" height="3" fill="#acacac"/><rect x="136" y="122" width="3" height="3" fill="#acacac"/><rect x="117" y="141" width="3" height="3" fill="#acacac"/><rect x="119" y="134" width="3" height="3" fill="#acacac"/><rect x="124" y="129" width="3" height="3" fill="#acacac"/><rect x="152" y="121" width="3" height="3" fill="#acacac"/><rect x="152" y="145" width="3" height="3" fill="#acacac"/><rect x="131" y="119" width="3" height="3" fill="#acacac"/><rect x="157" y="140" width="3" height="3" fill="#acacac"/><rect x="154" y="132" width="3" height="3" fill="#acacac"/><rect x="126" y="154" width="3" height="3" fill="#acacac"/><rect x="124" y="124" width="3" height="3" fill="#acacac"/><rect x="136" y="156" width="3" height="3" fill="#acacac"/><rect x="154" y="142" width="3" height="3" fill="#acacac"/><rect x="157" y="136" width="3" height="3" fill="#acacac"/><rect x="133" y="160" width="3" height="3" fill="#acacac"/><rect x="149" y="126" width="3" height="3" fill="#acacac"/><rect x="152" y="129" width="3" height="3" fill="#acacac"/><rect x="119" y="131" width="3" height="3" fill="#acacac"/><rect x="116" y="137" width="3" height="3" fill="#acacac"/><rect x="140" y="120" width="3" height="3" fill="#acacac"/><rect x="137" y="160" width="3" height="3" fill="#acacac"/><rect x="148" y="151" width="3" height="3" fill="#acacac"/><rect x="119" y="144" width="3" height="3" fill="#acacac"/><rect x="122" y="152" width="3" height="3" fill="#acacac"/><rect x="123" y="145" width="3" height="3" fill="#acacac"/><rect x="140" y="154" width="3" height="3" fill="#acacac"/><rect x="129" y="123" width="3" height="3" fill="#acacac"/><rect x="157" y="129" width="3" height="3" fill="#acacac"/><rect x="156" y="146" width="3" height="3" fill="#acacac"/><rect x="155" y="150" width="3" height="3" fill="#acacac"/><rect x="117" y="148" width="3" height="3" fill="#acacac"/><rect x="154" y="138" width="3" height="3" fill="#acacac"/><rect x="155" y="125" width="3" height="3" fill="#acacac"/><rect x="122" y="149" width="3" height="3" fill="#acacac"/><rect x="157" y="132" width="3" height="3" fill="#acacac"/><rect x="123" y="133" width="3" height="3" fill="#acacac"/><rect x="128" y="120" width="3" height="3" fill="#acacac"/><rect x="125" y="121" width="3" height="3" fill="#acacac"/><rect x="136" y="118" width="3" height="3" fill="#acacac"/><rect x="151" y="154" width="3" height="3" fill="#acacac"/><rect x="147" y="157" width="3" height="3" fill="#acacac"/><rect x="118" y="126" width="3" height="3" fill="#acacac"/><rect x="130" y="155" width="3" height="3" fill="#acacac"/><rect x="140" y="117" width="3" height="3" fill="#acacac"/><rect x="127" y="127" width="3" height="3" fill="#acacac"/><rect x="148" y="123" width="3" height="3" fill="#acacac"/><rect x="144" y="152" width="3" height="3" fill="#acacac"/><rect x="144" y="119" width="3" height="3" fill="#acacac"/><rect x="130" y="152" width="3" height="3" fill="#acacac"/><rect x="151" y="150" width="3" height="3" fill="#acacac"/><rect x="115" y="134" width="3" height="3" fill="#acacac"/><rect x="133" y="123" width="3" height="3" fill="#acacac"/></svg><svg class="abs" style="left:571px;top:319px" width="176" height="176"><rect width="176" height="176" fill="#1f1f1f"/><line x1="32.4" y1="37.4" x2="34.9" y2="36.6" stroke="#1588a0" stroke-opacity="0.4" stroke-width="0.7"/><line x1="31.7" y1="35.0" x2="33.6" y2="41.2" stroke="#b0401a" stroke-opacity="0.5" stroke-width="0.9"/><line x1="41.0" y1="33.9" x2="38.8" y2="35.1" stroke="#1588a0" stroke-opacity="0.4" stroke-width="0.7"/><line x1="42.1" y1="36.2" x2="39.2" y2="30.4" stroke="#b0401a" stroke-opacity="0.5" stroke-width="0.9"/><line x1="38.8" y1="40.2" x2="37.8" y2="37.9" stroke="#1588a0" stroke-opacity="0.4" stroke-width="0.7"/><line x1="36.6" y1="41.2" x2="42.5" y2="38.7" stroke="#b0401a" stroke-opacity="0.5" stroke-width="0.9"/><line x1="33.3" y1="32.0" x2="35.3" y2="34.2" stroke="#1588a0" stroke-opacity="0.4" stroke-width="0.7"/><line x1="35.1" y1="30.3" x2="30.3" y2="34.8" stroke="#b0401a" stroke-opacity="0.5" stroke-width="0.9"/><line x1="35.6" y1="39.3" x2="36.4" y2="37.5" stroke="#1588a0" stroke-opacity="0.4" stroke-width="0.7"/><line x1="33.3" y1="38.3" x2="39.2" y2="40.9" stroke="#b0401a" stroke-opacity="0.5" stroke-width="0.9"/><line x1="37.4" y1="31.8" x2="37.2" y2="34.1" stroke="#1588a0" stroke-opacity="0.4" stroke-width="0.7"/><line x1="39.9" y1="32.0" x2="33.5" y2="31.4" stroke="#b0401a" stroke-opacity="0.5" stroke-width="0.9"/><line x1="43.1" y1="27.2" x2="39.8" y2="32.0" stroke="#1588a0" stroke-opacity="0.4" stroke-width="0.7"/><line x1="45.2" y1="28.6" x2="39.8" y2="24.9" stroke="#b0401a" stroke-opacity="0.5" stroke-width="0.9"/><line x1="49.0" y1="32.7" x2="42.4" y2="34.5" stroke="#1588a0" stroke-opacity="0.4" stroke-width="0.7"/><line x1="49.7" y1="35.2" x2="48.0" y2="28.9" stroke="#b0401a" stroke-opacity="0.5" stroke-width="0.9"/><line x1="47.5" y1="41.2" x2="41.7" y2="38.3" stroke="#1588a0" stroke-opacity="0.4" stroke-width="0.7"/><line x1="46.4" y1="43.4" x2="49.2" y2="37.6" stroke="#b0401a" stroke-opacity="0.5" stroke-width="0.9"/><line x1="26.8" y1="32.0" x2="32.4" y2="34.2" stroke="#1588a0" stroke-opacity="0.4" stroke-width="0.7"/><line x1="27.7" y1="29.7" x2="25.3" y2="35.7" stroke="#b0401a" stroke-opacity="0.5" stroke-width="0.9"/><line x1="41.4" y1="47.2" x2="39.0" y2="41.1" stroke="#1588a0" stroke-opacity="0.4" stroke-width="0.7"/><line x1="39.1" y1="48.1" x2="45.1" y2="45.8" stroke="#b0401a" stroke-opacity="0.5" stroke-width="0.9"/><line x1="50.7" y1="50.8" x2="44.6" y2="44.2" stroke="#1588a0" stroke-opacity="0.4" stroke-width="0.7"/><line x1="48.9" y1="52.5" x2="53.6" y2="48.1" stroke="#b0401a" stroke-opacity="0.5" stroke-width="0.9"/><line x1="41.0" y1="52.9" x2="38.9" y2="44.1" stroke="#1588a0" stroke-opacity="0.4" stroke-width="0.7"/><line x1="38.6" y1="53.5" x2="44.9" y2="52.0" stroke="#b0401a" stroke-opacity="0.5" stroke-width="0.9"/><line x1="57.9" y1="32.1" x2="49.0" y2="33.8" stroke="#1588a0" stroke-opacity="0.4" stroke-width="0.7"/><line x1="58.3" y1="34.6" x2="57.2" y2="28.2" stroke="#b0401a" stroke-opacity="0.5" stroke-width="0.9"/><line x1="29.7" y1="56.5" x2="32.7" y2="48.0" stroke="#1588a0" stroke-opacity="0.4" stroke-width="0.7"/><line x1="27.4" y1="55.7" x2="33.5" y2="57.9" stroke="#b0401a" stroke-opacity="0.5" stroke-width="0.9"/><line x1="49.3" y1="20.0" x2="43.8" y2="27.2" stroke="#1588a0" stroke-opacity="0.4" stroke-width="0.7"/><line x1="51.3" y1="21.6" x2="46.1" y2="17.6" stroke="#b0401a" stroke-opacity="0.5" stroke-width="0.9"/><line x1="55.1" y1="49.2" x2="47.9" y2="43.9" stroke="#1588a0" stroke-opacity="0.4" stroke-width="0.7"/><line x1="53.6" y1="51.2" x2="57.5" y2="46.0" stroke="#b0401a" stroke-opacity="0.5" stroke-width="0.9"/><line x1="39.5" y1="18.4" x2="38.3" y2="27.3" stroke="#1588a0" stroke-opacity="0.4" stroke-width="0.7"/><line x1="42.0" y1="18.7" x2="35.6" y2="17.8" stroke="#b0401a" stroke-opacity="0.5" stroke-width="0.9"/><line x1="32.5" y1="51.0" x2="35.0" y2="42.8" stroke="#1588a0" stroke-opacity="0.4" stroke-width="0.7"/><line x1="30.1" y1="50.3" x2="36.3" y2="52.2" stroke="#b0401a" stroke-opacity="0.5" stroke-width="0.9"/><line x1="37.9" y1="55.8" x2="37.5" y2="46.8" stroke="#1588a0" stroke-opacity="0.4" stroke-width="0.7"/><line x1="35.4" y1="55.9" x2="41.9" y2="55.7" stroke="#b0401a" stroke-opacity="0.5" stroke-width="0.9"/><line x1="24.0" y1="49.5" x2="30.2" y2="43.1" stroke="#1588a0" stroke-opacity="0.4" stroke-width="0.7"/><line x1="22.2" y1="47.8" x2="26.9" y2="52.3" stroke="#b0401a" stroke-opacity="0.5" stroke-width="0.9"/><line x1="17.7" y1="26.2" x2="25.7" y2="30.3" stroke="#1588a0" stroke-opacity="0.4" stroke-width="0.7"/><line x1="18.8" y1="24.0" x2="15.9" y2="29.8" stroke="#b0401a" stroke-opacity="0.5" stroke-width="0.9"/><line x1="43.7" y1="50.9" x2="40.0" y2="42.7" stroke="#1588a0" stroke-opacity="0.4" stroke-width="0.7"/><line x1="41.4" y1="52.0" x2="47.4" y2="49.3" stroke="#b0401a" stroke-opacity="0.5" stroke-width="0.9"/><line x1="54.9" y1="24.4" x2="47.3" y2="29.3" stroke="#1588a0" stroke-opacity="0.4" stroke-width="0.7"/><line x1="56.3" y1="26.5" x2="52.7" y2="21.0" stroke="#b0401a" stroke-opacity="0.5" stroke-width="0.9"/><line x1="37.1" y1="52.7" x2="37.0" y2="43.7" stroke="#1588a0" stroke-opacity="0.4" stroke-width="0.7"/><line x1="34.6" y1="52.7" x2="41.1" y2="52.7" stroke="#b0401a" stroke-opacity="0.5" stroke-width="0.9"/><line x1="35.5" y1="13.9" x2="36.1" y2="22.9" stroke="#1588a0" stroke-opacity="0.4" stroke-width="0.7"/><line x1="38.0" y1="13.8" x2="31.5" y2="14.2" stroke="#b0401a" stroke-opacity="0.5" stroke-width="0.9"/><line x1="44.3" y1="56.9" x2="41.3" y2="48.5" stroke="#1588a0" stroke-opacity="0.4" stroke-width="0.7"/><line x1="41.9" y1="57.8" x2="48.1" y2="55.6" stroke="#b0401a" stroke-opacity="0.5" stroke-width="0.9"/><line x1="51.7" y1="22.6" x2="45.0" y2="28.7" stroke="#1588a0" stroke-opacity="0.4" stroke-width="0.7"/><line x1="53.4" y1="24.4" x2="49.0" y2="19.6" stroke="#b0401a" stroke-opacity="0.5" stroke-width="0.9"/><line x1="23.0" y1="43.6" x2="30.7" y2="39.4" stroke="#1588a0" stroke-opacity="0.4" stroke-width="0.7"/><line x1="21.8" y1="41.4" x2="24.9" y2="47.1" stroke="#b0401a" stroke-opacity="0.5" stroke-width="0.9"/><line x1="58.6" y1="41.4" x2="49.9" y2="39.2" stroke="#1588a0" stroke-opacity="0.4" stroke-width="0.7"/><line x1="58.0" y1="43.8" x2="59.6" y2="37.5" stroke="#b0401a" stroke-opacity="0.5" stroke-width="0.9"/><line x1="22.6" y1="26.0" x2="30.0" y2="31.1" stroke="#1588a0" stroke-opacity="0.4" stroke-width="0.7"/><line x1="24.0" y1="24.0" x2="20.3" y2="29.3" stroke="#b0401a" stroke-opacity="0.5" stroke-width="0.9"/><line x1="46.3" y1="54.5" x2="42.3" y2="46.4" stroke="#1588a0" stroke-opacity="0.4" stroke-width="0.7"/><line x1="44.1" y1="55.6" x2="49.9" y2="52.6" stroke="#b0401a" stroke-opacity="0.5" stroke-width="0.9"/><line x1="52.4" y1="43.1" x2="44.3" y2="39.4" stroke="#1588a0" stroke-opacity="0.4" stroke-width="0.7"/><line x1="51.4" y1="45.4" x2="54.1" y2="39.5" stroke="#b0401a" stroke-opacity="0.5" stroke-width="0.9"/><line x1="51.6" y1="27.7" x2="43.8" y2="32.1" stroke="#1588a0" stroke-opacity="0.4" stroke-width="0.7"/><line x1="52.8" y1="29.8" x2="49.6" y2="24.2" stroke="#b0401a" stroke-opacity="0.5" stroke-width="0.9"/><line x1="54.2" y1="37.8" x2="45.3" y2="36.9" stroke="#1588a0" stroke-opacity="0.4" stroke-width="0.7"/><line x1="54.0" y1="40.3" x2="54.7" y2="33.8" stroke="#b0401a" stroke-opacity="0.5" stroke-width="0.9"/><line x1="22.9" y1="52.6" x2="28.7" y2="45.8" stroke="#1588a0" stroke-opacity="0.4" stroke-width="0.7"/><line x1="21.0" y1="51.0" x2="25.9" y2="55.2" stroke="#b0401a" stroke-opacity="0.5" stroke-width="0.9"/><line x1="29.9" y1="17.6" x2="33.1" y2="26.0" stroke="#1588a0" stroke-opacity="0.4" stroke-width="0.7"/><line x1="32.2" y1="16.7" x2="26.1" y2="19.0" stroke="#b0401a" stroke-opacity="0.5" stroke-width="0.9"/><line x1="46.7" y1="47.8" x2="41.4" y2="41.3" stroke="#1588a0" stroke-opacity="0.4" stroke-width="0.7"/><line x1="44.8" y1="49.4" x2="49.8" y2="45.3" stroke="#b0401a" stroke-opacity="0.5" stroke-width="0.9"/><line x1="16.4" y1="38.3" x2="25.3" y2="37.3" stroke="#1588a0" stroke-opacity="0.4" stroke-width="0.7"/><line x1="16.1" y1="35.8" x2="16.8" y2="42.3" stroke="#b0401a" stroke-opacity="0.5" stroke-width="0.9"/><line x1="42.9" y1="14.8" x2="40.5" y2="23.5" stroke="#1588a0" stroke-opacity="0.4" stroke-width="0.7"/><line x1="45.3" y1="15.5" x2="39.0" y2="13.8" stroke="#b0401a" stroke-opacity="0.5" stroke-width="0.9"/><line x1="18.7" y1="46.5" x2="26.5" y2="42.0" stroke="#1588a0" stroke-opacity="0.4" stroke-width="0.7"/><line x1="17.4" y1="44.4" x2="20.6" y2="50.0" stroke="#b0401a" stroke-opacity="0.5" stroke-width="0.9"/><line x1="24.1" y1="23.1" x2="30.5" y2="29.5" stroke="#1588a0" stroke-opacity="0.4" stroke-width="0.7"/><line x1="25.9" y1="21.3" x2="21.3" y2="25.9" stroke="#b0401a" stroke-opacity="0.5" stroke-width="0.9"/><line x1="54.6" y1="45.7" x2="46.7" y2="41.4" stroke="#1588a0" stroke-opacity="0.4" stroke-width="0.7"/><line x1="53.4" y1="47.9" x2="56.6" y2="42.2" stroke="#b0401a" stroke-opacity="0.5" stroke-width="0.9"/><line x1="34.5" y1="17.9" x2="35.7" y2="26.8" stroke="#1588a0" stroke-opacity="0.4" stroke-width="0.7"/><line x1="37.0" y1="17.5" x2="30.5" y2="18.4" stroke="#b0401a" stroke-opacity="0.5" stroke-width="0.9"/><line x1="17.0" y1="43.8" x2="25.4" y2="40.6" stroke="#1588a0" stroke-opacity="0.4" stroke-width="0.7"/><line x1="16.1" y1="41.5" x2="18.5" y2="47.6" stroke="#b0401a" stroke-opacity="0.5" stroke-width="0.9"/><line x1="20.1" y1="38.0" x2="29.0" y2="37.0" stroke="#1588a0" stroke-opacity="0.4" stroke-width="0.7"/><line x1="19.8" y1="35.5" x2="20.6" y2="42.0" stroke="#b0401a" stroke-opacity="0.5" stroke-width="0.9"/><line x1="20.5" y1="21.5" x2="27.2" y2="27.4" stroke="#1588a0" stroke-opacity="0.4" stroke-width="0.7"/><line x1="22.1" y1="19.6" x2="17.8" y2="24.5" stroke="#b0401a" stroke-opacity="0.5" stroke-width="0.9"/><line x1="27.6" y1="54.0" x2="31.7" y2="46.0" stroke="#1588a0" stroke-opacity="0.4" stroke-width="0.7"/><line x1="25.3" y1="52.8" x2="31.1" y2="55.8" stroke="#b0401a" stroke-opacity="0.5" stroke-width="0.9"/><line x1="31.6" y1="14.5" x2="33.8" y2="23.2" stroke="#1588a0" stroke-opacity="0.4" stroke-width="0.7"/><line x1="34.1" y1="13.9" x2="27.8" y2="15.4" stroke="#b0401a" stroke-opacity="0.5" stroke-width="0.9"/><line x1="20.4" y1="41.3" x2="29.0" y2="38.6" stroke="#1588a0" stroke-opacity="0.4" stroke-width="0.7"/><line x1="19.7" y1="38.9" x2="21.7" y2="45.1" stroke="#b0401a" stroke-opacity="0.5" stroke-width="0.9"/><line x1="47.7" y1="25.0" x2="41.8" y2="31.0" stroke="#1588a0" stroke-opacity="0.4" stroke-width="0.7"/><line x1="49.5" y1="26.7" x2="44.9" y2="22.2" stroke="#b0401a" stroke-opacity="0.5" stroke-width="0.9"/><line x1="45.2" y1="21.0" x2="40.9" y2="28.9" stroke="#1588a0" stroke-opacity="0.4" stroke-width="0.7"/><line x1="47.4" y1="22.2" x2="41.7" y2="19.1" stroke="#b0401a" stroke-opacity="0.5" stroke-width="0.9"/><line x1="20.4" y1="49.1" x2="27.5" y2="43.5" stroke="#1588a0" stroke-opacity="0.4" stroke-width="0.7"/><line x1="18.9" y1="47.2" x2="22.9" y2="52.3" stroke="#b0401a" stroke-opacity="0.5" stroke-width="0.9"/><line x1="55.9" y1="27.5" x2="47.7" y2="31.2" stroke="#1588a0" stroke-opacity="0.4" stroke-width="0.7"/><line x1="56.9" y1="29.8" x2="54.2" y2="23.9" stroke="#b0401a" stroke-opacity="0.5" stroke-width="0.9"/><line x1="27.2" y1="22.3" x2="32.5" y2="29.6" stroke="#1588a0" stroke-opacity="0.4" stroke-width="0.7"/><line x1="29.3" y1="20.9" x2="24.0" y2="24.6" stroke="#b0401a" stroke-opacity="0.5" stroke-width="0.9"/><line x1="24.0" y1="19.9" x2="29.7" y2="26.9" stroke="#1588a0" stroke-opacity="0.4" stroke-width="0.7"/><line x1="25.9" y1="18.4" x2="20.9" y2="22.5" stroke="#b0401a" stroke-opacity="0.5" stroke-width="0.9"/><line x1="16.4" y1="31.1" x2="25.2" y2="33.2" stroke="#1588a0" stroke-opacity="0.4" stroke-width="0.7"/><line x1="17.0" y1="28.7" x2="15.5" y2="35.0" stroke="#b0401a" stroke-opacity="0.5" stroke-width="0.9"/><line x1="42.1" y1="20.3" x2="39.3" y2="28.8" stroke="#1588a0" stroke-opacity="0.4" stroke-width="0.7"/><line x1="44.5" y1="21.0" x2="38.3" y2="19.0" stroke="#b0401a" stroke-opacity="0.5" stroke-width="0.9"/><line x1="52.0" y1="31.0" x2="43.7" y2="33.8" stroke="#1588a0" stroke-opacity="0.4" stroke-width="0.7"/><line x1="52.8" y1="33.4" x2="50.7" y2="27.2" stroke="#b0401a" stroke-opacity="0.5" stroke-width="0.9"/><line x1="31.3" y1="21.5" x2="34.5" y2="29.5" stroke="#1588a0" stroke-opacity="0.4" stroke-width="0.7"/><line x1="33.7" y1="20.5" x2="27.6" y2="22.9" stroke="#b0401a" stroke-opacity="0.5" stroke-width="0.9"/><line x1="34.7" y1="54.8" x2="35.8" y2="45.9" stroke="#1588a0" stroke-opacity="0.4" stroke-width="0.7"/><line x1="32.2" y1="54.5" x2="38.7" y2="55.3" stroke="#b0401a" stroke-opacity="0.5" stroke-width="0.9"/><line x1="20.8" y1="33.0" x2="29.7" y2="34.6" stroke="#1588a0" stroke-opacity="0.4" stroke-width="0.7"/><line x1="21.3" y1="30.5" x2="20.1" y2="36.9" stroke="#b0401a" stroke-opacity="0.5" stroke-width="0.9"/><line x1="49.1" y1="45.5" x2="42.4" y2="40.3" stroke="#1588a0" stroke-opacity="0.4" stroke-width="0.7"/><line x1="47.5" y1="47.5" x2="51.5" y2="42.4" stroke="#b0401a" stroke-opacity="0.5" stroke-width="0.9"/><line x1="22.2" y1="29.2" x2="30.3" y2="32.9" stroke="#1588a0" stroke-opacity="0.4" stroke-width="0.7"/><line x1="23.2" y1="26.9" x2="20.5" y2="32.8" stroke="#b0401a" stroke-opacity="0.5" stroke-width="0.9"/><line x1="57.5" y1="44.4" x2="49.2" y2="41.0" stroke="#1588a0" stroke-opacity="0.4" stroke-width="0.7"/><line x1="56.6" y1="46.7" x2="59.1" y2="40.7" stroke="#b0401a" stroke-opacity="0.5" stroke-width="0.9"/><line x1="57.1" y1="36.0" x2="48.1" y2="36.0" stroke="#1588a0" stroke-opacity="0.4" stroke-width="0.7"/><line x1="57.1" y1="38.5" x2="57.1" y2="32.0" stroke="#b0401a" stroke-opacity="0.5" stroke-width="0.9"/><line x1="36.8" y1="20.5" x2="36.9" y2="29.0" stroke="#1588a0" stroke-opacity="0.4" stroke-width="0.7"/><line x1="39.3" y1="20.5" x2="32.8" y2="20.6" stroke="#b0401a" stroke-opacity="0.5" stroke-width="0.9"/><line x1="40.9" y1="56.6" x2="39.2" y2="47.8" stroke="#1588a0" stroke-opacity="0.4" stroke-width="0.7"/><line x1="38.4" y1="57.1" x2="44.8" y2="55.9" stroke="#b0401a" stroke-opacity="0.5" stroke-width="0.9"/><line x1="133.0" y1="37.8" x2="135.7" y2="37.4" stroke="#1588a0" stroke-opacity="0.4" stroke-width="0.7"/><line x1="132.6" y1="35.3" x2="133.6" y2="41.8" stroke="#b0401a" stroke-opacity="0.5" stroke-width="0.9"/><line x1="136.4" y1="34.2" x2="137.3" y2="35.7" stroke="#1588a0" stroke-opacity="0.4" stroke-width="0.7"/><line x1="138.5" y1="32.9" x2="132.9" y2="36.2" stroke="#b0401a" stroke-opacity="0.5" stroke-width="0.9"/><line x1="142.2" y1="37.3" x2="139.9" y2="37.1" stroke="#1588a0" stroke-opacity="0.4" stroke-width="0.7"/><line x1="142.0" y1="39.8" x2="142.4" y2="33.3" stroke="#b0401a" stroke-opacity="0.5" stroke-width="0.9"/><line x1="137.2" y1="42.4" x2="137.6" y2="39.5" stroke="#1588a0" stroke-opacity="0.4" stroke-width="0.7"/><line x1="134.7" y1="42.1" x2="141.1" y2="43.0" stroke="#b0401a" stroke-opacity="0.5" stroke-width="0.9"/><line x1="140.7" y1="40.5" x2="139.2" y2="38.6" stroke="#1588a0" stroke-opacity="0.4" stroke-width="0.7"/><line x1="138.7" y1="42.0" x2="143.9" y2="38.0" stroke="#b0401a" stroke-opacity="0.5" stroke-width="0.9"/><line x1="139.7" y1="32.7" x2="138.8" y2="35.1" stroke="#1588a0" stroke-opacity="0.4" stroke-width="0.7"/><line x1="142.0" y1="33.6" x2="136.0" y2="31.3" stroke="#b0401a" stroke-opacity="0.5" stroke-width="0.9"/><line x1="150.2" y1="39.2" x2="143.5" y2="38.0" stroke="#1588a0" stroke-opacity="0.4" stroke-width="0.7"/><line x1="149.8" y1="41.6" x2="150.9" y2="35.2" stroke="#b0401a" stroke-opacity="0.5" stroke-width="0.9"/><line x1="127.8" y1="41.8" x2="133.4" y2="39.2" stroke="#1588a0" stroke-opacity="0.4" stroke-width="0.7"/><line x1="126.7" y1="39.5" x2="129.5" y2="45.4" stroke="#b0401a" stroke-opacity="0.5" stroke-width="0.9"/><line x1="139.9" y1="47.7" x2="138.9" y2="41.8" stroke="#1588a0" stroke-opacity="0.4" stroke-width="0.7"/><line x1="137.4" y1="48.2" x2="143.8" y2="47.0" stroke="#b0401a" stroke-opacity="0.5" stroke-width="0.9"/><line x1="147.1" y1="43.8" x2="142.1" y2="40.1" stroke="#1588a0" stroke-opacity="0.4" stroke-width="0.7"/><line x1="145.6" y1="45.8" x2="149.5" y2="40.6" stroke="#b0401a" stroke-opacity="0.5" stroke-width="0.9"/><line x1="131.5" y1="46.7" x2="135.1" y2="41.4" stroke="#1588a0" stroke-opacity="0.4" stroke-width="0.7"/><line x1="129.4" y1="45.3" x2="134.8" y2="48.9" stroke="#b0401a" stroke-opacity="0.5" stroke-width="0.9"/><line x1="155.8" y1="43.0" x2="147.3" y2="40.2" stroke="#1588a0" stroke-opacity="0.4" stroke-width="0.7"/><line x1="155.0" y1="45.4" x2="157.1" y2="39.3" stroke="#b0401a" stroke-opacity="0.5" stroke-width="0.9"/><line x1="142.5" y1="53.9" x2="140.2" y2="45.2" stroke="#1588a0" stroke-opacity="0.4" stroke-width="0.7"/><line x1="140.0" y1="54.5" x2="146.3" y2="52.8" stroke="#b0401a" stroke-opacity="0.5" stroke-width="0.9"/><line x1="116.0" y1="40.3" x2="124.9" y2="39.0" stroke="#1588a0" stroke-opacity="0.4" stroke-width="0.7"/><line x1="115.6" y1="37.8" x2="116.6" y2="44.3" stroke="#b0401a" stroke-opacity="0.5" stroke-width="0.9"/><line x1="148.9" y1="56.1" x2="144.4" y2="48.3" stroke="#1588a0" stroke-opacity="0.4" stroke-width="0.7"/><line x1="146.7" y1="57.4" x2="152.4" y2="54.2" stroke="#b0401a" stroke-opacity="0.5" stroke-width="0.9"/><line x1="127.0" y1="49.6" x2="133.0" y2="42.8" stroke="#1588a0" stroke-opacity="0.4" stroke-width="0.7"/><line x1="125.1" y1="47.9" x2="130.0" y2="52.2" stroke="#b0401a" stroke-opacity="0.5" stroke-width="0.9"/><line x1="137.8" y1="15.1" x2="137.9" y2="24.1" stroke="#1588a0" stroke-opacity="0.4" stroke-width="0.7"/><line x1="140.3" y1="15.0" x2="133.8" y2="15.1" stroke="#b0401a" stroke-opacity="0.5" stroke-width="0.9"/><line x1="155.3" y1="37.7" x2="146.3" y2="37.3" stroke="#1588a0" stroke-opacity="0.4" stroke-width="0.7"/><line x1="155.2" y1="40.2" x2="155.5" y2="33.7" stroke="#b0401a" stroke-opacity="0.5" stroke-width="0.9"/><line x1="140.3" y1="19.2" x2="139.2" y2="28.2" stroke="#1588a0" stroke-opacity="0.4" stroke-width="0.7"/><line x1="142.8" y1="19.6" x2="136.4" y2="18.7" stroke="#b0401a" stroke-opacity="0.5" stroke-width="0.9"/><line x1="138.8" y1="52.1" x2="138.4" y2="43.8" stroke="#1588a0" stroke-opacity="0.4" stroke-width="0.7"/><line x1="136.3" y1="52.2" x2="142.8" y2="51.8" stroke="#b0401a" stroke-opacity="0.5" stroke-width="0.9"/><line x1="160.4" y1="34.7" x2="151.4" y2="35.6" stroke="#1588a0" stroke-opacity="0.4" stroke-width="0.7"/><line x1="160.6" y1="37.2" x2="160.0" y2="30.7" stroke="#b0401a" stroke-opacity="0.5" stroke-width="0.9"/><line x1="122.8" y1="36.7" x2="131.2" y2="36.8" stroke="#1588a0" stroke-opacity="0.4" stroke-width="0.7"/><line x1="122.8" y1="34.2" x2="122.7" y2="40.7" stroke="#b0401a" stroke-opacity="0.5" stroke-width="0.9"/><line x1="128.7" y1="56.0" x2="132.7" y2="47.9" stroke="#1588a0" stroke-opacity="0.4" stroke-width="0.7"/><line x1="126.5" y1="54.9" x2="132.3" y2="57.7" stroke="#b0401a" stroke-opacity="0.5" stroke-width="0.9"/><line x1="147.9" y1="19.5" x2="143.5" y2="27.3" stroke="#1588a0" stroke-opacity="0.4" stroke-width="0.7"/><line x1="150.1" y1="20.7" x2="144.4" y2="17.5" stroke="#b0401a" stroke-opacity="0.5" stroke-width="0.9"/><line x1="136.2" y1="59.1" x2="137.0" y2="50.1" stroke="#1588a0" stroke-opacity="0.4" stroke-width="0.7"/><line x1="133.7" y1="58.9" x2="140.2" y2="59.4" stroke="#b0401a" stroke-opacity="0.5" stroke-width="0.9"/><line x1="151.0" y1="26.9" x2="143.9" y2="32.4" stroke="#1588a0" stroke-opacity="0.4" stroke-width="0.7"/><line x1="152.5" y1="28.8" x2="148.5" y2="23.7" stroke="#b0401a" stroke-opacity="0.5" stroke-width="0.9"/><line x1="132.4" y1="58.0" x2="134.7" y2="49.3" stroke="#1588a0" stroke-opacity="0.4" stroke-width="0.7"/><line x1="130.0" y1="57.3" x2="136.3" y2="59.0" stroke="#b0401a" stroke-opacity="0.5" stroke-width="0.9"/><line x1="117.6" y1="35.0" x2="126.5" y2="35.9" stroke="#1588a0" stroke-opacity="0.4" stroke-width="0.7"/><line x1="117.8" y1="32.6" x2="117.2" y2="39.0" stroke="#b0401a" stroke-opacity="0.5" stroke-width="0.9"/><line x1="133.3" y1="20.8" x2="135.8" y2="29.4" stroke="#1588a0" stroke-opacity="0.4" stroke-width="0.7"/><line x1="135.7" y1="20.1" x2="129.4" y2="21.9" stroke="#b0401a" stroke-opacity="0.5" stroke-width="0.9"/><line x1="134.2" y1="53.8" x2="136.2" y2="45.0" stroke="#1588a0" stroke-opacity="0.4" stroke-width="0.7"/><line x1="131.8" y1="53.3" x2="138.1" y2="54.7" stroke="#b0401a" stroke-opacity="0.5" stroke-width="0.9"/><line x1="129.7" y1="18.3" x2="133.3" y2="26.5" stroke="#1588a0" stroke-opacity="0.4" stroke-width="0.7"/><line x1="131.9" y1="17.3" x2="126.0" y2="19.9" stroke="#b0401a" stroke-opacity="0.5" stroke-width="0.9"/><line x1="152.7" y1="53.0" x2="146.6" y2="46.4" stroke="#1588a0" stroke-opacity="0.4" stroke-width="0.7"/><line x1="150.9" y1="54.7" x2="155.7" y2="50.3" stroke="#b0401a" stroke-opacity="0.5" stroke-width="0.9"/><line x1="123.0" y1="45.2" x2="130.9" y2="40.9" stroke="#1588a0" stroke-opacity="0.4" stroke-width="0.7"/><line x1="121.8" y1="43.0" x2="124.9" y2="48.7" stroke="#b0401a" stroke-opacity="0.5" stroke-width="0.9"/><line x1="117.5" y1="45.8" x2="125.7" y2="42.3" stroke="#1588a0" stroke-opacity="0.4" stroke-width="0.7"/><line x1="116.5" y1="43.6" x2="119.0" y2="49.5" stroke="#b0401a" stroke-opacity="0.5" stroke-width="0.9"/><line x1="119.4" y1="29.6" x2="127.8" y2="32.9" stroke="#1588a0" stroke-opacity="0.4" stroke-width="0.7"/><line x1="120.3" y1="27.3" x2="117.9" y2="33.4" stroke="#b0401a" stroke-opacity="0.5" stroke-width="0.9"/><line x1="157.5" y1="26.3" x2="149.6" y2="30.6" stroke="#1588a0" stroke-opacity="0.4" stroke-width="0.7"/><line x1="158.7" y1="28.5" x2="155.6" y2="22.8" stroke="#b0401a" stroke-opacity="0.5" stroke-width="0.9"/><line x1="119.4" y1="25.5" x2="127.1" y2="30.2" stroke="#1588a0" stroke-opacity="0.4" stroke-width="0.7"/><line x1="120.7" y1="23.3" x2="117.3" y2="28.9" stroke="#b0401a" stroke-opacity="0.5" stroke-width="0.9"/><line x1="158.5" y1="39.2" x2="149.5" y2="38.2" stroke="#1588a0" stroke-opacity="0.4" stroke-width="0.7"/><line x1="158.2" y1="41.7" x2="158.9" y2="35.2" stroke="#b0401a" stroke-opacity="0.5" stroke-width="0.9"/><line x1="155.5" y1="23.8" x2="148.3" y2="29.2" stroke="#1588a0" stroke-opacity="0.4" stroke-width="0.7"/><line x1="157.0" y1="25.8" x2="153.1" y2="20.6" stroke="#b0401a" stroke-opacity="0.5" stroke-width="0.9"/><line x1="138.5" y1="55.4" x2="138.3" y2="46.4" stroke="#1588a0" stroke-opacity="0.4" stroke-width="0.7"/><line x1="136.0" y1="55.5" x2="142.5" y2="55.3" stroke="#b0401a" stroke-opacity="0.5" stroke-width="0.9"/><line x1="147.9" y1="49.3" x2="142.5" y2="42.5" stroke="#1588a0" stroke-opacity="0.4" stroke-width="0.7"/><line x1="146.0" y1="50.9" x2="151.1" y2="46.8" stroke="#b0401a" stroke-opacity="0.5" stroke-width="0.9"/><line x1="154.6" y1="29.8" x2="146.4" y2="33.4" stroke="#1588a0" stroke-opacity="0.4" stroke-width="0.7"/><line x1="155.6" y1="32.1" x2="153.0" y2="26.1" stroke="#b0401a" stroke-opacity="0.5" stroke-width="0.9"/><line x1="129.1" y1="21.4" x2="133.6" y2="29.3" stroke="#1588a0" stroke-opacity="0.4" stroke-width="0.7"/><line x1="131.3" y1="20.2" x2="125.6" y2="23.4" stroke="#b0401a" stroke-opacity="0.5" stroke-width="0.9"/><line x1="152.1" y1="31.8" x2="144.4" y2="34.7" stroke="#1588a0" stroke-opacity="0.4" stroke-width="0.7"/><line x1="153.0" y1="34.1" x2="150.8" y2="28.0" stroke="#b0401a" stroke-opacity="0.5" stroke-width="0.9"/><line x1="142.1" y1="58.6" x2="140.4" y2="49.8" stroke="#1588a0" stroke-opacity="0.4" stroke-width="0.7"/><line x1="139.6" y1="59.1" x2="146.0" y2="57.9" stroke="#b0401a" stroke-opacity="0.5" stroke-width="0.9"/><line x1="147.9" y1="53.1" x2="143.2" y2="45.4" stroke="#1588a0" stroke-opacity="0.4" stroke-width="0.7"/><line x1="145.7" y1="54.4" x2="151.3" y2="51.0" stroke="#b0401a" stroke-opacity="0.5" stroke-width="0.9"/><line x1="151.1" y1="20.1" x2="145.6" y2="27.2" stroke="#1588a0" stroke-opacity="0.4" stroke-width="0.7"/><line x1="153.1" y1="21.6" x2="147.9" y2="17.6" stroke="#b0401a" stroke-opacity="0.5" stroke-width="0.9"/><line x1="157.2" y1="33.6" x2="148.4" y2="35.2" stroke="#1588a0" stroke-opacity="0.4" stroke-width="0.7"/><line x1="157.7" y1="36.1" x2="156.5" y2="29.7" stroke="#b0401a" stroke-opacity="0.5" stroke-width="0.9"/><line x1="136.0" y1="19.3" x2="137.0" y2="28.3" stroke="#1588a0" stroke-opacity="0.4" stroke-width="0.7"/><line x1="138.5" y1="19.1" x2="132.0" y2="19.8" stroke="#b0401a" stroke-opacity="0.5" stroke-width="0.9"/><line x1="143.8" y1="20.5" x2="140.8" y2="29.0" stroke="#1588a0" stroke-opacity="0.4" stroke-width="0.7"/><line x1="146.1" y1="21.3" x2="140.0" y2="19.2" stroke="#b0401a" stroke-opacity="0.5" stroke-width="0.9"/><line x1="121.4" y1="50.9" x2="128.3" y2="45.1" stroke="#1588a0" stroke-opacity="0.4" stroke-width="0.7"/><line x1="119.8" y1="49.0" x2="123.9" y2="54.0" stroke="#b0401a" stroke-opacity="0.5" stroke-width="0.9"/><line x1="125.2" y1="25.3" x2="131.9" y2="31.4" stroke="#1588a0" stroke-opacity="0.4" stroke-width="0.7"/><line x1="126.9" y1="23.5" x2="122.5" y2="28.3" stroke="#b0401a" stroke-opacity="0.5" stroke-width="0.9"/><line x1="124.9" y1="53.1" x2="130.6" y2="46.1" stroke="#1588a0" stroke-opacity="0.4" stroke-width="0.7"/><line x1="122.9" y1="51.5" x2="128.0" y2="55.6" stroke="#b0401a" stroke-opacity="0.5" stroke-width="0.9"/><line x1="154.4" y1="49.3" x2="147.2" y2="43.9" stroke="#1588a0" stroke-opacity="0.4" stroke-width="0.7"/><line x1="152.9" y1="51.3" x2="156.8" y2="46.1" stroke="#b0401a" stroke-opacity="0.5" stroke-width="0.9"/><line x1="119.7" y1="32.8" x2="128.5" y2="34.8" stroke="#1588a0" stroke-opacity="0.4" stroke-width="0.7"/><line x1="120.3" y1="30.3" x2="118.8" y2="36.7" stroke="#b0401a" stroke-opacity="0.5" stroke-width="0.9"/><line x1="146.6" y1="23.3" x2="141.9" y2="30.8" stroke="#1588a0" stroke-opacity="0.4" stroke-width="0.7"/><line x1="148.7" y1="24.6" x2="143.2" y2="21.2" stroke="#b0401a" stroke-opacity="0.5" stroke-width="0.9"/><line x1="151.4" y1="44.8" x2="144.0" y2="40.5" stroke="#1588a0" stroke-opacity="0.4" stroke-width="0.7"/><line x1="150.1" y1="47.0" x2="153.4" y2="41.4" stroke="#b0401a" stroke-opacity="0.5" stroke-width="0.9"/><line x1="121.4" y1="22.2" x2="128.1" y2="28.2" stroke="#1588a0" stroke-opacity="0.4" stroke-width="0.7"/><line x1="123.0" y1="20.3" x2="118.7" y2="25.2" stroke="#b0401a" stroke-opacity="0.5" stroke-width="0.9"/><line x1="121.4" y1="39.6" x2="130.3" y2="38.2" stroke="#1588a0" stroke-opacity="0.4" stroke-width="0.7"/><line x1="121.0" y1="37.1" x2="122.0" y2="43.5" stroke="#b0401a" stroke-opacity="0.5" stroke-width="0.9"/><line x1="125.0" y1="21.7" x2="130.8" y2="28.5" stroke="#1588a0" stroke-opacity="0.4" stroke-width="0.7"/><line x1="126.9" y1="20.0" x2="121.9" y2="24.3" stroke="#b0401a" stroke-opacity="0.5" stroke-width="0.9"/><line x1="133.5" y1="16.6" x2="135.4" y2="25.4" stroke="#1588a0" stroke-opacity="0.4" stroke-width="0.7"/><line x1="135.9" y1="16.1" x2="129.6" y2="17.5" stroke="#b0401a" stroke-opacity="0.5" stroke-width="0.9"/><line x1="131.2" y1="52.9" x2="134.8" y2="44.6" stroke="#1588a0" stroke-opacity="0.4" stroke-width="0.7"/><line x1="128.9" y1="51.9" x2="134.9" y2="54.4" stroke="#b0401a" stroke-opacity="0.5" stroke-width="0.9"/><line x1="157.4" y1="47.3" x2="149.5" y2="43.1" stroke="#1588a0" stroke-opacity="0.4" stroke-width="0.7"/><line x1="156.3" y1="49.5" x2="159.3" y2="43.8" stroke="#b0401a" stroke-opacity="0.5" stroke-width="0.9"/><line x1="144.4" y1="17.1" x2="141.6" y2="25.7" stroke="#1588a0" stroke-opacity="0.4" stroke-width="0.7"/><line x1="146.8" y1="17.9" x2="140.6" y2="15.9" stroke="#b0401a" stroke-opacity="0.5" stroke-width="0.9"/><line x1="154.1" y1="34.5" x2="145.2" y2="35.9" stroke="#1588a0" stroke-opacity="0.4" stroke-width="0.7"/><line x1="154.5" y1="37.0" x2="153.5" y2="30.6" stroke="#b0401a" stroke-opacity="0.5" stroke-width="0.9"/><line x1="122.7" y1="31.3" x2="131.1" y2="34.5" stroke="#1588a0" stroke-opacity="0.4" stroke-width="0.7"/><line x1="123.5" y1="29.0" x2="121.3" y2="35.1" stroke="#b0401a" stroke-opacity="0.5" stroke-width="0.9"/><line x1="158.6" y1="30.0" x2="150.0" y2="32.9" stroke="#1588a0" stroke-opacity="0.4" stroke-width="0.7"/><line x1="159.4" y1="32.4" x2="157.3" y2="26.2" stroke="#b0401a" stroke-opacity="0.5" stroke-width="0.9"/><line x1="144.4" y1="51.2" x2="140.9" y2="43.4" stroke="#1588a0" stroke-opacity="0.4" stroke-width="0.7"/><line x1="142.1" y1="52.2" x2="148.0" y2="49.6" stroke="#b0401a" stroke-opacity="0.5" stroke-width="0.9"/><line x1="37.7" y1="142.2" x2="37.9" y2="139.3" stroke="#1588a0" stroke-opacity="0.4" stroke-width="0.7"/><line x1="35.2" y1="142.0" x2="41.7" y2="142.4" stroke="#b0401a" stroke-opacity="0.5" stroke-width="0.9"/><line x1="35.7" y1="131.9" x2="37.0" y2="134.7" stroke="#1588a0" stroke-opacity="0.4" stroke-width="0.7"/><line x1="38.0" y1="130.9" x2="32.1" y2="133.5" stroke="#b0401a" stroke-opacity="0.5" stroke-width="0.9"/><line x1="34.5" y1="136.3" x2="36.4" y2="136.7" stroke="#1588a0" stroke-opacity="0.4" stroke-width="0.7"/><line x1="35.0" y1="133.9" x2="33.7" y2="140.2" stroke="#b0401a" stroke-opacity="0.5" stroke-width="0.9"/><line x1="40.6" y1="132.8" x2="39.2" y2="135.1" stroke="#1588a0" stroke-opacity="0.4" stroke-width="0.7"/><line x1="42.7" y1="134.1" x2="37.2" y2="130.7" stroke="#b0401a" stroke-opacity="0.5" stroke-width="0.9"/><line x1="41.8" y1="137.3" x2="39.7" y2="137.2" stroke="#1588a0" stroke-opacity="0.4" stroke-width="0.7"/><line x1="41.6" y1="139.8" x2="42.1" y2="133.4" stroke="#b0401a" stroke-opacity="0.5" stroke-width="0.9"/><line x1="41.4" y1="141.5" x2="39.5" y2="139.0" stroke="#1588a0" stroke-opacity="0.4" stroke-width="0.7"/><line x1="39.4" y1="143.0" x2="44.6" y2="139.1" stroke="#b0401a" stroke-opacity="0.5" stroke-width="0.9"/><line x1="42.5" y1="125.5" x2="40.0" y2="131.8" stroke="#1588a0" stroke-opacity="0.4" stroke-width="0.7"/><line x1="44.8" y1="126.4" x2="38.8" y2="124.1" stroke="#b0401a" stroke-opacity="0.5" stroke-width="0.9"/><line x1="49.7" y1="133.2" x2="43.2" y2="135.3" stroke="#1588a0" stroke-opacity="0.4" stroke-width="0.7"/><line x1="50.4" y1="135.5" x2="48.4" y2="129.4" stroke="#b0401a" stroke-opacity="0.5" stroke-width="0.9"/><line x1="37.5" y1="149.5" x2="37.8" y2="142.6" stroke="#1588a0" stroke-opacity="0.4" stroke-width="0.7"/><line x1="35.0" y1="149.4" x2="41.5" y2="149.6" stroke="#b0401a" stroke-opacity="0.5" stroke-width="0.9"/><line x1="25.9" y1="138.0" x2="32.6" y2="137.5" stroke="#1588a0" stroke-opacity="0.4" stroke-width="0.7"/><line x1="25.7" y1="135.5" x2="26.2" y2="142.0" stroke="#b0401a" stroke-opacity="0.5" stroke-width="0.9"/><line x1="28.0" y1="132.7" x2="33.5" y2="135.1" stroke="#1588a0" stroke-opacity="0.4" stroke-width="0.7"/><line x1="29.0" y1="130.4" x2="26.4" y2="136.4" stroke="#b0401a" stroke-opacity="0.5" stroke-width="0.9"/><line x1="25.8" y1="151.0" x2="31.7" y2="144.2" stroke="#1588a0" stroke-opacity="0.4" stroke-width="0.7"/><line x1="23.9" y1="149.4" x2="28.8" y2="153.6" stroke="#b0401a" stroke-opacity="0.5" stroke-width="0.9"/><line x1="31.7" y1="151.8" x2="35.2" y2="143.7" stroke="#1588a0" stroke-opacity="0.4" stroke-width="0.7"/><line x1="29.4" y1="150.8" x2="35.4" y2="153.4" stroke="#b0401a" stroke-opacity="0.5" stroke-width="0.9"/><line x1="47.0" y1="117.8" x2="43.2" y2="125.9" stroke="#1588a0" stroke-opacity="0.4" stroke-width="0.7"/><line x1="49.2" y1="118.9" x2="43.4" y2="116.1" stroke="#b0401a" stroke-opacity="0.5" stroke-width="0.9"/><line x1="58.4" y1="135.2" x2="49.4" y2="136.0" stroke="#1588a0" stroke-opacity="0.4" stroke-width="0.7"/><line x1="58.6" y1="137.7" x2="58.0" y2="131.2" stroke="#b0401a" stroke-opacity="0.5" stroke-width="0.9"/><line x1="18.3" y1="130.0" x2="26.8" y2="133.0" stroke="#1588a0" stroke-opacity="0.4" stroke-width="0.7"/><line x1="19.2" y1="127.7" x2="17.0" y2="133.8" stroke="#b0401a" stroke-opacity="0.5" stroke-width="0.9"/><line x1="51.5" y1="152.3" x2="45.5" y2="145.5" stroke="#1588a0" stroke-opacity="0.4" stroke-width="0.7"/><line x1="49.6" y1="153.9" x2="54.5" y2="149.6" stroke="#b0401a" stroke-opacity="0.5" stroke-width="0.9"/><line x1="22.5" y1="142.8" x2="30.9" y2="139.6" stroke="#1588a0" stroke-opacity="0.4" stroke-width="0.7"/><line x1="21.6" y1="140.4" x2="23.9" y2="146.5" stroke="#b0401a" stroke-opacity="0.5" stroke-width="0.9"/><line x1="43.7" y1="155.4" x2="41.0" y2="146.8" stroke="#1588a0" stroke-opacity="0.4" stroke-width="0.7"/><line x1="41.3" y1="156.2" x2="47.5" y2="154.3" stroke="#b0401a" stroke-opacity="0.5" stroke-width="0.9"/><line x1="37.6" y1="155.8" x2="37.8" y2="146.8" stroke="#1588a0" stroke-opacity="0.4" stroke-width="0.7"/><line x1="35.1" y1="155.8" x2="41.6" y2="155.9" stroke="#b0401a" stroke-opacity="0.5" stroke-width="0.9"/><line x1="23.5" y1="125.7" x2="30.6" y2="131.3" stroke="#1588a0" stroke-opacity="0.4" stroke-width="0.7"/><line x1="25.1" y1="123.7" x2="21.1" y2="128.9" stroke="#b0401a" stroke-opacity="0.5" stroke-width="0.9"/><line x1="56.1" y1="146.0" x2="48.0" y2="142.0" stroke="#1588a0" stroke-opacity="0.4" stroke-width="0.7"/><line x1="55.0" y1="148.2" x2="57.9" y2="142.4" stroke="#b0401a" stroke-opacity="0.5" stroke-width="0.9"/><line x1="55.5" y1="131.7" x2="46.9" y2="134.3" stroke="#1588a0" stroke-opacity="0.4" stroke-width="0.7"/><line x1="56.2" y1="134.1" x2="54.4" y2="127.9" stroke="#b0401a" stroke-opacity="0.5" stroke-width="0.9"/><line x1="33.7" y1="115.3" x2="35.5" y2="124.2" stroke="#1588a0" stroke-opacity="0.4" stroke-width="0.7"/><line x1="36.2" y1="114.9" x2="29.8" y2="116.1" stroke="#b0401a" stroke-opacity="0.5" stroke-width="0.9"/><line x1="53.7" y1="141.4" x2="45.1" y2="139.0" stroke="#1588a0" stroke-opacity="0.4" stroke-width="0.7"/><line x1="53.0" y1="143.8" x2="54.8" y2="137.5" stroke="#b0401a" stroke-opacity="0.5" stroke-width="0.9"/><line x1="27.5" y1="124.4" x2="33.2" y2="131.3" stroke="#1588a0" stroke-opacity="0.4" stroke-width="0.7"/><line x1="29.4" y1="122.8" x2="24.4" y2="127.0" stroke="#b0401a" stroke-opacity="0.5" stroke-width="0.9"/><line x1="19.5" y1="148.2" x2="27.2" y2="143.5" stroke="#1588a0" stroke-opacity="0.4" stroke-width="0.7"/><line x1="18.2" y1="146.1" x2="21.5" y2="151.6" stroke="#b0401a" stroke-opacity="0.5" stroke-width="0.9"/><line x1="54.0" y1="123.1" x2="47.2" y2="129.0" stroke="#1588a0" stroke-opacity="0.4" stroke-width="0.7"/><line x1="55.7" y1="125.0" x2="51.4" y2="120.1" stroke="#b0401a" stroke-opacity="0.5" stroke-width="0.9"/><line x1="20.7" y1="127.4" x2="28.6" y2="131.8" stroke="#1588a0" stroke-opacity="0.4" stroke-width="0.7"/><line x1="21.9" y1="125.2" x2="18.8" y2="130.9" stroke="#b0401a" stroke-opacity="0.5" stroke-width="0.9"/><line x1="48.5" y1="154.6" x2="43.9" y2="146.8" stroke="#1588a0" stroke-opacity="0.4" stroke-width="0.7"/><line x1="46.3" y1="155.8" x2="51.9" y2="152.5" stroke="#b0401a" stroke-opacity="0.5" stroke-width="0.9"/><line x1="50.9" y1="148.0" x2="44.1" y2="142.2" stroke="#1588a0" stroke-opacity="0.4" stroke-width="0.7"/><line x1="49.3" y1="149.9" x2="53.5" y2="145.0" stroke="#b0401a" stroke-opacity="0.5" stroke-width="0.9"/><line x1="55.9" y1="137.6" x2="46.9" y2="137.3" stroke="#1588a0" stroke-opacity="0.4" stroke-width="0.7"/><line x1="55.8" y1="140.1" x2="56.0" y2="133.6" stroke="#b0401a" stroke-opacity="0.5" stroke-width="0.9"/><line x1="15.7" y1="137.5" x2="24.7" y2="137.3" stroke="#1588a0" stroke-opacity="0.4" stroke-width="0.7"/><line x1="15.6" y1="135.0" x2="15.8" y2="141.5" stroke="#b0401a" stroke-opacity="0.5" stroke-width="0.9"/><line x1="19.2" y1="135.0" x2="28.1" y2="136.0" stroke="#1588a0" stroke-opacity="0.4" stroke-width="0.7"/><line x1="19.4" y1="132.5" x2="18.8" y2="139.0" stroke="#b0401a" stroke-opacity="0.5" stroke-width="0.9"/><line x1="29.5" y1="121.6" x2="33.9" y2="129.5" stroke="#1588a0" stroke-opacity="0.4" stroke-width="0.7"/><line x1="31.7" y1="120.4" x2="26.0" y2="123.6" stroke="#b0401a" stroke-opacity="0.5" stroke-width="0.9"/><line x1="56.8" y1="140.8" x2="47.9" y2="139.0" stroke="#1588a0" stroke-opacity="0.4" stroke-width="0.7"/><line x1="56.3" y1="143.2" x2="57.5" y2="136.9" stroke="#b0401a" stroke-opacity="0.5" stroke-width="0.9"/><line x1="55.6" y1="125.9" x2="48.0" y2="130.7" stroke="#1588a0" stroke-opacity="0.4" stroke-width="0.7"/><line x1="56.9" y1="128.0" x2="53.5" y2="122.5" stroke="#b0401a" stroke-opacity="0.5" stroke-width="0.9"/><line x1="48.1" y1="123.0" x2="42.8" y2="130.3" stroke="#1588a0" stroke-opacity="0.4" stroke-width="0.7"/><line x1="50.1" y1="124.4" x2="44.8" y2="120.7" stroke="#b0401a" stroke-opacity="0.5" stroke-width="0.9"/><line x1="25.8" y1="128.2" x2="32.5" y2="133.0" stroke="#1588a0" stroke-opacity="0.4" stroke-width="0.7"/><line x1="27.3" y1="126.2" x2="23.5" y2="131.4" stroke="#b0401a" stroke-opacity="0.5" stroke-width="0.9"/><line x1="40.5" y1="120.5" x2="39.1" y2="129.4" stroke="#1588a0" stroke-opacity="0.4" stroke-width="0.7"/><line x1="43.0" y1="120.9" x2="36.5" y2="119.9" stroke="#b0401a" stroke-opacity="0.5" stroke-width="0.9"/><line x1="18.6" y1="139.4" x2="27.6" y2="138.3" stroke="#1588a0" stroke-opacity="0.4" stroke-width="0.7"/><line x1="18.3" y1="136.9" x2="19.1" y2="143.3" stroke="#b0401a" stroke-opacity="0.5" stroke-width="0.9"/><line x1="28.4" y1="156.6" x2="32.3" y2="148.5" stroke="#1588a0" stroke-opacity="0.4" stroke-width="0.7"/><line x1="26.1" y1="155.5" x2="32.0" y2="158.3" stroke="#b0401a" stroke-opacity="0.5" stroke-width="0.9"/><line x1="22.5" y1="132.5" x2="31.0" y2="135.0" stroke="#1588a0" stroke-opacity="0.4" stroke-width="0.7"/><line x1="23.2" y1="130.1" x2="21.4" y2="136.3" stroke="#b0401a" stroke-opacity="0.5" stroke-width="0.9"/><line x1="26.9" y1="117.9" x2="31.4" y2="125.7" stroke="#1588a0" stroke-opacity="0.4" stroke-width="0.7"/><line x1="29.1" y1="116.6" x2="23.5" y2="119.9" stroke="#b0401a" stroke-opacity="0.5" stroke-width="0.9"/><line x1="22.4" y1="122.2" x2="28.9" y2="128.4" stroke="#1588a0" stroke-opacity="0.4" stroke-width="0.7"/><line x1="24.1" y1="120.4" x2="19.7" y2="125.1" stroke="#b0401a" stroke-opacity="0.5" stroke-width="0.9"/><line x1="50.8" y1="127.4" x2="43.8" y2="132.7" stroke="#1588a0" stroke-opacity="0.4" stroke-width="0.7"/><line x1="52.3" y1="129.4" x2="48.4" y2="124.2" stroke="#b0401a" stroke-opacity="0.5" stroke-width="0.9"/><line x1="31.2" y1="158.2" x2="33.9" y2="149.6" stroke="#1588a0" stroke-opacity="0.4" stroke-width="0.7"/><line x1="28.8" y1="157.4" x2="35.0" y2="159.4" stroke="#b0401a" stroke-opacity="0.5" stroke-width="0.9"/><line x1="35.7" y1="121.2" x2="37.0" y2="129.9" stroke="#1588a0" stroke-opacity="0.4" stroke-width="0.7"/><line x1="38.2" y1="120.8" x2="31.7" y2="121.8" stroke="#b0401a" stroke-opacity="0.5" stroke-width="0.9"/><line x1="16.8" y1="142.3" x2="25.5" y2="140.1" stroke="#1588a0" stroke-opacity="0.4" stroke-width="0.7"/><line x1="16.2" y1="139.9" x2="17.7" y2="146.2" stroke="#b0401a" stroke-opacity="0.5" stroke-width="0.9"/><line x1="44.9" y1="151.4" x2="41.1" y2="143.5" stroke="#1588a0" stroke-opacity="0.4" stroke-width="0.7"/><line x1="42.6" y1="152.4" x2="48.5" y2="149.6" stroke="#b0401a" stroke-opacity="0.5" stroke-width="0.9"/><line x1="53.4" y1="129.3" x2="45.4" y2="133.3" stroke="#1588a0" stroke-opacity="0.4" stroke-width="0.7"/><line x1="54.5" y1="131.5" x2="51.6" y2="125.7" stroke="#b0401a" stroke-opacity="0.5" stroke-width="0.9"/><line x1="40.9" y1="152.2" x2="39.3" y2="143.8" stroke="#1588a0" stroke-opacity="0.4" stroke-width="0.7"/><line x1="38.4" y1="152.7" x2="44.8" y2="151.5" stroke="#b0401a" stroke-opacity="0.5" stroke-width="0.9"/><line x1="32.3" y1="119.3" x2="35.1" y2="127.9" stroke="#1588a0" stroke-opacity="0.4" stroke-width="0.7"/><line x1="34.7" y1="118.5" x2="28.5" y2="120.5" stroke="#b0401a" stroke-opacity="0.5" stroke-width="0.9"/><line x1="55.7" y1="149.9" x2="48.5" y2="144.6" stroke="#1588a0" stroke-opacity="0.4" stroke-width="0.7"/><line x1="54.3" y1="152.0" x2="58.1" y2="146.7" stroke="#b0401a" stroke-opacity="0.5" stroke-width="0.9"/><line x1="25.5" y1="121.5" x2="31.1" y2="128.5" stroke="#1588a0" stroke-opacity="0.4" stroke-width="0.7"/><line x1="27.4" y1="119.9" x2="22.4" y2="124.0" stroke="#b0401a" stroke-opacity="0.5" stroke-width="0.9"/><line x1="51.0" y1="124.2" x2="44.6" y2="130.5" stroke="#1588a0" stroke-opacity="0.4" stroke-width="0.7"/><line x1="52.7" y1="126.0" x2="48.2" y2="121.4" stroke="#b0401a" stroke-opacity="0.5" stroke-width="0.9"/><line x1="42.8" y1="115.1" x2="40.9" y2="123.9" stroke="#1588a0" stroke-opacity="0.4" stroke-width="0.7"/><line x1="45.2" y1="115.6" x2="38.9" y2="114.3" stroke="#b0401a" stroke-opacity="0.5" stroke-width="0.9"/><line x1="52.8" y1="145.1" x2="44.9" y2="140.8" stroke="#1588a0" stroke-opacity="0.4" stroke-width="0.7"/><line x1="51.6" y1="147.3" x2="54.7" y2="141.6" stroke="#b0401a" stroke-opacity="0.5" stroke-width="0.9"/><line x1="53.6" y1="134.5" x2="45.0" y2="135.9" stroke="#1588a0" stroke-opacity="0.4" stroke-width="0.7"/><line x1="54.0" y1="136.9" x2="53.0" y2="130.5" stroke="#b0401a" stroke-opacity="0.5" stroke-width="0.9"/><line x1="34.1" y1="156.3" x2="35.9" y2="147.5" stroke="#1588a0" stroke-opacity="0.4" stroke-width="0.7"/><line x1="31.7" y1="155.8" x2="38.0" y2="157.1" stroke="#b0401a" stroke-opacity="0.5" stroke-width="0.9"/><line x1="44.1" y1="121.2" x2="40.8" y2="129.6" stroke="#1588a0" stroke-opacity="0.4" stroke-width="0.7"/><line x1="46.4" y1="122.1" x2="40.3" y2="119.8" stroke="#b0401a" stroke-opacity="0.5" stroke-width="0.9"/><line x1="28.2" y1="148.4" x2="33.6" y2="142.1" stroke="#1588a0" stroke-opacity="0.4" stroke-width="0.7"/><line x1="26.3" y1="146.7" x2="31.2" y2="151.0" stroke="#b0401a" stroke-opacity="0.5" stroke-width="0.9"/><line x1="37.0" y1="117.4" x2="37.5" y2="126.4" stroke="#1588a0" stroke-opacity="0.4" stroke-width="0.7"/><line x1="39.5" y1="117.3" x2="33.0" y2="117.6" stroke="#b0401a" stroke-opacity="0.5" stroke-width="0.9"/><line x1="22.5" y1="136.2" x2="31.0" y2="136.6" stroke="#1588a0" stroke-opacity="0.4" stroke-width="0.7"/><line x1="22.6" y1="133.7" x2="22.3" y2="140.2" stroke="#b0401a" stroke-opacity="0.5" stroke-width="0.9"/><line x1="30.5" y1="116.0" x2="33.5" y2="124.5" stroke="#1588a0" stroke-opacity="0.4" stroke-width="0.7"/><line x1="32.9" y1="115.2" x2="26.7" y2="117.4" stroke="#b0401a" stroke-opacity="0.5" stroke-width="0.9"/><line x1="24.5" y1="154.1" x2="30.1" y2="147.1" stroke="#1588a0" stroke-opacity="0.4" stroke-width="0.7"/><line x1="22.5" y1="152.6" x2="27.6" y2="156.6" stroke="#b0401a" stroke-opacity="0.5" stroke-width="0.9"/><line x1="59.1" y1="129.7" x2="50.6" y2="132.7" stroke="#1588a0" stroke-opacity="0.4" stroke-width="0.7"/><line x1="59.9" y1="132.1" x2="57.8" y2="126.0" stroke="#b0401a" stroke-opacity="0.5" stroke-width="0.9"/><line x1="24.6" y1="146.9" x2="31.8" y2="141.6" stroke="#1588a0" stroke-opacity="0.4" stroke-width="0.7"/><line x1="23.1" y1="144.9" x2="27.0" y2="150.1" stroke="#b0401a" stroke-opacity="0.5" stroke-width="0.9"/><line x1="142.1" y1="140.2" x2="139.8" y2="138.5" stroke="#1588a0" stroke-opacity="0.4" stroke-width="0.7"/><line x1="140.5" y1="142.2" x2="144.6" y2="137.1" stroke="#b0401a" stroke-opacity="0.5" stroke-width="0.9"/><line x1="134.6" y1="132.2" x2="136.5" y2="134.9" stroke="#1588a0" stroke-opacity="0.4" stroke-width="0.7"/><line x1="136.7" y1="130.8" x2="131.4" y2="134.5" stroke="#b0401a" stroke-opacity="0.5" stroke-width="0.9"/><line x1="137.5" y1="140.7" x2="137.8" y2="138.7" stroke="#1588a0" stroke-opacity="0.4" stroke-width="0.7"/><line x1="135.0" y1="140.4" x2="141.5" y2="141.2" stroke="#b0401a" stroke-opacity="0.5" stroke-width="0.9"/><line x1="133.7" y1="140.3" x2="136.1" y2="138.5" stroke="#1588a0" stroke-opacity="0.4" stroke-width="0.7"/><line x1="132.2" y1="138.3" x2="136.1" y2="143.5" stroke="#b0401a" stroke-opacity="0.5" stroke-width="0.9"/><line x1="141.3" y1="134.6" x2="139.5" y2="135.9" stroke="#1588a0" stroke-opacity="0.4" stroke-width="0.7"/><line x1="142.8" y1="136.7" x2="139.0" y2="131.4" stroke="#b0401a" stroke-opacity="0.5" stroke-width="0.9"/><line x1="133.2" y1="135.4" x2="135.8" y2="136.3" stroke="#1588a0" stroke-opacity="0.4" stroke-width="0.7"/><line x1="134.0" y1="133.0" x2="131.9" y2="139.2" stroke="#b0401a" stroke-opacity="0.5" stroke-width="0.9"/><line x1="144.0" y1="147.1" x2="140.7" y2="141.6" stroke="#1588a0" stroke-opacity="0.4" stroke-width="0.7"/><line x1="141.8" y1="148.4" x2="147.4" y2="145.1" stroke="#b0401a" stroke-opacity="0.5" stroke-width="0.9"/><line x1="146.6" y1="142.0" x2="141.9" y2="139.2" stroke="#1588a0" stroke-opacity="0.4" stroke-width="0.7"/><line x1="145.4" y1="144.1" x2="148.6" y2="138.5" stroke="#b0401a" stroke-opacity="0.5" stroke-width="0.9"/><line x1="148.7" y1="135.5" x2="142.8" y2="136.3" stroke="#1588a0" stroke-opacity="0.4" stroke-width="0.7"/><line x1="149.0" y1="138.0" x2="148.1" y2="131.6" stroke="#b0401a" stroke-opacity="0.5" stroke-width="0.9"/><line x1="128.2" y1="129.1" x2="133.6" y2="133.5" stroke="#1588a0" stroke-opacity="0.4" stroke-width="0.7"/><line x1="129.8" y1="127.2" x2="125.7" y2="132.3" stroke="#b0401a" stroke-opacity="0.5" stroke-width="0.9"/><line x1="145.9" y1="129.0" x2="141.6" y2="133.4" stroke="#1588a0" stroke-opacity="0.4" stroke-width="0.7"/><line x1="147.7" y1="130.8" x2="143.1" y2="126.2" stroke="#b0401a" stroke-opacity="0.5" stroke-width="0.9"/><line x1="144.5" y1="154.6" x2="141.4" y2="146.2" stroke="#1588a0" stroke-opacity="0.4" stroke-width="0.7"/><line x1="142.1" y1="155.5" x2="148.2" y2="153.2" stroke="#b0401a" stroke-opacity="0.5" stroke-width="0.9"/><line x1="142.2" y1="157.8" x2="140.4" y2="149.0" stroke="#1588a0" stroke-opacity="0.4" stroke-width="0.7"/><line x1="139.8" y1="158.3" x2="146.1" y2="157.0" stroke="#b0401a" stroke-opacity="0.5" stroke-width="0.9"/><line x1="122.1" y1="137.0" x2="130.8" y2="137.0" stroke="#1588a0" stroke-opacity="0.4" stroke-width="0.7"/><line x1="122.1" y1="134.5" x2="122.1" y2="141.0" stroke="#b0401a" stroke-opacity="0.5" stroke-width="0.9"/><line x1="144.6" y1="122.6" x2="141.0" y2="130.5" stroke="#1588a0" stroke-opacity="0.4" stroke-width="0.7"/><line x1="146.8" y1="123.6" x2="140.9" y2="120.9" stroke="#b0401a" stroke-opacity="0.5" stroke-width="0.9"/><line x1="135.1" y1="152.0" x2="136.7" y2="143.7" stroke="#1588a0" stroke-opacity="0.4" stroke-width="0.7"/><line x1="132.6" y1="151.5" x2="139.0" y2="152.7" stroke="#b0401a" stroke-opacity="0.5" stroke-width="0.9"/><line x1="137.0" y1="121.0" x2="137.6" y2="129.8" stroke="#1588a0" stroke-opacity="0.4" stroke-width="0.7"/><line x1="139.5" y1="120.8" x2="133.0" y2="121.2" stroke="#b0401a" stroke-opacity="0.5" stroke-width="0.9"/><line x1="117.7" y1="139.5" x2="126.6" y2="138.4" stroke="#1588a0" stroke-opacity="0.4" stroke-width="0.7"/><line x1="117.4" y1="137.0" x2="118.2" y2="143.5" stroke="#b0401a" stroke-opacity="0.5" stroke-width="0.9"/><line x1="119.7" y1="132.9" x2="128.4" y2="134.9" stroke="#1588a0" stroke-opacity="0.4" stroke-width="0.7"/><line x1="120.2" y1="130.5" x2="118.8" y2="136.8" stroke="#b0401a" stroke-opacity="0.5" stroke-width="0.9"/><line x1="124.9" y1="128.0" x2="132.1" y2="133.0" stroke="#1588a0" stroke-opacity="0.4" stroke-width="0.7"/><line x1="126.3" y1="126.0" x2="122.6" y2="131.3" stroke="#b0401a" stroke-opacity="0.5" stroke-width="0.9"/><line x1="152.7" y1="120.5" x2="146.7" y2="127.2" stroke="#1588a0" stroke-opacity="0.4" stroke-width="0.7"/><line x1="154.5" y1="122.1" x2="149.7" y2="117.8" stroke="#b0401a" stroke-opacity="0.5" stroke-width="0.9"/><line x1="152.9" y1="143.6" x2="144.7" y2="140.0" stroke="#1588a0" stroke-opacity="0.4" stroke-width="0.7"/><line x1="151.9" y1="145.9" x2="154.5" y2="139.9" stroke="#b0401a" stroke-opacity="0.5" stroke-width="0.9"/><line x1="132.3" y1="118.2" x2="134.9" y2="126.8" stroke="#1588a0" stroke-opacity="0.4" stroke-width="0.7"/><line x1="134.7" y1="117.5" x2="128.5" y2="119.3" stroke="#b0401a" stroke-opacity="0.5" stroke-width="0.9"/><line x1="158.4" y1="139.5" x2="149.5" y2="138.4" stroke="#1588a0" stroke-opacity="0.4" stroke-width="0.7"/><line x1="158.1" y1="141.9" x2="158.9" y2="135.5" stroke="#b0401a" stroke-opacity="0.5" stroke-width="0.9"/><line x1="155.4" y1="130.6" x2="147.0" y2="133.7" stroke="#1588a0" stroke-opacity="0.4" stroke-width="0.7"/><line x1="156.3" y1="132.9" x2="154.0" y2="126.8" stroke="#b0401a" stroke-opacity="0.5" stroke-width="0.9"/><line x1="126.7" y1="153.1" x2="131.9" y2="145.7" stroke="#1588a0" stroke-opacity="0.4" stroke-width="0.7"/><line x1="124.7" y1="151.6" x2="130.0" y2="155.4" stroke="#b0401a" stroke-opacity="0.5" stroke-width="0.9"/><line x1="124.9" y1="123.4" x2="131.2" y2="129.9" stroke="#1588a0" stroke-opacity="0.4" stroke-width="0.7"/><line x1="126.7" y1="121.6" x2="122.0" y2="126.1" stroke="#b0401a" stroke-opacity="0.5" stroke-width="0.9"/><line x1="137.3" y1="155.3" x2="137.6" y2="146.3" stroke="#1588a0" stroke-opacity="0.4" stroke-width="0.7"/><line x1="134.8" y1="155.2" x2="141.3" y2="155.4" stroke="#b0401a" stroke-opacity="0.5" stroke-width="0.9"/><line x1="155.3" y1="140.8" x2="146.5" y2="138.9" stroke="#1588a0" stroke-opacity="0.4" stroke-width="0.7"/><line x1="154.7" y1="143.3" x2="156.1" y2="136.9" stroke="#b0401a" stroke-opacity="0.5" stroke-width="0.9"/><line x1="157.6" y1="134.9" x2="148.7" y2="135.8" stroke="#1588a0" stroke-opacity="0.4" stroke-width="0.7"/><line x1="157.9" y1="137.4" x2="157.2" y2="130.9" stroke="#b0401a" stroke-opacity="0.5" stroke-width="0.9"/><line x1="133.5" y1="158.6" x2="135.3" y2="149.8" stroke="#1588a0" stroke-opacity="0.4" stroke-width="0.7"/><line x1="131.1" y1="158.1" x2="137.4" y2="159.4" stroke="#b0401a" stroke-opacity="0.5" stroke-width="0.9"/><line x1="150.1" y1="124.6" x2="143.8" y2="131.1" stroke="#1588a0" stroke-opacity="0.4" stroke-width="0.7"/><line x1="151.9" y1="126.4" x2="147.2" y2="121.8" stroke="#b0401a" stroke-opacity="0.5" stroke-width="0.9"/><line x1="153.2" y1="128.3" x2="145.4" y2="132.8" stroke="#1588a0" stroke-opacity="0.4" stroke-width="0.7"/><line x1="154.4" y1="130.5" x2="151.2" y2="124.8" stroke="#b0401a" stroke-opacity="0.5" stroke-width="0.9"/><line x1="119.6" y1="129.6" x2="128.0" y2="132.9" stroke="#1588a0" stroke-opacity="0.4" stroke-width="0.7"/><line x1="120.6" y1="127.3" x2="118.1" y2="133.3" stroke="#b0401a" stroke-opacity="0.5" stroke-width="0.9"/><line x1="116.5" y1="135.9" x2="125.5" y2="136.4" stroke="#1588a0" stroke-opacity="0.4" stroke-width="0.7"/><line x1="116.7" y1="133.4" x2="116.3" y2="139.9" stroke="#b0401a" stroke-opacity="0.5" stroke-width="0.9"/><line x1="140.6" y1="119.5" x2="139.3" y2="128.4" stroke="#1588a0" stroke-opacity="0.4" stroke-width="0.7"/><line x1="143.1" y1="119.9" x2="136.6" y2="118.9" stroke="#b0401a" stroke-opacity="0.5" stroke-width="0.9"/><line x1="138.4" y1="159.1" x2="138.2" y2="150.1" stroke="#1588a0" stroke-opacity="0.4" stroke-width="0.7"/><line x1="135.9" y1="159.1" x2="142.4" y2="159.0" stroke="#b0401a" stroke-opacity="0.5" stroke-width="0.9"/><line x1="148.9" y1="150.3" x2="143.2" y2="143.4" stroke="#1588a0" stroke-opacity="0.4" stroke-width="0.7"/><line x1="147.0" y1="151.9" x2="152.0" y2="147.8" stroke="#b0401a" stroke-opacity="0.5" stroke-width="0.9"/><line x1="119.6" y1="143.3" x2="128.1" y2="140.4" stroke="#1588a0" stroke-opacity="0.4" stroke-width="0.7"/><line x1="118.8" y1="140.9" x2="120.9" y2="147.1" stroke="#b0401a" stroke-opacity="0.5" stroke-width="0.9"/><line x1="122.6" y1="151.4" x2="129.1" y2="145.3" stroke="#1588a0" stroke-opacity="0.4" stroke-width="0.7"/><line x1="120.9" y1="149.6" x2="125.3" y2="154.3" stroke="#b0401a" stroke-opacity="0.5" stroke-width="0.9"/><line x1="123.6" y1="144.3" x2="131.5" y2="140.3" stroke="#1588a0" stroke-opacity="0.4" stroke-width="0.7"/><line x1="122.5" y1="142.1" x2="125.4" y2="147.9" stroke="#b0401a" stroke-opacity="0.5" stroke-width="0.9"/><line x1="140.8" y1="153.1" x2="139.3" y2="144.2" stroke="#1588a0" stroke-opacity="0.4" stroke-width="0.7"/><line x1="138.4" y1="153.5" x2="144.8" y2="152.4" stroke="#b0401a" stroke-opacity="0.5" stroke-width="0.9"/><line x1="129.7" y1="122.2" x2="134.1" y2="130.1" stroke="#1588a0" stroke-opacity="0.4" stroke-width="0.7"/><line x1="131.8" y1="121.0" x2="126.2" y2="124.2" stroke="#b0401a" stroke-opacity="0.5" stroke-width="0.9"/><line x1="157.8" y1="128.2" x2="149.5" y2="131.9" stroke="#1588a0" stroke-opacity="0.4" stroke-width="0.7"/><line x1="158.8" y1="130.5" x2="156.1" y2="124.5" stroke="#b0401a" stroke-opacity="0.5" stroke-width="0.9"/><line x1="156.9" y1="144.7" x2="148.6" y2="141.3" stroke="#1588a0" stroke-opacity="0.4" stroke-width="0.7"/><line x1="155.9" y1="147.1" x2="158.4" y2="141.0" stroke="#b0401a" stroke-opacity="0.5" stroke-width="0.9"/><line x1="155.8" y1="149.4" x2="148.4" y2="144.2" stroke="#1588a0" stroke-opacity="0.4" stroke-width="0.7"/><line x1="154.3" y1="151.4" x2="158.1" y2="146.1" stroke="#b0401a" stroke-opacity="0.5" stroke-width="0.9"/><line x1="118.0" y1="147.0" x2="126.0" y2="143.0" stroke="#1588a0" stroke-opacity="0.4" stroke-width="0.7"/><line x1="116.9" y1="144.8" x2="119.8" y2="150.6" stroke="#b0401a" stroke-opacity="0.5" stroke-width="0.9"/><line x1="155.1" y1="136.6" x2="146.1" y2="136.8" stroke="#1588a0" stroke-opacity="0.4" stroke-width="0.7"/><line x1="155.1" y1="139.1" x2="155.0" y2="132.6" stroke="#b0401a" stroke-opacity="0.5" stroke-width="0.9"/><line x1="155.5" y1="124.4" x2="148.2" y2="129.7" stroke="#1588a0" stroke-opacity="0.4" stroke-width="0.7"/><line x1="157.0" y1="126.5" x2="153.2" y2="121.2" stroke="#b0401a" stroke-opacity="0.5" stroke-width="0.9"/><line x1="123.0" y1="148.2" x2="130.2" y2="142.8" stroke="#1588a0" stroke-opacity="0.4" stroke-width="0.7"/><line x1="121.5" y1="146.2" x2="125.4" y2="151.4" stroke="#b0401a" stroke-opacity="0.5" stroke-width="0.9"/><line x1="158.5" y1="131.3" x2="149.8" y2="133.7" stroke="#1588a0" stroke-opacity="0.4" stroke-width="0.7"/><line x1="159.1" y1="133.7" x2="157.4" y2="127.4" stroke="#b0401a" stroke-opacity="0.5" stroke-width="0.9"/><line x1="123.8" y1="131.5" x2="131.6" y2="134.5" stroke="#1588a0" stroke-opacity="0.4" stroke-width="0.7"/><line x1="124.6" y1="129.2" x2="122.3" y2="135.3" stroke="#b0401a" stroke-opacity="0.5" stroke-width="0.9"/><line x1="128.7" y1="118.8" x2="132.8" y2="126.8" stroke="#1588a0" stroke-opacity="0.4" stroke-width="0.7"/><line x1="131.0" y1="117.6" x2="125.2" y2="120.6" stroke="#b0401a" stroke-opacity="0.5" stroke-width="0.9"/><line x1="125.6" y1="120.0" x2="130.9" y2="127.3" stroke="#1588a0" stroke-opacity="0.4" stroke-width="0.7"/><line x1="127.6" y1="118.5" x2="122.4" y2="122.4" stroke="#b0401a" stroke-opacity="0.5" stroke-width="0.9"/><line x1="137.3" y1="117.0" x2="137.6" y2="126.0" stroke="#1588a0" stroke-opacity="0.4" stroke-width="0.7"/><line x1="139.8" y1="116.9" x2="133.3" y2="117.1" stroke="#b0401a" stroke-opacity="0.5" stroke-width="0.9"/><line x1="152.5" y1="153.0" x2="146.4" y2="146.3" stroke="#1588a0" stroke-opacity="0.4" stroke-width="0.7"/><line x1="150.6" y1="154.7" x2="155.4" y2="150.3" stroke="#b0401a" stroke-opacity="0.5" stroke-width="0.9"/><line x1="147.7" y1="155.9" x2="143.6" y2="147.8" stroke="#1588a0" stroke-opacity="0.4" stroke-width="0.7"/><line x1="145.5" y1="157.0" x2="151.2" y2="154.0" stroke="#b0401a" stroke-opacity="0.5" stroke-width="0.9"/><line x1="119.4" y1="125.4" x2="127.0" y2="130.2" stroke="#1588a0" stroke-opacity="0.4" stroke-width="0.7"/><line x1="120.7" y1="123.3" x2="117.3" y2="128.8" stroke="#b0401a" stroke-opacity="0.5" stroke-width="0.9"/><line x1="131.3" y1="154.1" x2="134.6" y2="145.7" stroke="#1588a0" stroke-opacity="0.4" stroke-width="0.7"/><line x1="129.0" y1="153.2" x2="135.0" y2="155.6" stroke="#b0401a" stroke-opacity="0.5" stroke-width="0.9"/><line x1="140.7" y1="116.2" x2="139.5" y2="125.1" stroke="#1588a0" stroke-opacity="0.4" stroke-width="0.7"/><line x1="143.1" y1="116.5" x2="136.7" y2="115.7" stroke="#b0401a" stroke-opacity="0.5" stroke-width="0.9"/><line x1="127.7" y1="125.6" x2="133.3" y2="131.9" stroke="#1588a0" stroke-opacity="0.4" stroke-width="0.7"/><line x1="129.5" y1="123.9" x2="124.7" y2="128.3" stroke="#b0401a" stroke-opacity="0.5" stroke-width="0.9"/><line x1="148.6" y1="121.8" x2="143.5" y2="129.2" stroke="#1588a0" stroke-opacity="0.4" stroke-width="0.7"/><line x1="150.7" y1="123.2" x2="145.3" y2="119.5" stroke="#b0401a" stroke-opacity="0.5" stroke-width="0.9"/><line x1="144.8" y1="150.8" x2="141.1" y2="143.2" stroke="#1588a0" stroke-opacity="0.4" stroke-width="0.7"/><line x1="142.6" y1="151.9" x2="148.4" y2="149.0" stroke="#b0401a" stroke-opacity="0.5" stroke-width="0.9"/><line x1="144.7" y1="118.2" x2="141.7" y2="126.7" stroke="#1588a0" stroke-opacity="0.4" stroke-width="0.7"/><line x1="147.1" y1="119.0" x2="140.9" y2="116.8" stroke="#b0401a" stroke-opacity="0.5" stroke-width="0.9"/><line x1="131.1" y1="150.8" x2="134.9" y2="143.2" stroke="#1588a0" stroke-opacity="0.4" stroke-width="0.7"/><line x1="128.9" y1="149.7" x2="134.7" y2="152.6" stroke="#b0401a" stroke-opacity="0.5" stroke-width="0.9"/><line x1="152.2" y1="148.8" x2="145.3" y2="143.1" stroke="#1588a0" stroke-opacity="0.4" stroke-width="0.7"/><line x1="150.6" y1="150.7" x2="154.8" y2="145.7" stroke="#b0401a" stroke-opacity="0.5" stroke-width="0.9"/><line x1="116.1" y1="132.7" x2="124.9" y2="134.4" stroke="#1588a0" stroke-opacity="0.4" stroke-width="0.7"/><line x1="116.6" y1="130.2" x2="115.3" y2="136.6" stroke="#b0401a" stroke-opacity="0.5" stroke-width="0.9"/><line x1="133.8" y1="121.6" x2="136.1" y2="130.1" stroke="#1588a0" stroke-opacity="0.4" stroke-width="0.7"/><line x1="136.2" y1="121.0" x2="129.9" y2="122.7" stroke="#b0401a" stroke-opacity="0.5" stroke-width="0.9"/><rect x="31" y="36" width="3" height="3" fill="#acacac"/><rect x="40" y="33" width="3" height="3" fill="#acacac"/><rect x="38" y="39" width="3" height="3" fill="#acacac"/><rect x="32" y="31" width="3" height="3" fill="#acacac"/><rect x="35" y="38" width="3" height="3" fill="#acacac"/><rect x="36" y="31" width="3" height="3" fill="#acacac"/><rect x="42" y="26" width="3" height="3" fill="#acacac"/><rect x="48" y="32" width="3" height="3" fill="#acacac"/><rect x="46" y="40" width="3" height="3" fill="#acacac"/><rect x="26" y="31" width="3" height="3" fill="#acacac"/><rect x="40" y="46" width="3" height="3" fill="#acacac"/><rect x="50" y="50" width="3" height="3" fill="#acacac"/><rect x="40" y="52" width="3" height="3" fill="#acacac"/><rect x="57" y="31" width="3" height="3" fill="#acacac"/><rect x="29" y="56" width="3" height="3" fill="#acacac"/><rect x="48" y="19" width="3" height="3" fill="#acacac"/><rect x="54" y="48" width="3" height="3" fill="#acacac"/><rect x="39" y="17" width="3" height="3" fill="#acacac"/><rect x="32" y="50" width="3" height="3" fill="#acacac"/><rect x="37" y="55" width="3" height="3" fill="#acacac"/><rect x="23" y="49" width="3" height="3" fill="#acacac"/><rect x="17" y="25" width="3" height="3" fill="#acacac"/><rect x="43" y="50" width="3" height="3" fill="#acacac"/><rect x="54" y="23" width="3" height="3" fill="#acacac"/><rect x="36" y="52" width="3" height="3" fill="#acacac"/><rect x="35" y="13" width="3" height="3" fill="#acacac"/><rect x="43" y="56" width="3" height="3" fill="#acacac"/><rect x="51" y="22" width="3" height="3" fill="#acacac"/><rect x="22" y="43" width="3" height="3" fill="#acacac"/><rect x="58" y="40" width="3" height="3" fill="#acacac"/><rect x="22" y="25" width="3" height="3" fill="#acacac"/><rect x="45" y="53" width="3" height="3" fill="#acacac"/><rect x="51" y="42" width="3" height="3" fill="#acacac"/><rect x="51" y="27" width="3" height="3" fill="#acacac"/><rect x="53" y="37" width="3" height="3" fill="#acacac"/><rect x="22" y="52" width="3" height="3" fill="#acacac"/><rect x="29" y="17" width="3" height="3" fill="#acacac"/><rect x="46" y="47" width="3" height="3" fill="#acacac"/><rect x="15" y="37" width="3" height="3" fill="#acacac"/><rect x="42" y="14" width="3" height="3" fill="#acacac"/><rect x="18" y="46" width="3" height="3" fill="#acacac"/><rect x="23" y="22" width="3" height="3" fill="#acacac"/><rect x="54" y="45" width="3" height="3" fill="#acacac"/><rect x="34" y="17" width="3" height="3" fill="#acacac"/><rect x="16" y="43" width="3" height="3" fill="#acacac"/><rect x="19" y="37" width="3" height="3" fill="#acacac"/><rect x="19" y="21" width="3" height="3" fill="#acacac"/><rect x="27" y="53" width="3" height="3" fill="#acacac"/><rect x="31" y="13" width="3" height="3" fill="#acacac"/><rect x="19" y="40" width="3" height="3" fill="#acacac"/><rect x="47" y="24" width="3" height="3" fill="#acacac"/><rect x="44" y="20" width="3" height="3" fill="#acacac"/><rect x="19" y="48" width="3" height="3" fill="#acacac"/><rect x="55" y="26" width="3" height="3" fill="#acacac"/><rect x="26" y="21" width="3" height="3" fill="#acacac"/><rect x="23" y="19" width="3" height="3" fill="#acacac"/><rect x="15" y="30" width="3" height="3" fill="#acacac"/><rect x="41" y="19" width="3" height="3" fill="#acacac"/><rect x="51" y="30" width="3" height="3" fill="#acacac"/><rect x="30" y="20" width="3" height="3" fill="#acacac"/><rect x="34" y="54" width="3" height="3" fill="#acacac"/><rect x="20" y="32" width="3" height="3" fill="#acacac"/><rect x="48" y="44" width="3" height="3" fill="#acacac"/><rect x="21" y="28" width="3" height="3" fill="#acacac"/><rect x="57" y="43" width="3" height="3" fill="#acacac"/><rect x="56" y="35" width="3" height="3" fill="#acacac"/><rect x="36" y="20" width="3" height="3" fill="#acacac"/><rect x="40" y="56" width="3" height="3" fill="#acacac"/><rect x="132" y="37" width="3" height="3" fill="#acacac"/><rect x="135" y="33" width="3" height="3" fill="#acacac"/><rect x="141" y="36" width="3" height="3" fill="#acacac"/><rect x="136" y="41" width="3" height="3" fill="#acacac"/><rect x="140" y="39" width="3" height="3" fill="#acacac"/><rect x="139" y="32" width="3" height="3" fill="#acacac"/><rect x="149" y="38" width="3" height="3" fill="#acacac"/><rect x="127" y="41" width="3" height="3" fill="#acacac"/><rect x="139" y="47" width="3" height="3" fill="#acacac"/><rect x="146" y="43" width="3" height="3" fill="#acacac"/><rect x="130" y="46" width="3" height="3" fill="#acacac"/><rect x="155" y="42" width="3" height="3" fill="#acacac"/><rect x="141" y="53" width="3" height="3" fill="#acacac"/><rect x="115" y="39" width="3" height="3" fill="#acacac"/><rect x="148" y="55" width="3" height="3" fill="#acacac"/><rect x="126" y="49" width="3" height="3" fill="#acacac"/><rect x="137" y="14" width="3" height="3" fill="#acacac"/><rect x="154" y="37" width="3" height="3" fill="#acacac"/><rect x="139" y="18" width="3" height="3" fill="#acacac"/><rect x="138" y="51" width="3" height="3" fill="#acacac"/><rect x="159" y="34" width="3" height="3" fill="#acacac"/><rect x="122" y="36" width="3" height="3" fill="#acacac"/><rect x="128" y="55" width="3" height="3" fill="#acacac"/><rect x="147" y="18" width="3" height="3" fill="#acacac"/><rect x="135" y="58" width="3" height="3" fill="#acacac"/><rect x="150" y="26" width="3" height="3" fill="#acacac"/><rect x="131" y="57" width="3" height="3" fill="#acacac"/><rect x="117" y="34" width="3" height="3" fill="#acacac"/><rect x="132" y="20" width="3" height="3" fill="#acacac"/><rect x="133" y="53" width="3" height="3" fill="#acacac"/><rect x="129" y="17" width="3" height="3" fill="#acacac"/><rect x="152" y="52" width="3" height="3" fill="#acacac"/><rect x="122" y="44" width="3" height="3" fill="#acacac"/><rect x="116" y="45" width="3" height="3" fill="#acacac"/><rect x="118" y="29" width="3" height="3" fill="#acacac"/><rect x="157" y="25" width="3" height="3" fill="#acacac"/><rect x="118" y="24" width="3" height="3" fill="#acacac"/><rect x="157" y="38" width="3" height="3" fill="#acacac"/><rect x="155" y="23" width="3" height="3" fill="#acacac"/><rect x="137" y="54" width="3" height="3" fill="#acacac"/><rect x="147" y="48" width="3" height="3" fill="#acacac"/><rect x="154" y="29" width="3" height="3" fill="#acacac"/><rect x="128" y="20" width="3" height="3" fill="#acacac"/><rect x="151" y="31" width="3" height="3" fill="#acacac"/><rect x="141" y="58" width="3" height="3" fill="#acacac"/><rect x="147" y="52" width="3" height="3" fill="#acacac"/><rect x="150" y="19" width="3" height="3" fill="#acacac"/><rect x="156" y="33" width="3" height="3" fill="#acacac"/><rect x="135" y="18" width="3" height="3" fill="#acacac"/><rect x="143" y="20" width="3" height="3" fill="#acacac"/><rect x="120" y="50" width="3" height="3" fill="#acacac"/><rect x="124" y="24" width="3" height="3" fill="#acacac"/><rect x="124" y="52" width="3" height="3" fill="#acacac"/><rect x="153" y="48" width="3" height="3" fill="#acacac"/><rect x="119" y="32" width="3" height="3" fill="#acacac"/><rect x="146" y="22" width="3" height="3" fill="#acacac"/><rect x="150" y="44" width="3" height="3" fill="#acacac"/><rect x="120" y="21" width="3" height="3" fill="#acacac"/><rect x="120" y="39" width="3" height="3" fill="#acacac"/><rect x="124" y="21" width="3" height="3" fill="#acacac"/><rect x="132" y="16" width="3" height="3" fill="#acacac"/><rect x="130" y="52" width="3" height="3" fill="#acacac"/><rect x="156" y="46" width="3" height="3" fill="#acacac"/><rect x="143" y="16" width="3" height="3" fill="#acacac"/><rect x="153" y="34" width="3" height="3" fill="#acacac"/><rect x="122" y="30" width="3" height="3" fill="#acacac"/><rect x="158" y="29" width="3" height="3" fill="#acacac"/><rect x="143" y="50" width="3" height="3" fill="#acacac"/><rect x="37" y="141" width="3" height="3" fill="#acacac"/><rect x="35" y="131" width="3" height="3" fill="#acacac"/><rect x="34" y="135" width="3" height="3" fill="#acacac"/><rect x="40" y="132" width="3" height="3" fill="#acacac"/><rect x="41" y="136" width="3" height="3" fill="#acacac"/><rect x="40" y="141" width="3" height="3" fill="#acacac"/><rect x="42" y="125" width="3" height="3" fill="#acacac"/><rect x="49" y="132" width="3" height="3" fill="#acacac"/><rect x="36" y="148" width="3" height="3" fill="#acacac"/><rect x="25" y="137" width="3" height="3" fill="#acacac"/><rect x="27" y="132" width="3" height="3" fill="#acacac"/><rect x="25" y="150" width="3" height="3" fill="#acacac"/><rect x="31" y="151" width="3" height="3" fill="#acacac"/><rect x="46" y="117" width="3" height="3" fill="#acacac"/><rect x="57" y="134" width="3" height="3" fill="#acacac"/><rect x="17" y="129" width="3" height="3" fill="#acacac"/><rect x="50" y="151" width="3" height="3" fill="#acacac"/><rect x="21" y="142" width="3" height="3" fill="#acacac"/><rect x="43" y="154" width="3" height="3" fill="#acacac"/><rect x="37" y="155" width="3" height="3" fill="#acacac"/><rect x="23" y="125" width="3" height="3" fill="#acacac"/><rect x="55" y="145" width="3" height="3" fill="#acacac"/><rect x="55" y="131" width="3" height="3" fill="#acacac"/><rect x="33" y="114" width="3" height="3" fill="#acacac"/><rect x="53" y="140" width="3" height="3" fill="#acacac"/><rect x="26" y="123" width="3" height="3" fill="#acacac"/><rect x="18" y="147" width="3" height="3" fill="#acacac"/><rect x="53" y="122" width="3" height="3" fill="#acacac"/><rect x="20" y="126" width="3" height="3" fill="#acacac"/><rect x="47" y="154" width="3" height="3" fill="#acacac"/><rect x="50" y="147" width="3" height="3" fill="#acacac"/><rect x="55" y="137" width="3" height="3" fill="#acacac"/><rect x="15" y="136" width="3" height="3" fill="#acacac"/><rect x="18" y="134" width="3" height="3" fill="#acacac"/><rect x="28" y="121" width="3" height="3" fill="#acacac"/><rect x="56" y="140" width="3" height="3" fill="#acacac"/><rect x="55" y="125" width="3" height="3" fill="#acacac"/><rect x="47" y="122" width="3" height="3" fill="#acacac"/><rect x="25" y="127" width="3" height="3" fill="#acacac"/><rect x="39" y="119" width="3" height="3" fill="#acacac"/><rect x="18" y="138" width="3" height="3" fill="#acacac"/><rect x="27" y="156" width="3" height="3" fill="#acacac"/><rect x="22" y="131" width="3" height="3" fill="#acacac"/><rect x="26" y="117" width="3" height="3" fill="#acacac"/><rect x="21" y="121" width="3" height="3" fill="#acacac"/><rect x="50" y="126" width="3" height="3" fill="#acacac"/><rect x="30" y="157" width="3" height="3" fill="#acacac"/><rect x="35" y="120" width="3" height="3" fill="#acacac"/><rect x="16" y="141" width="3" height="3" fill="#acacac"/><rect x="44" y="150" width="3" height="3" fill="#acacac"/><rect x="52" y="128" width="3" height="3" fill="#acacac"/><rect x="40" y="151" width="3" height="3" fill="#acacac"/><rect x="31" y="118" width="3" height="3" fill="#acacac"/><rect x="55" y="149" width="3" height="3" fill="#acacac"/><rect x="24" y="121" width="3" height="3" fill="#acacac"/><rect x="50" y="123" width="3" height="3" fill="#acacac"/><rect x="42" y="114" width="3" height="3" fill="#acacac"/><rect x="52" y="144" width="3" height="3" fill="#acacac"/><rect x="53" y="133" width="3" height="3" fill="#acacac"/><rect x="33" y="155" width="3" height="3" fill="#acacac"/><rect x="43" y="120" width="3" height="3" fill="#acacac"/><rect x="27" y="147" width="3" height="3" fill="#acacac"/><rect x="36" y="116" width="3" height="3" fill="#acacac"/><rect x="21" y="135" width="3" height="3" fill="#acacac"/><rect x="30" y="115" width="3" height="3" fill="#acacac"/><rect x="23" y="153" width="3" height="3" fill="#acacac"/><rect x="58" y="129" width="3" height="3" fill="#acacac"/><rect x="24" y="146" width="3" height="3" fill="#acacac"/><rect x="141" y="139" width="3" height="3" fill="#acacac"/><rect x="134" y="131" width="3" height="3" fill="#acacac"/><rect x="137" y="140" width="3" height="3" fill="#acacac"/><rect x="133" y="139" width="3" height="3" fill="#acacac"/><rect x="140" y="134" width="3" height="3" fill="#acacac"/><rect x="132" y="134" width="3" height="3" fill="#acacac"/><rect x="143" y="146" width="3" height="3" fill="#acacac"/><rect x="146" y="141" width="3" height="3" fill="#acacac"/><rect x="148" y="135" width="3" height="3" fill="#acacac"/><rect x="127" y="128" width="3" height="3" fill="#acacac"/><rect x="145" y="128" width="3" height="3" fill="#acacac"/><rect x="143" y="154" width="3" height="3" fill="#acacac"/><rect x="141" y="157" width="3" height="3" fill="#acacac"/><rect x="121" y="136" width="3" height="3" fill="#acacac"/><rect x="144" y="122" width="3" height="3" fill="#acacac"/><rect x="134" y="151" width="3" height="3" fill="#acacac"/><rect x="136" y="120" width="3" height="3" fill="#acacac"/><rect x="117" y="139" width="3" height="3" fill="#acacac"/><rect x="119" y="132" width="3" height="3" fill="#acacac"/><rect x="124" y="127" width="3" height="3" fill="#acacac"/><rect x="152" y="119" width="3" height="3" fill="#acacac"/><rect x="152" y="143" width="3" height="3" fill="#acacac"/><rect x="131" y="117" width="3" height="3" fill="#acacac"/><rect x="157" y="138" width="3" height="3" fill="#acacac"/><rect x="154" y="130" width="3" height="3" fill="#acacac"/><rect x="126" y="152" width="3" height="3" fill="#acacac"/><rect x="124" y="122" width="3" height="3" fill="#acacac"/><rect x="136" y="154" width="3" height="3" fill="#acacac"/><rect x="154" y="140" width="3" height="3" fill="#acacac"/><rect x="157" y="134" width="3" height="3" fill="#acacac"/><rect x="133" y="158" width="3" height="3" fill="#acacac"/><rect x="149" y="124" width="3" height="3" fill="#acacac"/><rect x="152" y="127" width="3" height="3" fill="#acacac"/><rect x="119" y="129" width="3" height="3" fill="#acacac"/><rect x="116" y="135" width="3" height="3" fill="#acacac"/><rect x="140" y="118" width="3" height="3" fill="#acacac"/><rect x="137" y="158" width="3" height="3" fill="#acacac"/><rect x="148" y="149" width="3" height="3" fill="#acacac"/><rect x="119" y="142" width="3" height="3" fill="#acacac"/><rect x="122" y="150" width="3" height="3" fill="#acacac"/><rect x="123" y="143" width="3" height="3" fill="#acacac"/><rect x="140" y="152" width="3" height="3" fill="#acacac"/><rect x="129" y="121" width="3" height="3" fill="#acacac"/><rect x="157" y="127" width="3" height="3" fill="#acacac"/><rect x="156" y="144" width="3" height="3" fill="#acacac"/><rect x="155" y="148" width="3" height="3" fill="#acacac"/><rect x="117" y="146" width="3" height="3" fill="#acacac"/><rect x="154" y="136" width="3" height="3" fill="#acacac"/><rect x="155" y="123" width="3" height="3" fill="#acacac"/><rect x="122" y="147" width="3" height="3" fill="#acacac"/><rect x="157" y="130" width="3" height="3" fill="#acacac"/><rect x="123" y="131" width="3" height="3" fill="#acacac"/><rect x="128" y="118" width="3" height="3" fill="#acacac"/><rect x="125" y="119" width="3" height="3" fill="#acacac"/><rect x="136" y="116" width="3" height="3" fill="#acacac"/><rect x="151" y="152" width="3" height="3" fill="#acacac"/><rect x="147" y="155" width="3" height="3" fill="#acacac"/><rect x="118" y="124" width="3" height="3" fill="#acacac"/><rect x="130" y="153" width="3" height="3" fill="#acacac"/><rect x="140" y="115" width="3" height="3" fill="#acacac"/><rect x="127" y="125" width="3" height="3" fill="#acacac"/><rect x="148" y="121" width="3" height="3" fill="#acacac"/><rect x="144" y="150" width="3" height="3" fill="#acacac"/><rect x="144" y="117" width="3" height="3" fill="#acacac"/><rect x="130" y="150" width="3" height="3" fill="#acacac"/><rect x="151" y="148" width="3" height="3" fill="#acacac"/><rect x="115" y="132" width="3" height="3" fill="#acacac"/><rect x="133" y="121" width="3" height="3" fill="#acacac"/></svg><svg class="abs" style="left:385px;top:342px" width="90" height="17"><rect x="0.5" y="0.5" width="89" height="16" fill="#484848" stroke="#1a1a1a"/><path d="M1,15.5 L14.5,15.5 L22,8.2 Q23.2,7.2 24.4,8.2 L33.5,15.5 L49,15.5 L63,4.6 Q71.5,-1 80,4.6 L89,14" fill="none" stroke="#1ed41e" stroke-width="1.1"/></svg><div class="fld" style="left:897px;top:289px;width:90px;height:18px;letter-spacing:0.1px;padding-left:2px"><span>Missing (GameObject)</span></div><svg class="abs" style="left:968px;top:290px" width="18" height="16"><rect x="0" y="0" width="18" height="16" fill="#2a2a2a"/><circle cx="9" cy="8" r="4.6" fill="none" stroke="#c4c4c4" stroke-width="1.1"/><circle cx="9" cy="8" r="1.6" fill="#c4c4c4"/></svg><div class="abs" style="left:1051px;top:129px;width:176px;height:49px;background:#323232;border:1px solid #1e1e1e;box-sizing:border-box;border-radius:4px;overflow:hidden"><div style="height:19px;background:#2a2a2a;border-bottom:1px solid #1e1e1e"></div></div><div class="abs" style="left:1159px;top:176px;width:58px;height:21px;background:#323232;border:1px solid #1e1e1e;border-top:none;box-sizing:border-box;border-radius:0 0 4px 4px"></div><div class="lbl" style="left:1058px;top:130px;color:#c4c4c4;font-size:12px;letter-spacing:0.15px">Global Graph Output</div><div class="lbl" style="left:1059px;top:154px;color:#c4c4c4;font-size:12px;letter-spacing:0.1px">List is Empty</div><svg class="abs" style="left:1165px;top:178px" width="45" height="16"><rect x="5" y="7" width="10" height="2" fill="#c8c8c8"/><rect x="9" y="3" width="2" height="10" fill="#c8c8c8"/><rect x="31" y="7" width="8" height="2" fill="#8a8a8a"/></svg><div class="abs" style="left:1051px;top:200px;width:176px;height:38px;background:#556f65;border:1px solid #1a1a1a;box-sizing:border-box;border-radius:4px"></div><svg class="abs" style="left:1055px;top:203px" width="32" height="34"><circle cx="15" cy="15" r="12.8" fill="#c8c8c8"/><polygon points="19,25 26.5,31 24,21" fill="#c8c8c8"/><polygon points="13.3,6 16.7,6 15.8,17.5 14.2,17.5" fill="#556f65"/><circle cx="15" cy="21" r="2" fill="#556f65"/></svg><div class="abs" style="left:1088.7px;top:208.5px;will-change:transform;font-size:10px;line-height:12px;letter-spacing:0.35px;color:#a4b2ac;white-space:nowrap">Up to 1 Buffers. At 512x512<br>up to 1MB of RAM/VRAM.</div>
<svg class="layer" width="1266" height="669"><circle cx="483" cy="77" r="7.4" fill="#765a9e"/><circle cx="483" cy="77" r="6.8" fill="#b266ff"/><circle cx="1043" cy="77" r="7.4" fill="#59786b"/><circle cx="1043" cy="77" r="6.8" fill="#b266ff"/><circle cx="1043" cy="97" r="7.4" fill="#59786b"/><circle cx="1043" cy="97" r="6.8" fill="#4a8cff"/><circle cx="1043" cy="117" r="7.4" fill="#59786b"/><circle cx="1043" cy="117" r="6.8" fill="#ff00dc"/><circle cx="227" cy="269" r="7.4" fill="#44713b"/><circle cx="227" cy="269" r="6.8" fill="#34a014"/><circle cx="483" cy="269" r="7.4" fill="#44713b"/><circle cx="483" cy="269" r="6.8" fill="#34a014"/><circle cx="291" cy="289" r="7.4" fill="#44713b"/><circle cx="291" cy="289" r="6.8" fill="#34a014"/><circle cx="755" cy="237" r="7.4" fill="#44713b"/><circle cx="755" cy="237" r="6.8" fill="#34a014"/><circle cx="563" cy="257" r="7.4" fill="#44713b"/><circle cx="563" cy="257" r="6.8" fill="#b266ff"/><circle cx="563" cy="277" r="7.4" fill="#44713b"/><circle cx="563" cy="277" r="6.8" fill="#34a014"/><circle cx="995" cy="237" r="7.4" fill="#8f3290"/><circle cx="995" cy="237" r="6.8" fill="#ff00dc"/><circle cx="803" cy="277" r="7.4" fill="#8f3290"/><circle cx="803" cy="277" r="6.8" fill="#34a014"/><circle cx="803" cy="317" r="7.4" fill="#8f3290"/><circle cx="803" cy="317" r="6.8" fill="#eea70c"/></svg>
</body></html>
